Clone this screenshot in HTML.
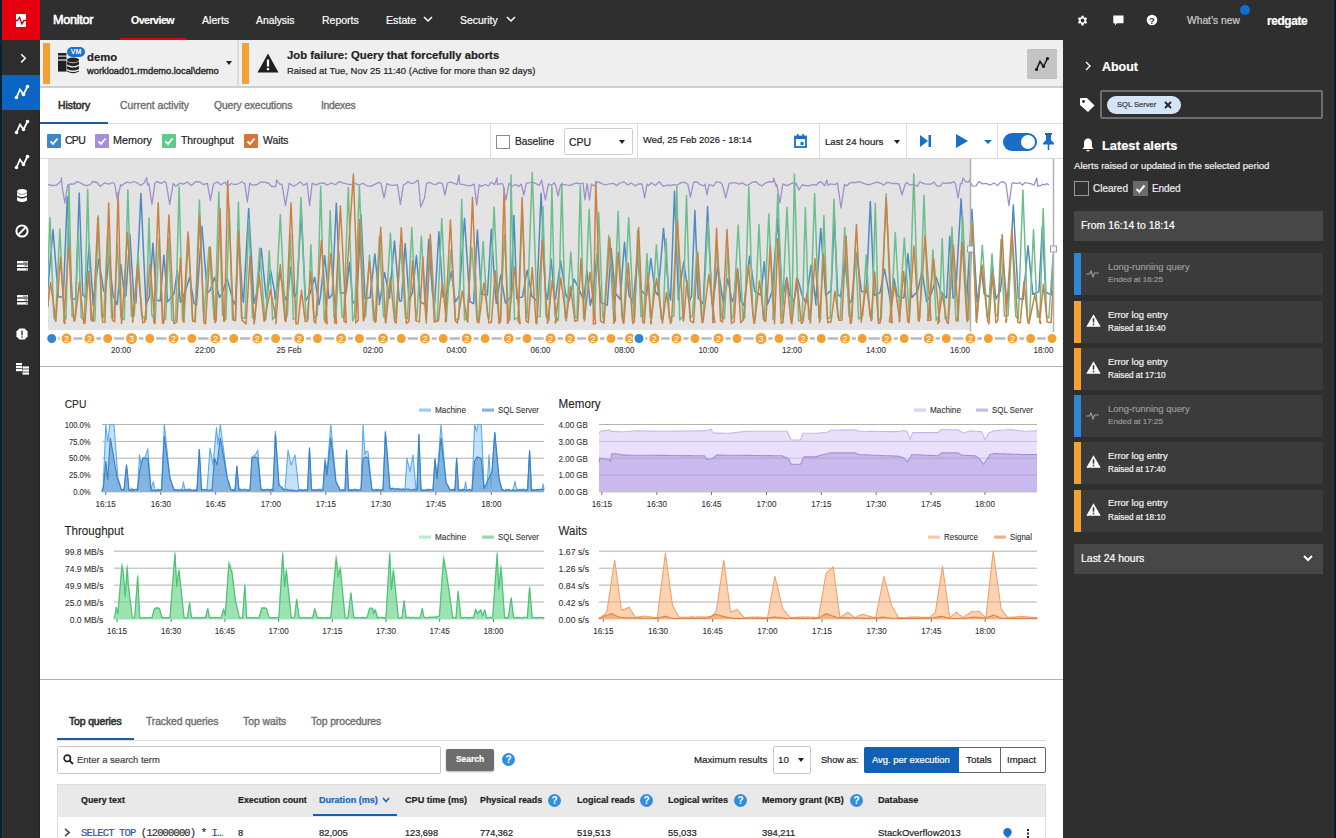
<!DOCTYPE html>
<html><head><meta charset="utf-8">
<style>
*{margin:0;padding:0;box-sizing:border-box}
html,body{width:1336px;height:838px;overflow:hidden;background:#fff;font-family:"Liberation Sans",sans-serif;color:#222}
.a{position:absolute}
.t{position:absolute;white-space:nowrap;line-height:1;-webkit-text-stroke:0.2px currentColor}
#hdr{left:0;top:0;width:1336px;height:40px;background:#2f2f2f}
#side{left:0;top:0;width:40px;height:838px;background:#2d2d2d}
#navy{left:0;top:0;width:2px;height:838px;background:#03242f;border-right:0}
#navy2{left:2px;top:0;width:1px;height:838px;background:#2e3440}
#sline{left:39px;top:40px;width:1px;height:798px;background:#232323}
#rnavy{left:1334px;top:0;width:2px;height:838px;background:#0c1d2e}
#rnavy2{left:1332px;top:0;width:2px;height:838px;background:#2e323c}
#rp{left:1063px;top:40px;width:269px;height:798px;background:#2f2f2f}
.nav{color:#fff;font-size:12px;font-weight:bold}
.sideico{left:2px;width:38px;height:34px}
.card{left:1074px;width:249px;height:42px;background:#3b3b3b}
.bar{left:1074px;width:7px;height:42px}
.ti{font-size:11px}
.su{font-size:9.5px}
.dim{color:#9a9a9a}
.wht{color:#f2f2f2}
.th{font-size:10px;font-weight:bold;color:#222}
.td{font-size:10px;color:#222}
.qh{width:13px;height:13px;border-radius:50%;background:#2f8ee0;color:#fff;font-size:10px;font-weight:bold;text-align:center;line-height:13px}
</style></head>
<body>
<div class="a" id="hdr"></div>
<div class="a" id="side"></div>
<div class="a" id="navy"></div><div class="a" id="navy2"></div><div class="a" id="sline"></div>
<div class="a" id="rp"></div>
<div class="a" id="rnavy2"></div><div class="a" id="rnavy"></div>

<!-- logo -->
<div class="a" style="left:2px;top:0;width:38px;height:40px;background:#e4000f"></div>
<svg class="a" style="left:16px;top:14px" width="10" height="13" viewBox="0 0 10 13"><rect x="0" y="0" width="10" height="13" rx="0.8" fill="#fff"/><path d="M0 6.5 H1.5 L3.5 3.5 L6 10 L8 6.5 H10" fill="none" stroke="#b3001b" stroke-width="1.3"/></svg>
<div class="t" style="left:53px;font-size:13px;font-weight:normal;-webkit-text-stroke:0.6px #fff;color:#fff;letter-spacing:-0.3px;top:14px;font-size:12.70px">Monitor</div>
<div class="t nav fitls" style="left:131px;top:15px;font-size:10.6px;letter-spacing:-0.516px">Overview</div>
<div class="a" style="left:120px;top:37.5px;width:67px;height:2.5px;background:#e4000f"></div>
<div class="t nav" style="left:202px;font-weight:normal;top:15px;font-size:10.64px">Alerts</div>
<div class="t nav" style="left:256px;font-weight:normal;top:16px;font-size:10.34px">Analysis</div>
<div class="t nav" style="left:322px;font-weight:normal;top:15px;font-size:10.51px">Reports</div>
<div class="t nav" style="left:386px;font-weight:normal;top:15px;font-size:10.68px">Estate</div>
<svg class="a" style="left:423px;top:16px" width="10" height="7"><path d="M1 1 L5 5 L9 1" fill="none" stroke="#fff" stroke-width="1.5"/></svg>
<div class="t nav" style="left:460px;font-weight:normal;top:16px;font-size:10.41px">Security</div>
<svg class="a" style="left:506px;top:16px" width="10" height="7"><path d="M1 1 L5 5 L9 1" fill="none" stroke="#fff" stroke-width="1.5"/></svg>

<!-- header right icons -->
<svg class="a" style="left:1076px;top:14px" width="13" height="13" viewBox="0 0 24 24"><path fill="#fff" d="M19.4 13a7.5 7.5 0 0 0 0-2l2.1-1.6-2-3.5-2.5 1a7 7 0 0 0-1.7-1L15 3h-4l-.4 2.8a7 7 0 0 0-1.7 1l-2.5-1-2 3.5L6.6 11a7.5 7.5 0 0 0 0 2l-2.1 1.6 2 3.5 2.5-1a7 7 0 0 0 1.7 1L11 21h4l.4-2.8a7 7 0 0 0 1.7-1l2.5 1 2-3.5zM13 15.5a3.5 3.5 0 1 1 0-7 3.5 3.5 0 0 1 0 7z" transform="translate(-1 0)"/></svg>
<svg class="a" style="left:1113px;top:15px" width="11" height="11" viewBox="0 0 11 11"><path d="M0.3 0.5 H10.5 V8.3 H3.8 L2 10.5 V8.3 H0.3 Z" fill="#fff"/></svg>
<svg class="a" style="left:1146px;top:14px" width="12" height="12" viewBox="0 0 12 12"><circle cx="6" cy="6" r="5.3" fill="#fff"/><text x="6" y="9.6" font-size="9.5" font-weight="bold" text-anchor="middle" fill="#2f2f2f" font-family="Liberation Sans">?</text></svg>
<div class="t" style="left:1187px;font-size:11px;color:#d0d0d0;top:16px;font-size:10.25px">What’s new</div>
<div class="a" style="left:1240px;top:5px;width:10px;height:10px;border-radius:50%;background:#0f6fd0"></div>
<div class="t" style="left:1267px;font-size:12.5px;font-weight:bold;color:#fff;letter-spacing:-0.4px;top:16px;font-size:11.92px">redgate</div>

<!-- sidebar icons -->
<div class="a" style="left:2px;top:41px;width:38px;height:34px;background:#2d2d2d"></div>
<svg class="a" style="left:20px;top:53px" width="7" height="11"><path d="M1.2 1.2 L5.3 5.3 L1.2 9.4" fill="none" stroke="#fff" stroke-width="1.5"/></svg>
<div class="a" style="left:2px;top:75px;width:38px;height:35px;background:#0b66c3"></div>
<svg class="a" style="left:14px;top:84px" width="16" height="16" viewBox="0 0 16 16"><path d="M2.5 13.5 L6 5.5 L9.5 10.5 L13.5 2.5" fill="none" stroke="#fff" stroke-width="1.8"/><circle cx="2.5" cy="13.5" r="1.8" fill="#fff"/><circle cx="9.5" cy="10.5" r="1.8" fill="#fff"/><circle cx="13.5" cy="2.5" r="1.8" fill="#fff"/></svg>
<svg class="a" style="left:14px;top:119px" width="16" height="16" viewBox="0 0 16 16"><path d="M2.5 13.5 L6 5.5 L9.5 10.5 L13.5 2.5" fill="none" stroke="#fff" stroke-width="1.8"/><circle cx="2.5" cy="13.5" r="1.8" fill="#fff"/><circle cx="9.5" cy="10.5" r="1.8" fill="#fff"/><circle cx="13.5" cy="2.5" r="1.8" fill="#fff"/></svg>
<svg class="a" style="left:14px;top:154px" width="16" height="16" viewBox="0 0 16 16"><path d="M2.5 13.5 L6 5.5 L9.5 10.5 L13.5 2.5" fill="none" stroke="#fff" stroke-width="1.8"/><circle cx="2.5" cy="13.5" r="1.8" fill="#fff"/><circle cx="9.5" cy="10.5" r="1.8" fill="#fff"/><circle cx="13.5" cy="2.5" r="1.8" fill="#fff"/></svg>
<svg class="a" style="left:17px;top:189px" width="10" height="14" viewBox="0 0 10 14"><ellipse cx="5" cy="2.5" rx="5" ry="2.5" fill="#fff"/><path d="M0 4 Q5 7 10 4 V6.5 Q5 9.5 0 6.5Z M0 8 Q5 11 10 8 V11.5 Q5 14.5 0 11.5Z" fill="#fff"/></svg>
<svg class="a" style="left:15px;top:224px" width="14" height="14" viewBox="0 0 14 14"><circle cx="7" cy="7" r="5.6" fill="none" stroke="#fff" stroke-width="2"/><path d="M3 11 L11 3" stroke="#fff" stroke-width="2"/></svg>
<svg class="a" style="left:17px;top:261px" width="11" height="10" viewBox="0 0 11 10"><rect x="0" y="0" width="11" height="2.4" fill="#fff"/><rect x="0" y="3.6" width="11" height="2.4" fill="#fff"/><rect x="0" y="7.2" width="11" height="2.4" fill="#fff"/><rect x="6" y="0.6" width="4.4" height="1.2" fill="#888"/><rect x="7.5" y="4.2" width="2.9" height="1.2" fill="#888"/><rect x="9" y="7.8" width="1.4" height="1.2" fill="#888"/></svg>
<svg class="a" style="left:17px;top:295px" width="11" height="10" viewBox="0 0 11 10"><rect x="0" y="0" width="11" height="2.4" fill="#fff"/><rect x="0" y="3.6" width="11" height="2.4" fill="#fff"/><rect x="0" y="7.2" width="11" height="2.4" fill="#fff"/><rect x="6" y="0.6" width="4.4" height="1.2" fill="#888"/><rect x="7.5" y="4.2" width="2.9" height="1.2" fill="#888"/><rect x="9" y="7.8" width="1.4" height="1.2" fill="#888"/></svg>
<svg class="a" style="left:16px;top:328px" width="12" height="12" viewBox="0 0 14 14"><path d="M4 0.5 H10 L13.5 4 V10 L10 13.5 H4 L0.5 10 V4 Z" fill="#fff"/><rect x="6.2" y="3" width="1.6" height="5.5" fill="#2d2d2d"/><rect x="6.2" y="9.8" width="1.6" height="1.6" fill="#2d2d2d"/></svg>
<svg class="a" style="left:16px;top:363px" width="13" height="12" viewBox="0 0 13 12"><rect x="0" y="0" width="6" height="2.2" fill="#fff"/><rect x="0" y="3" width="6" height="2.2" fill="#fff"/><rect x="0" y="6" width="6" height="2.2" fill="#fff"/><rect x="6.5" y="3.4" width="6.5" height="2.2" fill="#fff"/><rect x="6.5" y="6.4" width="6.5" height="2.2" fill="#fff"/><rect x="6.5" y="9.4" width="6.5" height="2.2" fill="#fff"/></svg>

<!-- banner -->
<div class="a" style="left:40px;top:40px;width:1023px;height:46px;background:#efefef"></div>
<div class="a" style="left:40px;top:86px;width:1023px;height:2px;background:#cfcfcf"></div>
<div class="a" style="left:43px;top:43px;width:7px;height:41px;background:#f5a030"></div>
<div class="a" style="left:237px;top:40px;width:2px;height:46px;background:#dcdcdc"></div>
<div class="a" style="left:242px;top:43px;width:7px;height:41px;background:#f5a030"></div>
<!-- db icon -->
<svg class="a" style="left:57px;top:52px" width="24" height="23" viewBox="0 0 24 23">
<rect x="1" y="1" width="8.5" height="2.6" fill="#222"/><rect x="1" y="4.6" width="8.5" height="2.8" fill="#222"/><rect x="1" y="8.6" width="8.5" height="11" fill="#222"/>
<ellipse cx="16" cy="8" rx="6" ry="2.4" fill="#222"/>
<path d="M10 9.6 Q16 12.8 22 9.6 V12.6 Q16 15.8 10 12.6Z M10 14 Q16 17.2 22 14 V17 Q16 20.2 10 17Z M10 18.4 Q16 21.6 22 18.4 V19.6 Q16 23 10 19.6Z" fill="#222"/>
</svg>
<div class="a" style="left:67px;top:47px;width:18px;height:10px;border-radius:5px;background:#1a73d0;color:#fff;font-size:7px;font-weight:bold;text-align:center;line-height:10px">VM</div>
<div class="t" style="left:87px;font-size:13px;font-weight:bold;color:#222;top:52px;font-size:11.32px">demo</div>
<div class="t" style="left:87px;font-size:10px;color:#222;-webkit-text-stroke:0.35px #222;top:67px;font-size:9.31px">workload01.rmdemo.local\demo</div>
<svg class="a" style="left:226px;top:61px" width="6" height="4"><path d="M0 0 H6 L3 4Z" fill="#222"/></svg>
<svg class="a" style="left:257px;top:53px" width="22" height="20" viewBox="0 0 22 20"><path d="M11 0.5 L21.5 19.5 H0.5 Z" fill="#1f1f1f"/><rect x="9.9" y="6.5" width="2.2" height="7" fill="#fff"/><rect x="9.9" y="15" width="2.2" height="2.2" fill="#fff"/></svg>
<div class="t" style="left:287px;font-size:12.5px;font-weight:bold;color:#222;top:50px;font-size:11.30px">Job failure: Query that forcefully aborts</div>
<div class="t" style="left:287px;font-size:10px;color:#222;top:66px;font-size:9.46px">Raised at Tue, Nov 25 11:40 (Active for more than 92 days)</div>
<div class="a" style="left:1027px;top:49px;width:30px;height:30px;background:#c4c4c4"></div>
<svg class="a" style="left:1034px;top:56px" width="16" height="16" viewBox="0 0 16 16"><path d="M2.5 13.5 L6 5.5 L9.5 10.5 L13.5 2.5" fill="none" stroke="#1a1a1a" stroke-width="1.6"/><circle cx="2.5" cy="13.5" r="1.6" fill="#1a1a1a"/><circle cx="9.5" cy="10.5" r="1.6" fill="#1a1a1a"/><circle cx="13.5" cy="2.5" r="1.6" fill="#1a1a1a"/></svg>

<!-- tabs -->
<div class="t fitls" style="left:58px;font-size:10.4px;color:#333;letter-spacing:0px;-webkit-text-stroke:0.6px #333;top:101px;letter-spacing:-0.021px">History</div>
<div class="t fitls" style="left:120px;font-size:10.4px;color:#6e6e6e;letter-spacing:0px;-webkit-text-stroke:0.35px #6e6e6e;top:101px;letter-spacing:-0.019px">Current activity</div>
<div class="t fitls" style="left:214px;font-size:10.4px;color:#6e6e6e;letter-spacing:0px;-webkit-text-stroke:0.35px #6e6e6e;top:101px;letter-spacing:-0.166px">Query executions</div>
<div class="t fitls" style="left:321px;font-size:10.4px;color:#6e6e6e;letter-spacing:0px;-webkit-text-stroke:0.35px #6e6e6e;top:101px;letter-spacing:-0.301px">Indexes</div>
<div class="a" style="left:40px;top:123px;width:1023px;height:1px;background:#dedede"></div>
<div class="a" style="left:40px;top:122px;width:68px;height:2px;background:#1f5c98"></div>

<!-- checkbox row -->
<div class="a" style="left:40px;top:158px;width:1023px;height:1px;background:#d6d6d6"></div>
<div class="a" style="left:47px;top:134px;width:14px;height:14px;background:#3f86c8;border-radius:1px"></div>
<div class="a" style="left:95px;top:134px;width:14px;height:14px;background:#a48fd8;border-radius:1px"></div>
<div class="a" style="left:162px;top:134px;width:14px;height:14px;background:#63c98c;border-radius:1px"></div>
<div class="a" style="left:244px;top:134px;width:14px;height:14px;background:#d5753a;border-radius:1px"></div>
<svg class="a" style="left:47px;top:134px" width="211" height="14"><g fill="none" stroke="#fff" stroke-width="1.8"><path d="M3.5 7.5 L6 10 L10.5 4.5"/><path d="M51.5 7.5 L54 10 L58.5 4.5"/><path d="M118.5 7.5 L121 10 L125.5 4.5"/><path d="M200.5 7.5 L203 10 L207.5 4.5"/></g></svg>
<div class="t fitls" style="left:65px;font-size:10.5px;color:#222;top:135px;letter-spacing:-0.724px">CPU</div>
<div class="t" style="left:113px;font-size:11px;color:#222;top:135px;font-size:10.80px">Memory</div>
<div class="t" style="left:181px;font-size:11px;color:#222;top:136px;font-size:10.34px">Throughput</div>
<div class="t" style="left:263px;font-size:11px;color:#222;top:136px;font-size:10.39px">Waits</div>
<div class="a" style="left:490px;top:124px;width:1px;height:34px;background:#dcdcdc"></div>
<div class="a" style="left:496px;top:135px;width:14px;height:14px;border:1px solid #8a8a8a;background:#fff"></div>
<div class="t" style="left:515px;font-size:11px;color:#222;top:137px;font-size:10.22px">Baseline</div>
<div class="a" style="left:564px;top:128px;width:69px;height:27px;border:1px solid #cfcfcf;border-radius:2px"></div>
<div class="t fitls" style="left:569px;font-size:10.5px;color:#222;top:137px">CPU</div>
<svg class="a" style="left:619px;top:140px" width="6" height="4"><path d="M0 0 H6 L3 4Z" fill="#222"/></svg>
<div class="a" style="left:637px;top:124px;width:1px;height:34px;background:#dcdcdc"></div>
<div class="t" style="left:643px;font-size:10px;color:#222;top:135px;font-size:9.40px">Wed, 25 Feb 2026 - 18:14</div>
<svg class="a" style="left:794px;top:134px" width="13" height="14" viewBox="0 0 13 14"><rect x="1" y="2.5" width="11" height="10.5" fill="none" stroke="#1a6ec8" stroke-width="1.8"/><rect x="1" y="2" width="11" height="3" fill="#1a6ec8"/><rect x="3" y="0" width="1.6" height="3" fill="#1a6ec8"/><rect x="8.4" y="0" width="1.6" height="3" fill="#1a6ec8"/><rect x="6.5" y="8" width="3" height="3" fill="#1a6ec8"/></svg>
<div class="a" style="left:819px;top:124px;width:1px;height:34px;background:#dcdcdc"></div>
<div class="t" style="left:825px;font-size:10.5px;color:#222;top:137px;font-size:9.64px">Last 24 hours</div>
<svg class="a" style="left:894px;top:140px" width="6" height="4"><path d="M0 0 H6 L3 4Z" fill="#222"/></svg>
<div class="a" style="left:906px;top:124px;width:1px;height:34px;background:#dcdcdc"></div>
<svg class="a" style="left:920px;top:135px" width="11" height="12" viewBox="0 0 11 12"><path d="M0 0 L8 6 L0 12Z" fill="#1a6ec8"/><rect x="8.5" y="0" width="2.5" height="12" fill="#1a6ec8"/></svg>
<svg class="a" style="left:956px;top:134px" width="12" height="14" viewBox="0 0 12 14"><path d="M0 0 L12 7 L0 14Z" fill="#1a6ec8"/></svg>
<svg class="a" style="left:984px;top:140px" width="8" height="4"><path d="M0 0 H8 L4 4Z" fill="#1a6ec8"/></svg>
<div class="a" style="left:997px;top:124px;width:1px;height:34px;background:#dcdcdc"></div>
<div class="a" style="left:1003px;top:133px;width:34px;height:18px;border-radius:9px;background:#1a6ec8"></div>
<div class="a" style="left:1021px;top:135px;width:14px;height:14px;border-radius:50%;background:#fff"></div>
<svg class="a" style="left:1042px;top:133px" width="13" height="17" viewBox="0 0 13 17"><path d="M3 0 H10 V2 H9 V7 L12 10 V11.5 H7.3 V17 H5.7 V11.5 H1 V10 L4 7 V2 H3Z" fill="#1a6ec8"/></svg>

<svg width="1336" height="838" style="position:absolute;left:0;top:0">
<rect x="48" y="159" width="922" height="171" fill="#e3e3e3"/>
<g fill="none" stroke-width="1.5" stroke-linejoin="round" clip-path="url(#mc)">
<clipPath id="mc"><rect x="48" y="159" width="1005" height="172"/></clipPath>
<path d="M48 306 L47.7 290.8 L53 229.6 L58.3 296.5 L63.3 297.5 L67.3 196.7 L71.3 298.9 L75.7 298.7 L79.2 193 L82.7 294.6 L85.2 297.8 L89.2 244.7 L93.2 305.1 L93.7 296.6 L98.7 259.2 L103.6 290.5 L105.2 293.8 L109.1 256.5 L113 295.4 L117.1 304.6 L120.9 264.5 L124.6 296.6 L125.9 295.7 L129.9 234.8 L134 300.8 L135.9 302.9 L140.9 193.5 L145.9 305.4 L149.3 296.8 L152.9 243.2 L156.5 300.1 L160.2 301.1 L163.9 255.2 L167.6 301.9 L174.1 293.5 L177.3 270.6 L180.5 302.2 L185.4 291.3 L189.7 277 L194 303.3 L196.5 305.1 L201.9 226.3 L207.3 293 L210.1 290.4 L214.7 277.2 L219.4 297.4 L221.8 294 L227.2 278.6 L232.7 300 L235.3 304.8 L238.7 235.8 L242.1 291.1 L243.4 302.5 L248.7 208.5 L254 303.3 L256.9 293 L261.2 248.2 L265.5 291.6 L266.5 300.5 L270.5 269.8 L274.6 291.7 L275.1 299.4 L279.7 270.6 L284.4 295.8 L287.2 301.3 L290.8 267.4 L294.3 297.1 L296.8 292.8 L301.2 212.1 L305.5 300.7 L310.4 292.6 L314.7 277.3 L319 304.7 L320.3 297.3 L324.7 255.8 L329 298.5 L332.2 294.5 L336.3 203.2 L340.4 293.4 L346.2 292.1 L349.5 262.5 L352.8 303.2 L356.9 299.2 L361 214.5 L365 298.3 L370.1 297.4 L374.8 253.9 L379.5 301.2 L379.3 304.6 L384.5 272.5 L389.7 298 L389.6 295.2 L394.5 241 L399.4 300.9 L401.4 301.2 L405.2 243.8 L409 299.8 L412.4 292.9 L416.4 255.5 L420.4 301.9 L425.1 304.6 L428.7 239.5 L432.4 292.4 L434.7 304.2 L438.9 231.7 L443.1 296.9 L447.2 292.3 L451.3 271.8 L455.3 302 L459.1 295.9 L464.5 218.3 L469.9 301.6 L473.6 303.7 L477.4 230 L481.3 294.2 L487.4 295.1 L491.3 229.3 L495.2 291.4 L496.2 303.3 L500.8 275.1 L505.4 303.1 L510.9 296.2 L513.9 215.6 L516.8 298.5 L522.5 296.9 L527.2 270.2 L531.9 296.4 L536.7 300.8 L541.1 193.2 L545.6 292.3 L547.6 299.2 L551.1 259.1 L554.5 297.5 L555.5 299 L560.6 260.8 L565.7 294.1 L568.9 301 L574.1 279 L579.4 290.3 L583.7 299.9 L587 270.7 L590.3 305.4 L593.1 294.4 L597 254.4 L600.9 302.6 L607.3 305.1 L611.2 248.5 L615.2 292.8 L620.1 299.4 L624.5 242.3 L629 295.3 L633.2 303.2 L637.2 256.7 L641.3 290.5 L646.5 296 L650.8 258.5 L655.1 291.3 L658 295.4 L663.5 228.4 L668.9 292.6 L670.6 299.9 L674.5 191.2 L678.4 299.8 L678.4 294.2 L683.8 261.8 L689.2 301.6 L691.5 296.4 L694.9 210.6 L698.2 297.8 L703.3 304.1 L707.6 206.6 L711.9 303.7 L713.2 301 L717.7 266.3 L722.3 296.3 L723.5 302.8 L727.8 278.8 L732.1 301.7 L733.8 298.1 L737.5 268.5 L741.1 301.3 L744.1 305.6 L749.5 256.3 L754.8 291.6 L760.9 295 L764.3 261.7 L767.6 304.2 L772.4 290.5 L777.6 219 L782.9 304.7 L783.6 293.3 L786.7 277.6 L789.9 295.9 L793.8 301.6 L798 279.6 L802.2 295.7 L805.9 302.8 L811.1 265.2 L816.2 304.9 L815.7 303.2 L820.7 228.4 L825.7 295.4 L831.1 290.4 L834.4 218.3 L837.7 293.9 L840.5 296.8 L844.8 260 L849.2 303.8 L851.6 300.3 L856.5 253.2 L861.5 291.5 L866.3 292.3 L870.3 201.4 L874.2 295.3 L880 292.7 L884.5 269.2 L889 293.3 L890.7 303.8 L894 278.7 L897.3 296.2 L903.9 297.9 L907.9 253.7 L911.9 297.4 L917.7 291.1 L922.1 271.2 L926.6 301.7 L931.7 292.8 L936.2 277.3 L940.6 291.4 L946.6 297.9 L949.8 236.3 L953.1 298 L955.6 293.7 L961.1 198.7 L966.5 300.1 L966.8 298.6 L971.9 209.3 L977.1 302 L978.2 296.5 L981.2 267.7 L984.2 294.2 L989.3 297 L992.6 266.8 L995.9 298.9 L1000.3 291.2 L1003.4 265.6 L1006.5 298.6 L1008.4 300.6 L1013.3 205 L1018.3 298.3 L1023.1 299.5 L1028 245.7 L1032.9 294.3 L1038.9 291.9 L1042.3 226.3 L1045.7 292.3 L1051.3 294.9 L1056.2 215.7 L1061.1 293.7" stroke="#5289c4"/>
<path d="M48 321 L46.1 317.6 L50 217.6 L53.9 318 L55.6 319.9 L59.8 229.1 L64 316.2 L66 319.2 L69 186.6 L72.1 316.8 L75.4 315.1 L78.3 230.8 L81.2 317.3 L84.5 320.9 L87.7 189.2 L90.9 319.9 L94.9 320.8 L98.3 215.8 L101.7 315.9 L103.7 317.2 L107.7 231.4 L111.7 318.3 L114 315 L117.4 243.8 L120.9 316.8 L124.3 319.6 L127.9 189.9 L131.4 316.4 L134.2 315.9 L138 252.1 L141.7 315.9 L146.2 319.7 L149 217.9 L151.8 315.1 L155.2 320.6 L159 239.5 L162.7 319.4 L165.8 319 L168.8 238.1 L171.8 320.3 L175.7 320.4 L179.1 186.3 L182.5 319.9 L184.2 318.3 L188.4 236.2 L192.5 320.2 L195 320.3 L199.4 199.9 L203.7 319.4 L203.9 316.2 L209 246.9 L214.2 319.7 L215 315.9 L218.8 192 L222.5 315.1 L225.9 319.5 L229.2 208 L232.5 319.2 L235.4 320.5 L238.4 202 L241.4 317.4 L245.1 318.3 L248.8 218.9 L252.5 317.6 L254.7 319.9 L259.6 248.6 L264.5 316.1 L265.8 319.9 L269.2 250.8 L272.6 319.8 L275.2 315.7 L280.3 214.5 L285.4 320.4 L287.5 315.2 L290.4 234.3 L293.3 319.5 L296.2 317.4 L301 197.3 L305.8 316.7 L308 319.6 L310.9 244.7 L313.9 317.3 L317.2 315.5 L320.7 186.2 L324.2 319.4 L326.3 320.6 L330.2 210.8 L334 317.6 L335.9 318.8 L339 253.6 L342.1 317.1 L343.8 317.5 L348.3 187.5 L352.7 320.9 L354.5 316.8 L359.4 186.5 L364.4 317.2 L365.6 316.6 L369.5 255 L373.5 320.5 L375.3 316.6 L379.4 236.6 L383.5 316.8 L385.7 315.5 L390.4 233 L395.1 315.6 L395.8 318.5 L400.6 245.4 L405.5 317.6 L407.5 318.7 L411.8 227.6 L416.1 320.5 L417.1 315 L421.4 236 L425.8 318.7 L426.2 317.5 L430.8 243.7 L435.3 320.5 L437.2 320.8 L441.8 218.7 L446.4 319.6 L446.5 318 L451 249.4 L455.4 319.5 L458.8 319.2 L461.7 199.2 L464.5 320 L466.9 317 L471.9 247.4 L476.9 319 L478.7 319.8 L483.1 241.4 L487.4 315.5 L489.2 318.7 L494.1 207.2 L499 320.2 L500.5 316 L504.5 234.8 L508.5 315.3 L509.9 320 L511 175 L514.5 319.7 L518.5 317.2 L522.2 207.1 L526 316 L527 318.3 L532.2 172.6 L537.3 315.8 L540.1 316.7 L543 206.6 L545.9 316.3 L549.1 320.2 L551.9 186.7 L554.8 316 L558.4 320.2 L561.8 183.3 L565.1 318.3 L566.5 317.1 L570.8 252.1 L575.1 316.9 L577 318.1 L580.3 185.8 L583.6 318.2 L584.6 319.9 L589.1 209.2 L593.6 316.8 L594.7 317.3 L598.7 212.5 L602.8 316.2 L603.8 320.5 L608.8 235.6 L613.8 320.2 L614.2 317.2 L618.1 211.4 L621.9 317.6 L623.8 316.2 L628.7 217.5 L633.7 317.1 L634.4 316.7 L637.7 229.9 L641 316.7 L643.7 315.6 L647 253.4 L650.3 317.8 L651.7 319.1 L656.4 244.9 L661.1 318.9 L663.2 318.4 L666.2 238.8 L669.2 318.1 L673.9 316.1 L676.8 186.4 L679.7 320 L682.9 316.3 L686.5 195.4 L690.1 317.9 L692.4 316 L696.9 251.2 L701.5 318 L702.9 320.5 L707.9 221.9 L713 319.3 L712.5 317.2 L717.1 244.1 L721.6 317.6 L724.4 318.7 L727.9 248 L731.5 319.8 L733.3 315.2 L738.2 225.1 L743 319.8 L744.7 318 L748.8 186.9 L752.8 315.2 L755 318.6 L759 224.4 L763.1 318.1 L764.3 320.6 L768.8 214 L773.3 315.3 L772.8 319.4 L777.8 193.9 L782.8 318.4 L782.2 315.6 L787 207.2 L791.7 319.9 L791.9 315.4 L794.4 174 L798.7 320.9 L802.2 319.6 L805.4 207.5 L808.7 318.9 L810.3 320.4 L814.6 193.6 L818.9 317.9 L820.5 319.8 L823.9 215.6 L827.3 318.7 L830.2 317.8 L834 199.3 L837.8 317.2 L840.3 317.8 L844.7 227.8 L849 315.9 L852 316.6 L855.4 248.2 L858.7 319.1 L862.7 315.5 L866.2 254.9 L869.8 315.7 L872.2 319.6 L875.3 203.2 L878.4 320.4 L881.3 318.5 L886.1 193.8 L890.9 318.6 L890.9 320.9 L895.3 232.8 L899.8 315.5 L899.2 320.3 L904.3 238.1 L909.4 318 L909.3 319.9 L913.8 173.9 L918.2 320.8 L919.9 317.9 L924 195.3 L928.1 319.9 L929.6 316 L932.9 249.9 L936.2 320.4 L939.3 315.3 L942.2 238.5 L945.2 319 L948.1 317.9 L952 227.1 L955.9 320.9 L958.3 315.9 L962.7 216.8 L967.2 316.6 L968.7 319.8 L972.5 220.9 L976.3 320.9 L977.4 316.2 L982.3 245.3 L987.2 317.2 L988.2 317.4 L992 253.8 L995.8 316.2 L997.6 315.5 L1001 239.5 L1004.4 316.1 L1008.1 315.6 L1011.9 233.6 L1015.7 316.4 L1018.3 318.6 L1022.9 189.9 L1027.6 318.9 L1029.5 320.9 L1033.5 229.7 L1037.4 317.3 L1039.9 315.3 L1043.2 208.6 L1046.6 317 L1048.9 317.8 L1053.1 255 L1057.3 317.1" stroke="#6cbf8c"/>
<path d="M48 324 L45.5 323.6 L50.6 282.4 L55.7 320.7 L55.8 321.5 L60.4 257.2 L65 323.6 L63.7 321.6 L68.8 245.3 L73.9 321.1 L75 320.2 L79.5 282.1 L83.9 323.6 L85 322.8 L88.5 271.4 L91.9 320.7 L93.1 321.4 L97.8 217.7 L102.6 321.9 L104.9 322.3 L108.7 203 L112.5 320.4 L114.7 321.7 L118.1 192.3 L121.5 323.4 L121.9 321.1 L127.5 232.4 L133.1 321.1 L132.5 322 L137.7 265 L142.8 322.9 L144.7 322.1 L149.9 264.4 L155.1 323.8 L153.7 321.8 L158.2 202.7 L162.6 323.6 L163.9 322.6 L168.9 215 L173.9 323.7 L176.8 322 L180.5 257.4 L184.1 322.1 L183.2 321.8 L188 231.9 L192.8 321.2 L195.2 321.9 L199.6 215.7 L204 322.9 L205.5 323.8 L210.3 247.1 L215.1 322.7 L216.2 320.1 L220 208.8 L223.7 321.2 L224.5 321.2 L227.7 180.8 L233.4 320.3 L235.4 320.6 L238.7 230.7 L242 320.1 L246 324 L250.1 256.2 L254.1 323.9 L254.4 322.2 L259.3 275.5 L264.1 321.5 L264.5 320.5 L270.4 289.6 L276.3 320.6 L275.8 323.7 L280.3 264.6 L284.9 320.1 L286 321.7 L291 202.8 L296 323.9 L297.9 323.8 L301.5 290.3 L305.2 321.6 L307.2 321 L310.7 271.8 L314.1 321.3 L315.6 323.3 L321.4 240.5 L327.2 323.7 L324.8 321.5 L330.7 253.2 L336.5 323.6 L334.6 322.6 L340.4 205.9 L346.3 322.7 L343.9 320.9 L353.4 174 L358.4 320.2 L355.7 323 L359.5 219.6 L363.4 320.7 L364 320.2 L369.5 261.4 L374.9 322.2 L376 321.5 L380.7 227.2 L385.4 322 L385.8 323 L390.3 277.7 L394.7 321.7 L396.2 323 L401.3 227.7 L406.4 323.4 L408.9 321.4 L412.5 260.7 L416.1 320.9 L419.4 321.9 L422.9 257 L426.3 323 L426.3 320.3 L430.3 234.5 L434.2 322 L438.4 320.8 L442.4 282.4 L446.4 321.6 L445.4 321.6 L450.4 220 L455.4 320.8 L457.3 323.1 L462.3 291.1 L467.2 321.4 L467.8 321.9 L472.5 197.4 L477.3 322.3 L478.9 322.6 L483.9 282.9 L488.9 323 L491.4 322.3 L495.3 271 L499.1 323.4 L500.6 322 L504.1 188 L507.6 323.5 L508.9 320.5 L514.5 267.3 L520.1 323.8 L518.1 320.7 L522.1 197.4 L526.1 320.8 L528.3 322.6 L532.2 267.4 L536.1 323.4 L536.8 323.7 L542.2 240.2 L547.6 323.2 L547.8 322.6 L552.3 280.3 L556.8 320.9 L555.2 323 L560.8 278.1 L566.4 320.7 L566.2 320.4 L570.5 286.2 L574.9 321.3 L577.6 320.3 L581 258.6 L584.4 320.2 L584.3 320.8 L590 272.4 L595.7 323.5 L593.3 324 L595.8 181.5 L600.6 321.2 L604 323.2 L609.7 237.9 L615.5 320.1 L613.6 323.3 L618.2 252.3 L622.8 321.9 L623.8 323.4 L628.3 263.1 L632.7 323.5 L634.3 321.7 L638.6 227.5 L642.8 322.5 L644.3 323 L647.8 273.5 L651.4 323.7 L650.6 322.7 L656.6 278.2 L662.5 323.1 L662.5 322.7 L666.5 292.7 L670.5 323.4 L671.5 321.7 L677.4 220.8 L683.3 321.1 L683.6 320.6 L687 280.4 L690.5 321 L693.6 322.8 L697.8 252.2 L702.1 322.4 L702.9 322.6 L708.9 274.5 L714.8 322.2 L712.6 322.3 L716.6 228.3 L720.5 320.7 L722.5 322.2 L727 229.6 L731.5 323.5 L734.2 321.6 L737.4 268.8 L740.7 322.7 L743.2 320.3 L748.5 264.6 L753.9 323.3 L754.6 322.9 L759.5 280.9 L764.3 320.5 L765.8 321.3 L770.2 245.8 L774.6 323.7 L774.5 323.4 L777.9 238.4 L781.2 323.2 L782.9 322.6 L786.9 279.4 L790.9 320.8 L791.8 323.8 L796.6 277.9 L801.4 323.5 L802.9 322.2 L806.8 294.5 L810.7 321.5 L810.2 323 L815 258.8 L819.8 320.9 L819.4 322.3 L823.6 254 L827.8 322.7 L831 321.8 L834.9 291.2 L838.8 320.2 L841.9 320.2 L846.1 236 L850.3 323.2 L851.4 323 L856.4 224.6 L861.3 321.2 L861.2 322.2 L866.2 284.7 L871.2 320.2 L870.9 320.6 L874.7 272.1 L878.5 323.4 L880.3 322.5 L886.2 198.1 L892.1 322.7 L889.4 321.5 L894.6 284.7 L899.9 320.9 L899.4 322 L903.6 271.4 L907.8 321.6 L909 322.7 L913.9 245.9 L918.7 320.8 L919.2 321.3 L925.1 236 L931 320.1 L927.8 320.6 L933.6 258.8 L939.5 321 L937.7 323.8 L942.3 293.7 L946.9 322.5 L948.3 323.5 L953.4 245.1 L958.4 320.1 L957.5 321.2 L962.2 242.1 L966.9 320.8 L967.5 321.5 L972.1 223.6 L976.7 322.6 L976.3 321.4 L982 265.1 L987.7 321.1 L989 323.6 L992.4 273.4 L995.9 322.8 L997.8 320.5 L1002.2 234.6 L1006.7 320.1 L1005.9 322.6 L1011.9 228.5 L1017.8 322.3 L1020.2 322.9 L1024 281.4 L1027.8 322.3 L1028.9 323.6 L1034.8 294.8 L1040.7 323.5 L1039.6 322.2 L1043.4 284.2 L1047.2 321.9 L1051.1 322.7 L1054.3 265.1 L1057.6 323.2" stroke="#cc8043"/>
<path d="M48 184.6 L52 185.5 L56.4 185.2 L60.7 181.6 L61.5 178 L61.8 184.5 L64.8 203 L67.8 184.4 L67.9 186 L70.7 183.8 L73.7 184.2 L77.3 181.6 L80.2 182.9 L84.6 185.3 L87.4 185.5 L90.2 184.6 L92.9 181.5 L97.2 182.5 L100.1 186.4 L104.3 182.9 L108.8 184.2 L112.6 182.5 L114.5 183.5 L117.5 200.6 L120.5 184.6 L121.4 186 L124.5 183.3 L127.4 182.2 L130 183 L133.7 181.5 L137.6 183.2 L140.7 185.6 L144.1 183.1 L146.8 177.7 L147.6 185 L148.9 183.8 L151.9 204.4 L154.9 183.3 L157 181.6 L161 183.3 L164.7 181.5 L166.2 183.1 L169.7 204.4 L173.2 183.3 L175.7 186.1 L180.1 183.2 L183.3 184.1 L187.3 182 L191.3 185.5 L195.6 181.7 L200 182 L203.1 184.6 L207.4 183.5 L210.4 200.6 L213.4 184.4 L214.9 183.1 L217.8 181.9 L220.6 184.9 L225.1 182.3 L227.7 186.4 L231.3 183.5 L234.2 184.5 L238.4 183.8 L241.7 181.8 L244.8 183.6 L247.3 202 L249.8 183.1 L252.3 185.2 L256.7 184.7 L260.8 182 L264.2 182.2 L268.3 183 L271.7 186.5 L276 186.4 L276.5 180 L279.4 183.9 L282 184.5 L285.5 205.7 L289 184.1 L289.2 183.4 L293.7 186.3 L297.4 184 L300.6 181.9 L303.6 185.4 L307.1 183.1 L309.6 205.7 L312.1 183.1 L315.8 184.8 L319.9 183.3 L323.8 182.9 L327.2 185.3 L331.1 183 L335.5 184.7 L339.2 181.6 L342.8 182.8 L346.6 183.8 L350.7 184.7 L354.8 183.2 L358.6 185.2 L362.8 183.3 L367 185.8 L370.8 186.4 L375.3 184.1 L378.8 182.3 L381 183.3 L384 198 L387 183.7 L390.4 185.2 L393.2 185.4 L396.9 184.8 L397.4 184.7 L400.4 204.4 L403.4 184.9 L404.3 184.7 L408.2 181.6 L411 183.7 L414.8 182.6 L418 180 L418.7 184.2 L420.7 207 L424.5 198 L426.5 183.7 L427 183.1 L429.9 182.5 L432.5 183.8 L435.7 184.6 L439.4 182.7 L442.4 183.7 L444.9 195 L447.4 183 L450.3 182.1 L454.5 183.4 L457.1 184.6 L458.9 175 L459.8 184.2 L462.9 184.4 L467.4 185.6 L470.7 185.6 L474.2 184.2 L476.7 205 L479.2 184.7 L480.9 186.3 L485.3 184.5 L488.5 186 L491 182 L494.7 184.6 L497 178 L497.4 184.6 L501.7 183.4 L503 184.5 L506 200 L509 183.2 L511.4 186.3 L515.8 184.5 L518.8 186.4 L521.3 184.1 L523.8 195 L526.3 183.3 L528.9 182.9 L532.3 182.1 L536.1 183.7 L539.2 185.4 L541.6 180 L542.4 184.4 L545.4 200 L548.4 183.9 L551.3 185.4 L554.3 182.8 L555.6 184.9 L558.1 196 L560.6 184.6 L563.6 184.7 L567.3 185.2 L570 185.3 L573.1 184.2 L576.3 183 L579.9 183.8 L583 183.2 L585 200 L587 183.6 L587.5 184.8 L589.5 200 L591.5 183.9 L594.1 185.9 L597.7 181.6 L601.8 183.6 L605.4 185 L609.2 183.9 L613.5 183.4 L616.8 185.8 L619.7 183 L623.8 181.8 L628 185 L631.4 182.9 L635.4 186.1 L638.2 183.9 L641.8 184 L642.1 183.9 L644.6 198 L647.1 183.9 L648.7 185.6 L651.3 182.7 L655.4 185.5 L659.3 181.6 L663.2 186.4 L667.7 185 L670.3 185.7 L673.2 184.7 L677.6 185.1 L680.4 183 L684.7 182.2 L687.9 184.5 L690.4 197 L692.9 184.9 L693.9 182 L697.1 181.9 L699.8 184.4 L703.7 185.9 L705 184.1 L707 195 L709 184.9 L709.6 184.5 L713.1 186.2 L716.4 181.8 L720.3 182.3 L722.2 184.2 L725.7 198 L729.2 183.2 L732.1 182.8 L735.7 182.8 L739.7 184.1 L742.5 182.7 L745.7 185.2 L748.6 185.1 L752.4 181.9 L756.2 182 L759 184.5 L761.9 185.9 L765.4 183.1 L769.5 181.6 L773.4 181.8 L773.5 178 L776.2 186.3 L776.9 184.6 L779.9 203 L782.9 183.8 L786.7 185.6 L789.4 184.6 L792.6 182.7 L795.8 184.6 L796 183.1 L799 190 L802 185 L805.6 185.5 L808.9 185.8 L812.5 184.5 L816.1 185.2 L819.4 182 L822 182.5 L824.6 185.9 L827 180 L828 185.3 L830.5 183.9 L834.8 184.6 L837.5 183.1 L841 208 L844.5 184.2 L847 185.9 L849.8 182.8 L852.8 182.3 L855.9 182.7 L859.3 181.7 L863.7 183.3 L868.1 184.9 L871.9 183.9 L876.3 182.1 L880.2 183 L884 185.1 L886.8 182.5 L889.4 182.7 L892 183.5 L896.5 183.3 L899 184 L902 195 L905 184.8 L906.6 182.3 L909.6 184.9 L914 184.7 L917.3 186.4 L919.8 181.8 L923.9 183.6 L926.5 184.2 L931 184.1 L934.2 182 L936.8 186 L940.3 186.2 L942.9 182.7 L945.5 183.5 L948.1 182.8 L951.4 183 L954 181.7 L955.5 183.8 L958 198 L960.5 183.4 L962 183.5 L963 178 L965.6 181.9 L968.7 182 L969.5 180 L972.3 186.1 L976 185.8 L978.9 181.6 L982.5 183.9 L986.1 183.4 L989.9 185.1 L994.2 183 L997.6 185.6 L1000.5 182.1 L1003.7 181.9 L1005.9 183.6 L1008.9 205.7 L1011.9 183.4 L1013.5 182.7 L1016.2 183.6 L1019.8 182.7 L1022.4 185 L1025 182.5 L1028.1 183.4 L1030.8 183.6 L1033.9 185.3 L1036.9 178 L1037.6 186 L1041.4 185.3 L1042.5 184.1 L1044.5 185 L1046.5 183.7 L1049.1 184.8" stroke="#9e90cc" stroke-width="1.3"/>
</g>
<line x1="970.5" y1="159" x2="970.5" y2="332" stroke="#b0b0b0" stroke-width="1.5"/>
<line x1="1053.5" y1="159" x2="1053.5" y2="332" stroke="#b0b0b0" stroke-width="1.5"/>
<rect x="967.5" y="246" width="6" height="6" fill="#f2f2f2" stroke="#a0a0a0"/>
<rect x="1050.5" y="246" width="6" height="6" fill="#f2f2f2" stroke="#a0a0a0"/>
<line x1="52" y1="338.5" x2="1053" y2="338.5" stroke="#b4b9c2" stroke-width="2.5"/><circle cx="51.7" cy="338.5" r="5.5" fill="#2f86d6" stroke="#fff" stroke-width="2"/><circle cx="66.5" cy="338.5" r="6" fill="#f5a033" stroke="#fff" stroke-width="2"/><text x="66.5" y="341.8" font-size="9" fill="#fff" text-anchor="middle" font-family="Liberation Sans">2</text><circle cx="89.4" cy="338.5" r="6" fill="#f5a033" stroke="#fff" stroke-width="2"/><text x="89.4" y="341.8" font-size="9" fill="#fff" text-anchor="middle" font-family="Liberation Sans">2</text><circle cx="107.7" cy="338.5" r="5.5" fill="#f5a033" stroke="#fff" stroke-width="2"/><circle cx="131.5" cy="338.5" r="6.5" fill="#f5a033" stroke="#fff" stroke-width="2"/><text x="131.5" y="341.8" font-size="9" fill="#fff" text-anchor="middle" font-family="Liberation Sans">3</text><circle cx="149.8" cy="338.5" r="5.5" fill="#f5a033" stroke="#fff" stroke-width="2"/><circle cx="173.5" cy="338.5" r="6" fill="#f5a033" stroke="#fff" stroke-width="2"/><text x="173.5" y="341.8" font-size="9" fill="#fff" text-anchor="middle" font-family="Liberation Sans">2</text><circle cx="191.8" cy="338.5" r="5.5" fill="#f5a033" stroke="#fff" stroke-width="2"/><circle cx="215.4" cy="338.5" r="6" fill="#f5a033" stroke="#fff" stroke-width="2"/><text x="215.4" y="341.8" font-size="9" fill="#fff" text-anchor="middle" font-family="Liberation Sans">2</text><circle cx="233.70000000000002" cy="338.5" r="5.5" fill="#f5a033" stroke="#fff" stroke-width="2"/><circle cx="257.3" cy="338.5" r="6" fill="#f5a033" stroke="#fff" stroke-width="2"/><text x="257.3" y="341.8" font-size="9" fill="#fff" text-anchor="middle" font-family="Liberation Sans">2</text><circle cx="275.6" cy="338.5" r="5.5" fill="#f5a033" stroke="#fff" stroke-width="2"/><circle cx="299.2" cy="338.5" r="6" fill="#f5a033" stroke="#fff" stroke-width="2"/><text x="299.2" y="341.8" font-size="9" fill="#fff" text-anchor="middle" font-family="Liberation Sans">2</text><circle cx="317.5" cy="338.5" r="5.5" fill="#f5a033" stroke="#fff" stroke-width="2"/><circle cx="341.09999999999997" cy="338.5" r="6" fill="#f5a033" stroke="#fff" stroke-width="2"/><text x="341.09999999999997" y="341.8" font-size="9" fill="#fff" text-anchor="middle" font-family="Liberation Sans">2</text><circle cx="359.4" cy="338.5" r="5.5" fill="#f5a033" stroke="#fff" stroke-width="2"/><circle cx="382.99999999999994" cy="338.5" r="6" fill="#f5a033" stroke="#fff" stroke-width="2"/><text x="382.99999999999994" y="341.8" font-size="9" fill="#fff" text-anchor="middle" font-family="Liberation Sans">2</text><circle cx="401.29999999999995" cy="338.5" r="5.5" fill="#f5a033" stroke="#fff" stroke-width="2"/><circle cx="424.8999999999999" cy="338.5" r="6" fill="#f5a033" stroke="#fff" stroke-width="2"/><text x="424.8999999999999" y="341.8" font-size="9" fill="#fff" text-anchor="middle" font-family="Liberation Sans">2</text><circle cx="443.19999999999993" cy="338.5" r="5.5" fill="#f5a033" stroke="#fff" stroke-width="2"/><circle cx="466.7999999999999" cy="338.5" r="6" fill="#f5a033" stroke="#fff" stroke-width="2"/><text x="466.7999999999999" y="341.8" font-size="9" fill="#fff" text-anchor="middle" font-family="Liberation Sans">2</text><circle cx="485.0999999999999" cy="338.5" r="5.5" fill="#f5a033" stroke="#fff" stroke-width="2"/><circle cx="508.6999999999999" cy="338.5" r="6" fill="#f5a033" stroke="#fff" stroke-width="2"/><text x="508.6999999999999" y="341.8" font-size="9" fill="#fff" text-anchor="middle" font-family="Liberation Sans">2</text><circle cx="526.9999999999999" cy="338.5" r="5.5" fill="#f5a033" stroke="#fff" stroke-width="2"/><circle cx="550.5999999999999" cy="338.5" r="6" fill="#f5a033" stroke="#fff" stroke-width="2"/><text x="550.5999999999999" y="341.8" font-size="9" fill="#fff" text-anchor="middle" font-family="Liberation Sans">2</text><circle cx="570" cy="338.5" r="6" fill="#f5a033" stroke="#fff" stroke-width="2"/><text x="570" y="341.8" font-size="9" fill="#fff" text-anchor="middle" font-family="Liberation Sans">2</text><circle cx="593" cy="338.5" r="6" fill="#f5a033" stroke="#fff" stroke-width="2"/><text x="593" y="341.8" font-size="9" fill="#fff" text-anchor="middle" font-family="Liberation Sans">2</text><circle cx="611" cy="338.5" r="5.5" fill="#f5a033" stroke="#fff" stroke-width="2"/><circle cx="630" cy="338.5" r="6" fill="#f5a033" stroke="#fff" stroke-width="2"/><text x="630" y="341.8" font-size="9" fill="#fff" text-anchor="middle" font-family="Liberation Sans">2</text><circle cx="639" cy="338.5" r="5.5" fill="#2f86d6" stroke="#fff" stroke-width="2"/><circle cx="654.3" cy="338.5" r="6" fill="#f5a033" stroke="#fff" stroke-width="2"/><text x="654.3" y="341.8" font-size="9" fill="#fff" text-anchor="middle" font-family="Liberation Sans">2</text><circle cx="676.5" cy="338.5" r="6" fill="#f5a033" stroke="#fff" stroke-width="2"/><text x="676.5" y="341.8" font-size="9" fill="#fff" text-anchor="middle" font-family="Liberation Sans">2</text><circle cx="695" cy="338.5" r="5.5" fill="#f5a033" stroke="#fff" stroke-width="2"/><circle cx="718.5" cy="338.5" r="6" fill="#f5a033" stroke="#fff" stroke-width="2"/><text x="718.5" y="341.8" font-size="9" fill="#fff" text-anchor="middle" font-family="Liberation Sans">2</text><circle cx="737" cy="338.5" r="5.5" fill="#f5a033" stroke="#fff" stroke-width="2"/><circle cx="761" cy="338.5" r="6.5" fill="#f5a033" stroke="#fff" stroke-width="2"/><text x="761" y="341.8" font-size="9" fill="#fff" text-anchor="middle" font-family="Liberation Sans">3</text><circle cx="779" cy="338.5" r="5.5" fill="#f5a033" stroke="#fff" stroke-width="2"/><circle cx="803" cy="338.5" r="6" fill="#f5a033" stroke="#fff" stroke-width="2"/><text x="803" y="341.8" font-size="9" fill="#fff" text-anchor="middle" font-family="Liberation Sans">2</text><circle cx="821.3" cy="338.5" r="5.5" fill="#f5a033" stroke="#fff" stroke-width="2"/><circle cx="845" cy="338.5" r="6" fill="#f5a033" stroke="#fff" stroke-width="2"/><text x="845" y="341.8" font-size="9" fill="#fff" text-anchor="middle" font-family="Liberation Sans">2</text><circle cx="862.2" cy="338.5" r="5.5" fill="#f5a033" stroke="#fff" stroke-width="2"/><circle cx="886.7" cy="338.5" r="6" fill="#f5a033" stroke="#fff" stroke-width="2"/><text x="886.7" y="341.8" font-size="9" fill="#fff" text-anchor="middle" font-family="Liberation Sans">2</text><circle cx="904.2" cy="338.5" r="5.5" fill="#f5a033" stroke="#fff" stroke-width="2"/><circle cx="928.7" cy="338.5" r="6" fill="#f5a033" stroke="#fff" stroke-width="2"/><text x="928.7" y="341.8" font-size="9" fill="#fff" text-anchor="middle" font-family="Liberation Sans">2</text><circle cx="946.3" cy="338.5" r="5.5" fill="#f5a033" stroke="#fff" stroke-width="2"/><circle cx="970.4" cy="338.5" r="6" fill="#f5a033" stroke="#fff" stroke-width="2"/><text x="970.4" y="341.8" font-size="9" fill="#fff" text-anchor="middle" font-family="Liberation Sans">2</text><circle cx="988.3" cy="338.5" r="5.5" fill="#f5a033" stroke="#fff" stroke-width="2"/><circle cx="1012.4" cy="338.5" r="6" fill="#f5a033" stroke="#fff" stroke-width="2"/><text x="1012.4" y="341.8" font-size="9" fill="#fff" text-anchor="middle" font-family="Liberation Sans">2</text><circle cx="1030.7" cy="338.5" r="5.5" fill="#f5a033" stroke="#fff" stroke-width="2"/><circle cx="1052" cy="338.5" r="5.5" fill="#f5a033" stroke="#fff" stroke-width="2"/><text x="121" y="353.29" font-size="9.19" textLength="20.00" lengthAdjust="spacingAndGlyphs" fill="#333" stroke="#333" stroke-width="0.1" text-anchor="middle" font-family="Liberation Sans">20:00</text><text x="205" y="353.29" font-size="9.19" textLength="20.00" lengthAdjust="spacingAndGlyphs" fill="#333" stroke="#333" stroke-width="0.1" text-anchor="middle" font-family="Liberation Sans">22:00</text><text x="289" y="353.29" font-size="9.19" textLength="24.88" lengthAdjust="spacingAndGlyphs" fill="#333" stroke="#333" stroke-width="0.1" text-anchor="middle" font-family="Liberation Sans">25 Feb</text><text x="373" y="353.29" font-size="9.19" textLength="20.00" lengthAdjust="spacingAndGlyphs" fill="#333" stroke="#333" stroke-width="0.1" text-anchor="middle" font-family="Liberation Sans">02:00</text><text x="456.5" y="353.29" font-size="9.19" textLength="20.00" lengthAdjust="spacingAndGlyphs" fill="#333" stroke="#333" stroke-width="0.1" text-anchor="middle" font-family="Liberation Sans">04:00</text><text x="540.5" y="353.29" font-size="9.19" textLength="20.00" lengthAdjust="spacingAndGlyphs" fill="#333" stroke="#333" stroke-width="0.1" text-anchor="middle" font-family="Liberation Sans">06:00</text><text x="624.5" y="353.29" font-size="9.19" textLength="20.00" lengthAdjust="spacingAndGlyphs" fill="#333" stroke="#333" stroke-width="0.1" text-anchor="middle" font-family="Liberation Sans">08:00</text><text x="708.4" y="353.29" font-size="9.19" textLength="20.00" lengthAdjust="spacingAndGlyphs" fill="#333" stroke="#333" stroke-width="0.1" text-anchor="middle" font-family="Liberation Sans">10:00</text><text x="792" y="353.29" font-size="9.19" textLength="20.00" lengthAdjust="spacingAndGlyphs" fill="#333" stroke="#333" stroke-width="0.1" text-anchor="middle" font-family="Liberation Sans">12:00</text><text x="876" y="353.29" font-size="9.19" textLength="20.00" lengthAdjust="spacingAndGlyphs" fill="#333" stroke="#333" stroke-width="0.1" text-anchor="middle" font-family="Liberation Sans">14:00</text><text x="960" y="353.29" font-size="9.19" textLength="20.00" lengthAdjust="spacingAndGlyphs" fill="#333" stroke="#333" stroke-width="0.1" text-anchor="middle" font-family="Liberation Sans">16:00</text><text x="1043.5" y="353.29" font-size="9.19" textLength="20.00" lengthAdjust="spacingAndGlyphs" fill="#333" stroke="#333" stroke-width="0.1" text-anchor="middle" font-family="Liberation Sans">18:00</text><line x1="40" y1="366.5" x2="1063" y2="366.5" stroke="#b2b2b2"/><line x1="40" y1="679.5" x2="1063" y2="679.5" stroke="#b2b2b2"/><text x="64.7" y="407.53" font-size="11.82" textLength="21.70" lengthAdjust="spacingAndGlyphs" fill="#222" stroke="#222" stroke-width="0.1" text-anchor="start" font-family="Liberation Sans">CPU</text><line x1="102" y1="424.5" x2="544" y2="424.5" stroke="#c9c9c9" stroke-width="1"/><text x="90.7" y="427.66" font-size="8.82" textLength="26.00" lengthAdjust="spacingAndGlyphs" fill="#333" stroke="#333" stroke-width="0.1" text-anchor="end" font-family="Liberation Sans">100.0%</text><line x1="102" y1="441.4" x2="544" y2="441.4" stroke="#c9c9c9" stroke-width="1"/><text x="90.7" y="444.53" font-size="8.82" textLength="21.74" lengthAdjust="spacingAndGlyphs" fill="#333" stroke="#333" stroke-width="0.1" text-anchor="end" font-family="Liberation Sans">75.0%</text><line x1="102" y1="458.2" x2="544" y2="458.2" stroke="#c9c9c9" stroke-width="1"/><text x="90.7" y="461.41" font-size="8.82" textLength="21.74" lengthAdjust="spacingAndGlyphs" fill="#333" stroke="#333" stroke-width="0.1" text-anchor="end" font-family="Liberation Sans">50.0%</text><line x1="102" y1="475.1" x2="544" y2="475.1" stroke="#c9c9c9" stroke-width="1"/><text x="90.7" y="478.28" font-size="8.82" textLength="21.74" lengthAdjust="spacingAndGlyphs" fill="#333" stroke="#333" stroke-width="0.1" text-anchor="end" font-family="Liberation Sans">25.0%</text><line x1="102" y1="492.0" x2="544" y2="492.0" stroke="#c9c9c9" stroke-width="1"/><text x="90.7" y="495.16" font-size="8.82" textLength="17.47" lengthAdjust="spacingAndGlyphs" fill="#333" stroke="#333" stroke-width="0.1" text-anchor="end" font-family="Liberation Sans">0.0%</text><path d="M102 491.6 L102 490.6 L103 487.3 L103.3 485.2 L104 468.2 L105 443.9 L105.8 424.5 L106 426.3 L107 435.2 L107.7 441.4 L108 439.2 L109 431.8 L110 424.5 L110 424.5 L111 424.5 L112 424.5 L113 424.5 L114 424.5 L114 424.5 L115 438 L116 451.5 L117 465 L118 478.7 L118 478.5 L119 481.2 L120 485.4 L121 488.6 L121.7 490 L122 490.5 L123 489.5 L124 490.7 L124 490 L125 479.5 L126 470 L126.5 465 L127 470 L128 479.7 L129 490.7 L129 490 L130 489.9 L131 490.1 L131 490 L132 488.1 L132 487.9 L133 490 L133 489 L134 490.8 L135 490.9 L136 489.1 L137 490.2 L137.5 490 L138 481.8 L139 463.6 L139.5 454.9 L140 458.2 L141 465 L141 465 L142 461 L142.7 458.2 L143 458.1 L144 457.6 L145 457.1 L145.3 456.9 L146 454.6 L147 451.4 L147.8 448.8 L148 451.3 L149 463.7 L150 476.2 L151 489 L151 488.6 L152 486.2 L153 482.3 L153.5 481.9 L154 485.2 L155 490.5 L155 490 L156 489.8 L157 489.9 L158 489.1 L159 489.3 L160 490.3 L161 490.6 L161.5 490 L162 478.3 L163 454.9 L164 431.5 L164.3 424.5 L165 431.1 L166 440.6 L167 450.1 L168 459.6 L169 469 L170 478.5 L170 477.8 L171 480.4 L172 485.2 L173 486.6 L174 490 L174 489.2 L175 489.7 L176 490.5 L177 489.4 L178 489.5 L179 490.6 L180 489.7 L181 490.5 L182 490.9 L182 490 L183 484.5 L183.4 481.9 L184 485.2 L185 490.2 L185 490 L186 489.7 L187 489.3 L188 489 L189 489 L190 489 L191 489.4 L192 490.4 L193 490.6 L194 489.7 L195 489.9 L196 489.6 L197 490.8 L197 490 L198 472.4 L199 454.8 L199.3 449.5 L200 462.4 L201 481.4 L201.5 490 L202 489.1 L203 489.8 L204 489.6 L205 490.8 L206 490.2 L207 490 L207 489.1 L208 476 L209 462.1 L210 448.1 L210 448.1 L211 453.8 L212 459.4 L213 465 L213 465 L214 454.4 L215 443.8 L216 433.2 L216.5 427.9 L217 433.5 L218 444.8 L218 444.8 L219 435.9 L220 427.1 L220.3 424.5 L221 429.9 L222 437.6 L223 445.3 L224 453 L225 460.8 L226 468.5 L227 476.2 L227.3 478.5 L228 480.4 L229 482.8 L230 487.5 L231 490.1 L231 490 L232 489.4 L233 490.1 L234 489.4 L235 490 L235 489.9 L236 477.5 L236.9 466.4 L237 467.5 L238 479.5 L239 490.8 L239 490 L240 489 L241 490.7 L242 490.6 L243 490.3 L244 489.5 L245 489.3 L246 490 L247 490 L248 489.4 L249 490.4 L250 490.2 L250 490 L251 473.4 L252 456.9 L252 456.9 L253 456.3 L254 455.7 L255 455.1 L255.3 454.9 L256 453.6 L257 451.7 L257.8 450.1 L258 452.6 L259 465.1 L260 477.5 L261 490 L261 489.7 L262 489.7 L263 490.9 L264 490.8 L265 490.7 L266 489.5 L267 489.6 L268 489 L269 489.4 L270 490.5 L271 489.4 L272 489 L273 490.3 L273 490 L274 465.5 L275 441 L275.4 431.2 L276 440.3 L277 455.3 L278 470.3 L279 486.2 L279 485.2 L280 486.3 L281 487.3 L282 488.3 L283 489.3 L284 489.9 L285 490 L285 489.2 L286 476.7 L287 463.4 L288 450.1 L288 450.1 L289 455.1 L290 460.1 L291 465 L291 465 L292 462.5 L293 459.9 L294 457.4 L295 454.9 L295 454.9 L296 463.6 L297 472.4 L298 482.1 L299 490 L299 489.7 L300 490.6 L301 490.6 L302 489.3 L303 490.4 L304 490.6 L305 490.1 L306 489.6 L307 489.9 L307.5 490 L308 478.8 L309 458.6 L309.5 448.1 L310 458.6 L311 479.7 L311.5 490 L312 489.9 L313 489.5 L314 490.1 L315 489.5 L316 490 L317 490.7 L318 490.7 L319 489.4 L320 489.5 L321 489.1 L322 489.6 L323 490 L323 489.8 L324 474.1 L325 458.2 L325 458.2 L326 465 L327 471.8 L327 471.8 L328 459.3 L329 446.9 L330 434.4 L330.8 424.5 L331 426.7 L332 437.7 L333 448.8 L334 459.8 L335 470.8 L336 482.6 L336 481.9 L337 483.2 L338 486.7 L339 488.1 L340 490.7 L340 490 L341 490.2 L342 490.4 L343 490.1 L344 489.5 L345 490 L345 489.9 L346 465.1 L346.6 450.1 L347 458.5 L348 480 L348.5 490 L349 489.4 L350 489.5 L351 489.3 L352 490.9 L353 489.7 L354 489.2 L355 490.5 L356 490.6 L357 489.3 L358 490.3 L359 490.2 L360 489.3 L361 490.2 L361 490 L362 457.2 L363 424.5 L363 424.5 L364 439.7 L365 454.9 L365 454.9 L366 451.5 L366 451.5 L367 451.5 L368 451.5 L368 451.5 L369 461.1 L370 470.7 L371 481 L372 490.6 L372 490 L373 490.3 L374 489.6 L375 490.2 L376 489.4 L377 490.9 L378 490.5 L379 489.7 L380 490 L381 490 L382 489.1 L383 490.4 L383 490 L384 465.5 L385 441 L385.4 431.2 L386 438.7 L387 451.2 L388 463.7 L389 476.2 L390 489.3 L390 488.6 L391 489.7 L392 488.8 L393 489.3 L394 489 L395 490.1 L396 490.2 L397 489.5 L398 488.8 L399 489.8 L400 488.7 L401 489.5 L402 489.9 L403 489.2 L404 490.4 L405 490 L405 489.8 L406 474.1 L407 458.2 L407 458.2 L408 462.8 L409 467.2 L410 471.8 L410 471.8 L411 466.1 L412 460.5 L413 454.9 L413 454.9 L414 466.6 L415 478.3 L416 490 L416 489.3 L417 490 L417 489.9 L418 460.8 L418.9 434.6 L419 437.3 L420 463.6 L421 490.3 L421 490 L422 490.8 L423 489.8 L424 490.6 L425 490.2 L426 489.9 L427 489.1 L428 489.6 L429 489.9 L430 489.2 L431 490.4 L432 490.2 L433 490 L433 489.6 L434 474.1 L435 458.2 L435 458.2 L436 468.4 L437 478.5 L437 478.5 L438 465 L439 451.5 L440 438 L441 424.5 L441 424.5 L442 436 L443 447.4 L444 458.9 L445 470.4 L446 481.9 L446 481.8 L447 484.5 L448 486.1 L449 487.3 L450 490.5 L450 490 L451 489.6 L452 490.9 L453 489.1 L454 489.6 L455 490.3 L455 490 L456 470.1 L456.6 458.2 L457 464.9 L458 480.6 L458.5 490 L459 489.4 L460 490.9 L461 490.5 L462 490 L463 489 L464 490.7 L464 490 L465 485.8 L465.6 481.9 L466 484.6 L467 490.9 L467 490 L468 490.2 L469 489.9 L470 490.1 L471 490.7 L472 490.9 L472 490 L473 464.8 L474 439.6 L474.6 424.5 L475 425.9 L476 429.5 L476.5 431.2 L477 429 L478 424.5 L478 424.5 L479 424.5 L480 424.5 L481 424.5 L481.3 424.5 L482 440.2 L483 462.7 L484 485.2 L484 484.6 L485 486.5 L486 487.5 L487 488.7 L487 488.6 L488 471.8 L489 454.9 L489 454.9 L490 471.8 L491 488.6 L491 488.2 L492 471.8 L492 471.8 L493 457.8 L494 443.8 L494.8 432.6 L495 434.8 L496 445.7 L497 456.6 L498 467.6 L499 478.5 L499 478.5 L500 481.5 L501 485.5 L502 490 L502 489.5 L503 490.3 L504 490.6 L505 490.8 L506 489.2 L507 490.9 L508 489.8 L509 489.1 L510 490.3 L511 490.2 L512 490.1 L513 490 L513 489.1 L514 485.6 L515 481.9 L515 481.2 L516 486.9 L517 490 L517 489.5 L518 490.1 L519 490.2 L520 489.3 L521 489.5 L522 489.1 L523 489.5 L524 489.1 L525 490.1 L526 489.9 L527 489.4 L527.5 490 L528 480.6 L529 461.5 L529.6 450.1 L530 458.5 L531 480.2 L531.5 490 L532 489.8 L533 489.2 L534 489.2 L535 490.7 L536 490.2 L537 490.5 L538 490.3 L539 489 L540 490.1 L541 490.4 L542 490.4 L542 490 L543 484 L543 483.9 L544 488.6 L544 488.3 L544.0 492 L102 492 Z" fill="#afd7f4" fill-opacity="0.75" stroke="none"/><path d="M102 491.2 L102 490.6 L103 489.5 L103.3 488.6 L104 481.3 L105 470.3 L105.8 461.6 L106 463.5 L107 473.1 L107.7 479.9 L108 475 L109 458.9 L110 442.8 L110.3 438 L111 442.1 L112 447.8 L113 453.6 L114 459.4 L115 465.2 L116 471 L117 476.8 L117.3 478.5 L118 479.8 L119 482.9 L120 485.2 L121 488.7 L121.7 490 L122 490 L123 489.5 L124 490 L124 489.9 L125 479.4 L126 470 L126.5 465 L127 470 L128 479.5 L129 490.1 L129 490 L130 490.6 L131 489.6 L132 490.5 L133 490.6 L134 489.7 L135 489.5 L136 489.5 L137 489.4 L137.5 490 L138 485.8 L139 476.3 L139.5 471.8 L140 469.6 L141 465.4 L142 461.2 L142.7 458.2 L143 458.2 L144 458.2 L145 458.2 L145.3 458.2 L146 458.2 L147 458.2 L147.8 458.2 L148 460.2 L149 470.1 L150 480.6 L151 490.5 L151 490 L152 489.3 L153 490.5 L154 490.4 L155 490.6 L156 490.6 L157 490.6 L158 490.2 L159 490.4 L160 490.2 L161 489.4 L161.5 490 L162 480.9 L163 461.4 L164 442.4 L164.3 436.6 L165 441.8 L166 449.1 L167 456.5 L168 463.8 L169 471.2 L170 478.5 L170 478.5 L171 480.9 L172 483.9 L173 487 L174 490 L174 489.9 L175 489.6 L176 489.9 L177 490.3 L178 490.2 L179 490.3 L180 490.1 L181 489.3 L182 490.1 L183 490.6 L184 490 L185 489.6 L186 490 L187 489.7 L188 490.5 L189 490.6 L190 489.8 L191 490.6 L192 490.2 L193 490.1 L194 490.4 L195 490.6 L196 490.6 L197 490 L197 489.4 L198 472.4 L199 454.8 L199.3 449.5 L200 462.4 L201 480.5 L201.5 490 L202 489.4 L203 490 L204 489.4 L205 489.5 L206 489.8 L207 489.9 L208 490 L209 490.3 L210 490.1 L211 489.7 L212 490.4 L212 490 L213 477.8 L214 465.6 L214.6 458.2 L215 459.4 L216 462.2 L217 465 L217 465 L218 456.8 L219 448.6 L220 440.5 L220.3 438 L221 442 L222 447.8 L223 453.6 L224 459.4 L225 465.2 L226 471 L227 476.8 L227.3 478.5 L228 480.2 L229 483.8 L230 486.7 L231 490 L231 489.5 L232 489.8 L233 490.5 L234 490.3 L235 490.6 L235 490 L236 477.5 L236.9 466.4 L237 467.5 L238 479.4 L239 490 L239 489.4 L240 489.8 L241 489.3 L242 489.6 L243 490.2 L244 489.3 L245 489.4 L246 490 L247 490.5 L248 490.2 L249 490.4 L250 490.2 L250 490 L251 474.1 L252 458.2 L252 458.2 L253 457.8 L254 457.4 L255 457 L255.3 456.9 L256 457.3 L257 457.8 L257.8 458.2 L258 460.2 L259 470.1 L260 480.6 L261 490 L261 489.7 L262 489.3 L263 490.4 L264 489.6 L265 489.9 L266 490 L267 489.4 L268 490.1 L269 489.5 L270 490.6 L271 489.3 L272 490.4 L273 490.6 L273 490 L274 466.9 L275 443.8 L275.4 434.6 L276 443.1 L277 457.1 L278 471.2 L279 485.2 L279 484.7 L280 485.7 L281 486.6 L282 487.3 L283 488.6 L284 489.7 L285 490.2 L285 490 L286 489.4 L287 489.3 L288 490.3 L288 490 L289 490.1 L290 490.2 L291 489.7 L292 491 L293 490 L294 490.9 L295 490.6 L295 490.6 L296 491.1 L297 491.1 L298 490 L299 490.4 L300 489.7 L301 489.8 L302 489.9 L303 490.8 L304 490 L305 489.4 L306 490.1 L307 490.6 L307.5 490 L308 479.9 L309 458.6 L309.5 448.1 L310 458.6 L311 478.9 L311.5 490 L312 489.3 L313 490.3 L314 490.2 L315 489.7 L316 490 L317 490.4 L318 489.3 L319 489.8 L320 490.2 L321 490.6 L322 490 L323 490 L323 489.6 L324 475.8 L325 461.6 L325 461.6 L326 468.4 L327 475.1 L327 475.1 L328 465.4 L329 455.6 L330 445.8 L330.8 438 L331 439.7 L332 448.1 L333 456.6 L334 465 L335 473.4 L336 482.3 L336 481.9 L337 484.5 L338 485.6 L339 487.4 L340 490.1 L340 490 L341 490 L342 489.8 L343 489.9 L344 490.5 L345 490.3 L345 490 L346 465.1 L346.6 450.1 L347 458.5 L348 479.9 L348.5 490 L349 490.4 L350 490.5 L351 490.1 L352 490.4 L353 489.5 L354 490.2 L355 489.3 L356 489.6 L357 490.3 L358 490.4 L359 489.9 L360 490 L361 490 L361 489.9 L362 474.1 L363 458.2 L363 458.2 L364 457.8 L365 457.4 L366 456.9 L366 456.9 L367 457.6 L368 458.2 L368 458.2 L369 466.2 L370 474.1 L371 482.6 L372 490 L372 489.9 L373 489.6 L374 490 L375 490.3 L376 489.4 L377 490.3 L378 489.3 L379 489.7 L380 490.6 L381 490 L382 490.4 L383 490 L383 489.6 L384 466.1 L385 442.2 L385.4 432.6 L386 439.9 L387 452.1 L388 464.3 L389 476.4 L390 488.7 L390 488.6 L391 489.2 L392 488.1 L393 488.4 L394 488.7 L395 488.8 L396 489.5 L397 488.3 L398 489.3 L399 489 L400 489.1 L401 489.2 L402 489.9 L403 488.7 L404 489.3 L405 489.5 L406 488.9 L407 489 L408 489.2 L409 489 L410 489.8 L411 490.2 L412 489.9 L413 489.6 L414 489.4 L415 489.6 L416 489.7 L417 490 L417 489.8 L418 460.8 L418.9 434.6 L419 437.3 L420 463.6 L421 490 L421 489.8 L422 489.9 L423 490.6 L424 489.9 L425 490.3 L426 490.6 L427 489.8 L428 489.5 L429 490.3 L430 489.7 L431 489.8 L432 489.7 L433 490 L433 489.5 L434 474.8 L435 459.6 L435 459.6 L436 469.1 L437 478.5 L437 478.5 L438 468.4 L439 458.2 L440 448.1 L441 438 L441 438 L442 446.8 L443 455.6 L444 464.3 L445 473.1 L446 481.9 L446 481.6 L447 484.5 L448 485.8 L449 488.2 L450 490.1 L450 490 L451 489.7 L452 490.4 L453 489.8 L454 489.4 L455 490.5 L455 490 L456 470.1 L456.6 458.2 L457 464.9 L458 481.2 L458.5 490 L459 489.7 L460 490.1 L461 489.6 L462 490.5 L463 490.4 L464 489.3 L465 489.8 L466 490.4 L467 490.5 L468 490 L469 489.9 L470 489.3 L471 490.4 L472 490 L472 489.8 L473 479.2 L474 468.2 L474.6 461.6 L475 460.8 L476 458.9 L477 456.9 L477 456.9 L478 457.2 L479 457.5 L480 457.8 L481 458.2 L481.3 458.2 L482 466.1 L483 477.4 L484 488.6 L484 488.5 L485 485.9 L486 484.9 L487 481.8 L488 479.9 L489 478.1 L490 476 L491 473.9 L492 471.8 L492 471.8 L493 457.8 L494 443.8 L494.8 432.6 L495 434.8 L496 445.7 L497 456.6 L498 467.6 L499 478.5 L499 478.5 L500 482.6 L501 486.7 L502 490 L502 489.6 L503 489.5 L504 490.2 L505 490.5 L506 489.9 L507 489.7 L508 490.2 L509 490.1 L510 490.5 L511 490.5 L512 490.3 L513 489.6 L514 490.5 L515 490.4 L516 490 L517 490.4 L518 490.3 L519 489.7 L520 490.3 L521 489.9 L522 490.5 L523 490 L524 489.7 L525 490 L526 490.4 L527 490.6 L527.5 490 L528 481.1 L529 462.5 L529.6 451.5 L530 459.6 L531 480 L531.5 490 L532 490.5 L533 490.1 L534 490 L535 490.6 L536 489.8 L537 489.4 L538 489.7 L539 490 L540 489.5 L541 489.4 L542 489.4 L543 489.4 L544 490 L544 489.6 L544.0 492 L102 492 Z" fill="#73aadc" fill-opacity="0.8" stroke="none"/><line x1="102" y1="424.5" x2="544" y2="424.5" stroke="#000" stroke-opacity="0.10" stroke-width="1"/><line x1="102" y1="441.4" x2="544" y2="441.4" stroke="#000" stroke-opacity="0.10" stroke-width="1"/><line x1="102" y1="458.2" x2="544" y2="458.2" stroke="#000" stroke-opacity="0.10" stroke-width="1"/><line x1="102" y1="475.1" x2="544" y2="475.1" stroke="#000" stroke-opacity="0.10" stroke-width="1"/><path d="M102 491.6 L102 490.6 L103 487.3 L103.3 485.2 L104 468.2 L105 443.9 L105.8 424.5 L106 426.3 L107 435.2 L107.7 441.4 L108 439.2 L109 431.8 L110 424.5 L110 424.5 L111 424.5 L112 424.5 L113 424.5 L114 424.5 L114 424.5 L115 438 L116 451.5 L117 465 L118 478.7 L118 478.5 L119 481.2 L120 485.4 L121 488.6 L121.7 490 L122 490.5 L123 489.5 L124 490.7 L124 490 L125 479.5 L126 470 L126.5 465 L127 470 L128 479.7 L129 490.7 L129 490 L130 489.9 L131 490.1 L131 490 L132 488.1 L132 487.9 L133 490 L133 489 L134 490.8 L135 490.9 L136 489.1 L137 490.2 L137.5 490 L138 481.8 L139 463.6 L139.5 454.9 L140 458.2 L141 465 L141 465 L142 461 L142.7 458.2 L143 458.1 L144 457.6 L145 457.1 L145.3 456.9 L146 454.6 L147 451.4 L147.8 448.8 L148 451.3 L149 463.7 L150 476.2 L151 489 L151 488.6 L152 486.2 L153 482.3 L153.5 481.9 L154 485.2 L155 490.5 L155 490 L156 489.8 L157 489.9 L158 489.1 L159 489.3 L160 490.3 L161 490.6 L161.5 490 L162 478.3 L163 454.9 L164 431.5 L164.3 424.5 L165 431.1 L166 440.6 L167 450.1 L168 459.6 L169 469 L170 478.5 L170 477.8 L171 480.4 L172 485.2 L173 486.6 L174 490 L174 489.2 L175 489.7 L176 490.5 L177 489.4 L178 489.5 L179 490.6 L180 489.7 L181 490.5 L182 490.9 L182 490 L183 484.5 L183.4 481.9 L184 485.2 L185 490.2 L185 490 L186 489.7 L187 489.3 L188 489 L189 489 L190 489 L191 489.4 L192 490.4 L193 490.6 L194 489.7 L195 489.9 L196 489.6 L197 490.8 L197 490 L198 472.4 L199 454.8 L199.3 449.5 L200 462.4 L201 481.4 L201.5 490 L202 489.1 L203 489.8 L204 489.6 L205 490.8 L206 490.2 L207 490 L207 489.1 L208 476 L209 462.1 L210 448.1 L210 448.1 L211 453.8 L212 459.4 L213 465 L213 465 L214 454.4 L215 443.8 L216 433.2 L216.5 427.9 L217 433.5 L218 444.8 L218 444.8 L219 435.9 L220 427.1 L220.3 424.5 L221 429.9 L222 437.6 L223 445.3 L224 453 L225 460.8 L226 468.5 L227 476.2 L227.3 478.5 L228 480.4 L229 482.8 L230 487.5 L231 490.1 L231 490 L232 489.4 L233 490.1 L234 489.4 L235 490 L235 489.9 L236 477.5 L236.9 466.4 L237 467.5 L238 479.5 L239 490.8 L239 490 L240 489 L241 490.7 L242 490.6 L243 490.3 L244 489.5 L245 489.3 L246 490 L247 490 L248 489.4 L249 490.4 L250 490.2 L250 490 L251 473.4 L252 456.9 L252 456.9 L253 456.3 L254 455.7 L255 455.1 L255.3 454.9 L256 453.6 L257 451.7 L257.8 450.1 L258 452.6 L259 465.1 L260 477.5 L261 490 L261 489.7 L262 489.7 L263 490.9 L264 490.8 L265 490.7 L266 489.5 L267 489.6 L268 489 L269 489.4 L270 490.5 L271 489.4 L272 489 L273 490.3 L273 490 L274 465.5 L275 441 L275.4 431.2 L276 440.3 L277 455.3 L278 470.3 L279 486.2 L279 485.2 L280 486.3 L281 487.3 L282 488.3 L283 489.3 L284 489.9 L285 490 L285 489.2 L286 476.7 L287 463.4 L288 450.1 L288 450.1 L289 455.1 L290 460.1 L291 465 L291 465 L292 462.5 L293 459.9 L294 457.4 L295 454.9 L295 454.9 L296 463.6 L297 472.4 L298 482.1 L299 490 L299 489.7 L300 490.6 L301 490.6 L302 489.3 L303 490.4 L304 490.6 L305 490.1 L306 489.6 L307 489.9 L307.5 490 L308 478.8 L309 458.6 L309.5 448.1 L310 458.6 L311 479.7 L311.5 490 L312 489.9 L313 489.5 L314 490.1 L315 489.5 L316 490 L317 490.7 L318 490.7 L319 489.4 L320 489.5 L321 489.1 L322 489.6 L323 490 L323 489.8 L324 474.1 L325 458.2 L325 458.2 L326 465 L327 471.8 L327 471.8 L328 459.3 L329 446.9 L330 434.4 L330.8 424.5 L331 426.7 L332 437.7 L333 448.8 L334 459.8 L335 470.8 L336 482.6 L336 481.9 L337 483.2 L338 486.7 L339 488.1 L340 490.7 L340 490 L341 490.2 L342 490.4 L343 490.1 L344 489.5 L345 490 L345 489.9 L346 465.1 L346.6 450.1 L347 458.5 L348 480 L348.5 490 L349 489.4 L350 489.5 L351 489.3 L352 490.9 L353 489.7 L354 489.2 L355 490.5 L356 490.6 L357 489.3 L358 490.3 L359 490.2 L360 489.3 L361 490.2 L361 490 L362 457.2 L363 424.5 L363 424.5 L364 439.7 L365 454.9 L365 454.9 L366 451.5 L366 451.5 L367 451.5 L368 451.5 L368 451.5 L369 461.1 L370 470.7 L371 481 L372 490.6 L372 490 L373 490.3 L374 489.6 L375 490.2 L376 489.4 L377 490.9 L378 490.5 L379 489.7 L380 490 L381 490 L382 489.1 L383 490.4 L383 490 L384 465.5 L385 441 L385.4 431.2 L386 438.7 L387 451.2 L388 463.7 L389 476.2 L390 489.3 L390 488.6 L391 489.7 L392 488.8 L393 489.3 L394 489 L395 490.1 L396 490.2 L397 489.5 L398 488.8 L399 489.8 L400 488.7 L401 489.5 L402 489.9 L403 489.2 L404 490.4 L405 490 L405 489.8 L406 474.1 L407 458.2 L407 458.2 L408 462.8 L409 467.2 L410 471.8 L410 471.8 L411 466.1 L412 460.5 L413 454.9 L413 454.9 L414 466.6 L415 478.3 L416 490 L416 489.3 L417 490 L417 489.9 L418 460.8 L418.9 434.6 L419 437.3 L420 463.6 L421 490.3 L421 490 L422 490.8 L423 489.8 L424 490.6 L425 490.2 L426 489.9 L427 489.1 L428 489.6 L429 489.9 L430 489.2 L431 490.4 L432 490.2 L433 490 L433 489.6 L434 474.1 L435 458.2 L435 458.2 L436 468.4 L437 478.5 L437 478.5 L438 465 L439 451.5 L440 438 L441 424.5 L441 424.5 L442 436 L443 447.4 L444 458.9 L445 470.4 L446 481.9 L446 481.8 L447 484.5 L448 486.1 L449 487.3 L450 490.5 L450 490 L451 489.6 L452 490.9 L453 489.1 L454 489.6 L455 490.3 L455 490 L456 470.1 L456.6 458.2 L457 464.9 L458 480.6 L458.5 490 L459 489.4 L460 490.9 L461 490.5 L462 490 L463 489 L464 490.7 L464 490 L465 485.8 L465.6 481.9 L466 484.6 L467 490.9 L467 490 L468 490.2 L469 489.9 L470 490.1 L471 490.7 L472 490.9 L472 490 L473 464.8 L474 439.6 L474.6 424.5 L475 425.9 L476 429.5 L476.5 431.2 L477 429 L478 424.5 L478 424.5 L479 424.5 L480 424.5 L481 424.5 L481.3 424.5 L482 440.2 L483 462.7 L484 485.2 L484 484.6 L485 486.5 L486 487.5 L487 488.7 L487 488.6 L488 471.8 L489 454.9 L489 454.9 L490 471.8 L491 488.6 L491 488.2 L492 471.8 L492 471.8 L493 457.8 L494 443.8 L494.8 432.6 L495 434.8 L496 445.7 L497 456.6 L498 467.6 L499 478.5 L499 478.5 L500 481.5 L501 485.5 L502 490 L502 489.5 L503 490.3 L504 490.6 L505 490.8 L506 489.2 L507 490.9 L508 489.8 L509 489.1 L510 490.3 L511 490.2 L512 490.1 L513 490 L513 489.1 L514 485.6 L515 481.9 L515 481.2 L516 486.9 L517 490 L517 489.5 L518 490.1 L519 490.2 L520 489.3 L521 489.5 L522 489.1 L523 489.5 L524 489.1 L525 490.1 L526 489.9 L527 489.4 L527.5 490 L528 480.6 L529 461.5 L529.6 450.1 L530 458.5 L531 480.2 L531.5 490 L532 489.8 L533 489.2 L534 489.2 L535 490.7 L536 490.2 L537 490.5 L538 490.3 L539 489 L540 490.1 L541 490.4 L542 490.4 L542 490 L543 484 L543 483.9 L544 488.6 L544 488.3" fill="none" stroke="#5aaaf0" stroke-width="1.1" stroke-linejoin="round"/><path d="M102 491.2 L102 490.6 L103 489.5 L103.3 488.6 L104 481.3 L105 470.3 L105.8 461.6 L106 463.5 L107 473.1 L107.7 479.9 L108 475 L109 458.9 L110 442.8 L110.3 438 L111 442.1 L112 447.8 L113 453.6 L114 459.4 L115 465.2 L116 471 L117 476.8 L117.3 478.5 L118 479.8 L119 482.9 L120 485.2 L121 488.7 L121.7 490 L122 490 L123 489.5 L124 490 L124 489.9 L125 479.4 L126 470 L126.5 465 L127 470 L128 479.5 L129 490.1 L129 490 L130 490.6 L131 489.6 L132 490.5 L133 490.6 L134 489.7 L135 489.5 L136 489.5 L137 489.4 L137.5 490 L138 485.8 L139 476.3 L139.5 471.8 L140 469.6 L141 465.4 L142 461.2 L142.7 458.2 L143 458.2 L144 458.2 L145 458.2 L145.3 458.2 L146 458.2 L147 458.2 L147.8 458.2 L148 460.2 L149 470.1 L150 480.6 L151 490.5 L151 490 L152 489.3 L153 490.5 L154 490.4 L155 490.6 L156 490.6 L157 490.6 L158 490.2 L159 490.4 L160 490.2 L161 489.4 L161.5 490 L162 480.9 L163 461.4 L164 442.4 L164.3 436.6 L165 441.8 L166 449.1 L167 456.5 L168 463.8 L169 471.2 L170 478.5 L170 478.5 L171 480.9 L172 483.9 L173 487 L174 490 L174 489.9 L175 489.6 L176 489.9 L177 490.3 L178 490.2 L179 490.3 L180 490.1 L181 489.3 L182 490.1 L183 490.6 L184 490 L185 489.6 L186 490 L187 489.7 L188 490.5 L189 490.6 L190 489.8 L191 490.6 L192 490.2 L193 490.1 L194 490.4 L195 490.6 L196 490.6 L197 490 L197 489.4 L198 472.4 L199 454.8 L199.3 449.5 L200 462.4 L201 480.5 L201.5 490 L202 489.4 L203 490 L204 489.4 L205 489.5 L206 489.8 L207 489.9 L208 490 L209 490.3 L210 490.1 L211 489.7 L212 490.4 L212 490 L213 477.8 L214 465.6 L214.6 458.2 L215 459.4 L216 462.2 L217 465 L217 465 L218 456.8 L219 448.6 L220 440.5 L220.3 438 L221 442 L222 447.8 L223 453.6 L224 459.4 L225 465.2 L226 471 L227 476.8 L227.3 478.5 L228 480.2 L229 483.8 L230 486.7 L231 490 L231 489.5 L232 489.8 L233 490.5 L234 490.3 L235 490.6 L235 490 L236 477.5 L236.9 466.4 L237 467.5 L238 479.4 L239 490 L239 489.4 L240 489.8 L241 489.3 L242 489.6 L243 490.2 L244 489.3 L245 489.4 L246 490 L247 490.5 L248 490.2 L249 490.4 L250 490.2 L250 490 L251 474.1 L252 458.2 L252 458.2 L253 457.8 L254 457.4 L255 457 L255.3 456.9 L256 457.3 L257 457.8 L257.8 458.2 L258 460.2 L259 470.1 L260 480.6 L261 490 L261 489.7 L262 489.3 L263 490.4 L264 489.6 L265 489.9 L266 490 L267 489.4 L268 490.1 L269 489.5 L270 490.6 L271 489.3 L272 490.4 L273 490.6 L273 490 L274 466.9 L275 443.8 L275.4 434.6 L276 443.1 L277 457.1 L278 471.2 L279 485.2 L279 484.7 L280 485.7 L281 486.6 L282 487.3 L283 488.6 L284 489.7 L285 490.2 L285 490 L286 489.4 L287 489.3 L288 490.3 L288 490 L289 490.1 L290 490.2 L291 489.7 L292 491 L293 490 L294 490.9 L295 490.6 L295 490.6 L296 491.1 L297 491.1 L298 490 L299 490.4 L300 489.7 L301 489.8 L302 489.9 L303 490.8 L304 490 L305 489.4 L306 490.1 L307 490.6 L307.5 490 L308 479.9 L309 458.6 L309.5 448.1 L310 458.6 L311 478.9 L311.5 490 L312 489.3 L313 490.3 L314 490.2 L315 489.7 L316 490 L317 490.4 L318 489.3 L319 489.8 L320 490.2 L321 490.6 L322 490 L323 490 L323 489.6 L324 475.8 L325 461.6 L325 461.6 L326 468.4 L327 475.1 L327 475.1 L328 465.4 L329 455.6 L330 445.8 L330.8 438 L331 439.7 L332 448.1 L333 456.6 L334 465 L335 473.4 L336 482.3 L336 481.9 L337 484.5 L338 485.6 L339 487.4 L340 490.1 L340 490 L341 490 L342 489.8 L343 489.9 L344 490.5 L345 490.3 L345 490 L346 465.1 L346.6 450.1 L347 458.5 L348 479.9 L348.5 490 L349 490.4 L350 490.5 L351 490.1 L352 490.4 L353 489.5 L354 490.2 L355 489.3 L356 489.6 L357 490.3 L358 490.4 L359 489.9 L360 490 L361 490 L361 489.9 L362 474.1 L363 458.2 L363 458.2 L364 457.8 L365 457.4 L366 456.9 L366 456.9 L367 457.6 L368 458.2 L368 458.2 L369 466.2 L370 474.1 L371 482.6 L372 490 L372 489.9 L373 489.6 L374 490 L375 490.3 L376 489.4 L377 490.3 L378 489.3 L379 489.7 L380 490.6 L381 490 L382 490.4 L383 490 L383 489.6 L384 466.1 L385 442.2 L385.4 432.6 L386 439.9 L387 452.1 L388 464.3 L389 476.4 L390 488.7 L390 488.6 L391 489.2 L392 488.1 L393 488.4 L394 488.7 L395 488.8 L396 489.5 L397 488.3 L398 489.3 L399 489 L400 489.1 L401 489.2 L402 489.9 L403 488.7 L404 489.3 L405 489.5 L406 488.9 L407 489 L408 489.2 L409 489 L410 489.8 L411 490.2 L412 489.9 L413 489.6 L414 489.4 L415 489.6 L416 489.7 L417 490 L417 489.8 L418 460.8 L418.9 434.6 L419 437.3 L420 463.6 L421 490 L421 489.8 L422 489.9 L423 490.6 L424 489.9 L425 490.3 L426 490.6 L427 489.8 L428 489.5 L429 490.3 L430 489.7 L431 489.8 L432 489.7 L433 490 L433 489.5 L434 474.8 L435 459.6 L435 459.6 L436 469.1 L437 478.5 L437 478.5 L438 468.4 L439 458.2 L440 448.1 L441 438 L441 438 L442 446.8 L443 455.6 L444 464.3 L445 473.1 L446 481.9 L446 481.6 L447 484.5 L448 485.8 L449 488.2 L450 490.1 L450 490 L451 489.7 L452 490.4 L453 489.8 L454 489.4 L455 490.5 L455 490 L456 470.1 L456.6 458.2 L457 464.9 L458 481.2 L458.5 490 L459 489.7 L460 490.1 L461 489.6 L462 490.5 L463 490.4 L464 489.3 L465 489.8 L466 490.4 L467 490.5 L468 490 L469 489.9 L470 489.3 L471 490.4 L472 490 L472 489.8 L473 479.2 L474 468.2 L474.6 461.6 L475 460.8 L476 458.9 L477 456.9 L477 456.9 L478 457.2 L479 457.5 L480 457.8 L481 458.2 L481.3 458.2 L482 466.1 L483 477.4 L484 488.6 L484 488.5 L485 485.9 L486 484.9 L487 481.8 L488 479.9 L489 478.1 L490 476 L491 473.9 L492 471.8 L492 471.8 L493 457.8 L494 443.8 L494.8 432.6 L495 434.8 L496 445.7 L497 456.6 L498 467.6 L499 478.5 L499 478.5 L500 482.6 L501 486.7 L502 490 L502 489.6 L503 489.5 L504 490.2 L505 490.5 L506 489.9 L507 489.7 L508 490.2 L509 490.1 L510 490.5 L511 490.5 L512 490.3 L513 489.6 L514 490.5 L515 490.4 L516 490 L517 490.4 L518 490.3 L519 489.7 L520 490.3 L521 489.9 L522 490.5 L523 490 L524 489.7 L525 490 L526 490.4 L527 490.6 L527.5 490 L528 481.1 L529 462.5 L529.6 451.5 L530 459.6 L531 480 L531.5 490 L532 490.5 L533 490.1 L534 490 L535 490.6 L536 489.8 L537 489.4 L538 489.7 L539 490 L540 489.5 L541 489.4 L542 489.4 L543 489.4 L544 490 L544 489.6" fill="none" stroke="#3b7fc4" stroke-width="1.1" stroke-linejoin="round"/><line x1="105.7" y1="492" x2="105.7" y2="495" stroke="#777" stroke-width="1"/><text x="105.7" y="506.62" font-size="9.28" textLength="20.20" lengthAdjust="spacingAndGlyphs" fill="#333" stroke="#333" stroke-width="0.1" text-anchor="middle" font-family="Liberation Sans">16:15</text><line x1="160.8" y1="492" x2="160.8" y2="495" stroke="#777" stroke-width="1"/><text x="160.8" y="506.62" font-size="9.28" textLength="20.20" lengthAdjust="spacingAndGlyphs" fill="#333" stroke="#333" stroke-width="0.1" text-anchor="middle" font-family="Liberation Sans">16:30</text><line x1="215.7" y1="492" x2="215.7" y2="495" stroke="#777" stroke-width="1"/><text x="215.7" y="506.62" font-size="9.28" textLength="20.20" lengthAdjust="spacingAndGlyphs" fill="#333" stroke="#333" stroke-width="0.1" text-anchor="middle" font-family="Liberation Sans">16:45</text><line x1="270.8" y1="492" x2="270.8" y2="495" stroke="#777" stroke-width="1"/><text x="270.8" y="506.62" font-size="9.28" textLength="20.20" lengthAdjust="spacingAndGlyphs" fill="#333" stroke="#333" stroke-width="0.1" text-anchor="middle" font-family="Liberation Sans">17:00</text><line x1="325.8" y1="492" x2="325.8" y2="495" stroke="#777" stroke-width="1"/><text x="325.8" y="506.62" font-size="9.28" textLength="20.20" lengthAdjust="spacingAndGlyphs" fill="#333" stroke="#333" stroke-width="0.1" text-anchor="middle" font-family="Liberation Sans">17:15</text><line x1="380.8" y1="492" x2="380.8" y2="495" stroke="#777" stroke-width="1"/><text x="380.8" y="506.62" font-size="9.28" textLength="20.20" lengthAdjust="spacingAndGlyphs" fill="#333" stroke="#333" stroke-width="0.1" text-anchor="middle" font-family="Liberation Sans">17:30</text><line x1="435.8" y1="492" x2="435.8" y2="495" stroke="#777" stroke-width="1"/><text x="435.8" y="506.62" font-size="9.28" textLength="20.20" lengthAdjust="spacingAndGlyphs" fill="#333" stroke="#333" stroke-width="0.1" text-anchor="middle" font-family="Liberation Sans">17:45</text><line x1="491.3" y1="492" x2="491.3" y2="495" stroke="#777" stroke-width="1"/><text x="491.3" y="506.62" font-size="9.28" textLength="20.20" lengthAdjust="spacingAndGlyphs" fill="#333" stroke="#333" stroke-width="0.1" text-anchor="middle" font-family="Liberation Sans">18:00</text><rect x="419" y="408.5" width="12" height="3.2" fill="#5aaaf0" fill-opacity="0.6"/><text x="435" y="413.38" font-size="9.43" textLength="31.00" lengthAdjust="spacingAndGlyphs" fill="#333" stroke="#333" stroke-width="0.1" text-anchor="start" font-family="Liberation Sans">Machine</text><rect x="482" y="408.5" width="12" height="3.2" fill="#3b7fc4" fill-opacity="0.6"/><text x="498" y="413.25" font-size="9.09" textLength="41.00" lengthAdjust="spacingAndGlyphs" fill="#333" stroke="#333" stroke-width="0.1" text-anchor="start" font-family="Liberation Sans">SQL Server</text><text x="558.6" y="408.09" font-size="13.38" textLength="42.00" lengthAdjust="spacingAndGlyphs" fill="#222" stroke="#222" stroke-width="0.1" text-anchor="start" font-family="Liberation Sans">Memory</text><line x1="599" y1="424.5" x2="1037" y2="424.5" stroke="#c9c9c9" stroke-width="1"/><text x="587.8" y="427.78" font-size="9.15" textLength="29.20" lengthAdjust="spacingAndGlyphs" fill="#333" stroke="#333" stroke-width="0.1" text-anchor="end" font-family="Liberation Sans">4.00 GB</text><line x1="599" y1="441.4" x2="1037" y2="441.4" stroke="#c9c9c9" stroke-width="1"/><text x="587.8" y="444.65" font-size="9.15" textLength="29.20" lengthAdjust="spacingAndGlyphs" fill="#333" stroke="#333" stroke-width="0.1" text-anchor="end" font-family="Liberation Sans">3.00 GB</text><line x1="599" y1="458.2" x2="1037" y2="458.2" stroke="#c9c9c9" stroke-width="1"/><text x="587.8" y="461.53" font-size="9.15" textLength="29.20" lengthAdjust="spacingAndGlyphs" fill="#333" stroke="#333" stroke-width="0.1" text-anchor="end" font-family="Liberation Sans">2.00 GB</text><line x1="599" y1="475.1" x2="1037" y2="475.1" stroke="#c9c9c9" stroke-width="1"/><text x="587.8" y="478.40" font-size="9.15" textLength="29.20" lengthAdjust="spacingAndGlyphs" fill="#333" stroke="#333" stroke-width="0.1" text-anchor="end" font-family="Liberation Sans">1.00 GB</text><line x1="599" y1="492.0" x2="1037" y2="492.0" stroke="#c9c9c9" stroke-width="1"/><text x="587.8" y="495.28" font-size="9.15" textLength="29.20" lengthAdjust="spacingAndGlyphs" fill="#333" stroke="#333" stroke-width="0.1" text-anchor="end" font-family="Liberation Sans">0.00 GB</text><path d="M599 433.3 L599 433.3 L600.9 431.2 L601 431.2 L603 430.9 L605 430.6 L607 430.3 L609 429.9 L609.3 429.9 L611 431.2 L611 431.2 L613 431.4 L615 431.5 L617 431.6 L619 431.7 L621 431.9 L622 431.9 L623 431.8 L625 431.7 L627 431.5 L629 431.4 L631 431.2 L633 431 L635 430.9 L635.4 430.8 L637 430.9 L639 430.9 L641 430.9 L643 431 L645 431 L647 431 L649 431 L651 431.1 L653 431.1 L655 431.1 L657 431.2 L659 431.2 L661 431.2 L662.4 431.2 L663 431.2 L665 431.2 L667 431.2 L669 431.2 L671 431.2 L673 431.1 L675 431.1 L677 431.1 L679 431.1 L681 431.1 L683 431.1 L685 431 L687 431 L689 431 L691 431 L693 431 L695 430.9 L697 430.9 L699 430.9 L701 430.9 L703 430.9 L704.5 430.8 L705 430.7 L707 430.2 L709 429.8 L711 429.3 L711.2 429.2 L712.9 433 L713 433 L715 433 L717 433.1 L719 433.1 L721 433.1 L723 433.2 L725 433.2 L727 433.2 L729 433.3 L729.7 433.3 L731 433.1 L733 432.9 L735 432.6 L737 432.4 L739 432.2 L741 431.9 L743 431.7 L745 431.4 L746.6 431.2 L747 431.2 L749 431.2 L751 431.2 L753 431.2 L755 431.2 L757 431.2 L759 431.2 L761 431.2 L763 431.2 L765 431.2 L767 431.2 L769 431.2 L771 431.2 L773 431.2 L775 431.2 L777 431.2 L779 431.2 L781 431.2 L783 431.2 L785 431.2 L787 431.2 L787 431.2 L789 435.4 L791 439.6 L791.2 440 L793 440 L795 440 L797 440 L799 440 L800.5 440 L801 438.7 L803 433.3 L803 433.3 L805 433.3 L807 433.3 L809 433.3 L811 433.3 L813 433.3 L815 433.3 L815 433.3 L817 433.2 L819 433 L821 432.9 L823 432.8 L825 432.7 L826.8 432.6 L827 432.5 L829 431.4 L831 430.2 L831 430.2 L833 430.2 L835 430.2 L837 430.2 L839 430.1 L841 430.1 L843 430.1 L845 430 L847 430 L849 430 L851 430 L853 429.9 L855 429.9 L855.4 429.9 L857 430.5 L858.8 431.2 L859 431.3 L861 431.3 L863 431.3 L865 431.3 L867 431.3 L869 431.4 L871 431.4 L873 431.4 L875 431.4 L877 431.4 L879 431.5 L881 431.5 L883 431.5 L885 431.5 L887 431.5 L889 431.6 L891 431.6 L893 431.6 L895 431.6 L897 431.6 L899 431.7 L899.2 431.7 L901 430.9 L902.6 430.2 L903 430.3 L905 430.8 L906.8 431.2 L907 431.7 L909 436.6 L910.1 439.4 L911 437 L912.7 432.6 L913 432.6 L915 432.6 L917 432.6 L919 432.6 L921 432.6 L923 432.6 L925 432.6 L927 432.6 L929 432.6 L931 432.6 L933 432.6 L935 432.6 L937 432.6 L938 432.6 L939 431.7 L941 429.9 L941.3 429.6 L943 429.7 L945 429.7 L947 429.7 L949 429.8 L951 429.8 L953 429.8 L955 429.9 L957 429.9 L958.1 429.9 L959 430.5 L961 431.8 L963 433.1 L963.2 433.3 L965 432.6 L967 431.9 L969 431.2 L970 430.8 L971 430.9 L973 431.1 L975 431.2 L977 431.3 L979 431.5 L981 431.6 L981.7 431.7 L983 434.9 L985 439.8 L985.1 440 L987 436.3 L988.5 433.3 L989 433 L991 432.1 L993 431.1 L993.5 430.8 L995 430.7 L997 430.6 L999 430.4 L1001 430.3 L1003 430.2 L1005 430 L1007 429.9 L1009 429.7 L1010.4 429.6 L1011 429.7 L1013 429.9 L1015 430.2 L1017 430.4 L1019 430.7 L1021 430.9 L1023 431.2 L1023.8 431.2 L1025 431.2 L1027 431.2 L1029 431.1 L1031 431 L1033 431 L1035 430.9 L1037 430.8 L1037 430.8 L1037.0 492 L599 492 Z" fill="#e2d7fa" fill-opacity="0.75" stroke="none"/><path d="M599 462.3 L599 462.3 L599.8 458.2 L601 458.4 L603 458.7 L605 459 L607 459.3 L609 459.6 L609.3 459.6 L610.5 461.6 L611 458.6 L611.8 453.7 L613 453.8 L615 453.9 L617 454 L619 454.1 L620.3 454.2 L621 454.6 L622 455.1 L623 455.1 L625 455.1 L627 455.1 L629 455.1 L631 455.2 L633 455.2 L635 455.2 L637 455.2 L639 455.2 L641 455.2 L643 455.2 L645 455.3 L647 455.3 L649 455.3 L651 455.3 L653 455.3 L655 455.3 L657 455.4 L659 455.4 L661 455.4 L663 455.4 L665 455.4 L667 455.4 L669 455.5 L671 455.5 L673 455.5 L675 455.5 L677 455.5 L679 455.5 L681 455.6 L683 455.6 L685 455.6 L687 455.6 L689 455.6 L691 455.6 L693 455.7 L695 455.7 L697 455.7 L699 455.7 L701 455.7 L703 455.7 L704.5 455.8 L705 456.5 L707 459.6 L707 459.6 L709 459.1 L711 458.7 L712.9 458.2 L713 458.2 L715 456.3 L716.3 455.1 L717 455.1 L719 455.1 L721 455.1 L723 455.1 L725 455.2 L727 455.2 L729 455.2 L731 455.2 L733 455.2 L735 455.3 L737 455.3 L739 455.3 L741 455.3 L743 455.4 L745 455.4 L747 455.4 L749 455.4 L751 455.4 L753 455.5 L755 455.5 L757 455.5 L759 455.5 L761 455.5 L763 455.6 L765 455.6 L767 455.6 L769 455.6 L771 455.6 L773 455.7 L775 455.7 L777 455.7 L779 455.7 L781 455.7 L782 455.8 L783 456.2 L785 457.2 L787 458.1 L788.7 458.9 L789 459.6 L791 463.9 L791.2 464.3 L793 464.3 L795 464.3 L797 464.3 L799 464.3 L800.5 464.3 L801 463.2 L803 458.7 L803.8 456.9 L805 456.9 L807 456.9 L809 456.9 L811 456.9 L813 456.9 L815 456.9 L815 456.9 L817 456.4 L819 455.8 L821 455.3 L823 454.8 L825 454.2 L827 453.7 L829 453.2 L830.2 452.9 L831 452.9 L833 452.9 L835 452.9 L837 452.9 L839 452.9 L841 452.9 L843 452.9 L845 452.9 L847 452.9 L849 452.9 L851 452.9 L853 452.9 L855 452.9 L855.4 452.9 L857 453.7 L858.8 454.6 L859 454.6 L861 454.7 L863 454.8 L865 454.9 L867 454.9 L869 455 L871 455.1 L873 455.2 L875 455.3 L877 455.3 L879 455.4 L881 455.5 L883 455.6 L885 455.7 L887 455.7 L889 455.8 L891 455.9 L893 456 L895 456.1 L897 456.1 L899 456.2 L899.2 456.2 L901 456.9 L903 457.7 L904.3 458.2 L905 459 L907 461.2 L907.6 461.9 L909 459.5 L911 456 L911.8 454.6 L913 454.7 L915 454.7 L917 454.8 L919 454.9 L921 455 L923 455.1 L925 455.2 L927 455.3 L929 455.4 L931 455.4 L933 455.5 L935 455.6 L937 455.7 L938 455.8 L939 454.9 L941 453.1 L941.3 452.9 L943 452.9 L945 452.9 L947 452.9 L949 452.9 L951 452.9 L953 452.9 L955 452.9 L957 452.9 L958.1 452.9 L959 453.4 L961 454.7 L961.5 455.1 L963 455.2 L965 455.3 L967 455.4 L969 455.5 L971 455.6 L973 455.7 L975 455.8 L975 455.8 L977 456.9 L979 458.1 L979.2 458.2 L981 460.9 L983 463.7 L983.4 464.3 L985 462 L987 459.1 L989 456.2 L990.1 454.6 L991 454.3 L993 453.7 L993.5 453.5 L995 453.6 L997 453.6 L999 453.7 L1001 453.8 L1003 453.9 L1005 453.9 L1007 454 L1009 454.1 L1011 454.1 L1013 454.2 L1015 454.3 L1017 454.4 L1019 454.4 L1021 454.5 L1023 454.6 L1023.8 454.6 L1025 454.6 L1027 454.6 L1029 454.6 L1031 454.6 L1033 454.6 L1035 454.6 L1037 454.6 L1037 454.6 L1037.0 492 L599 492 Z" fill="#c0afea" fill-opacity="0.8" stroke="none"/><line x1="599" y1="424.5" x2="1037" y2="424.5" stroke="#000" stroke-opacity="0.10" stroke-width="1"/><line x1="599" y1="441.4" x2="1037" y2="441.4" stroke="#000" stroke-opacity="0.10" stroke-width="1"/><line x1="599" y1="458.2" x2="1037" y2="458.2" stroke="#000" stroke-opacity="0.10" stroke-width="1"/><line x1="599" y1="475.1" x2="1037" y2="475.1" stroke="#000" stroke-opacity="0.10" stroke-width="1"/><path d="M599 433.3 L599 433.3 L600.9 431.2 L601 431.2 L603 430.9 L605 430.6 L607 430.3 L609 429.9 L609.3 429.9 L611 431.2 L611 431.2 L613 431.4 L615 431.5 L617 431.6 L619 431.7 L621 431.9 L622 431.9 L623 431.8 L625 431.7 L627 431.5 L629 431.4 L631 431.2 L633 431 L635 430.9 L635.4 430.8 L637 430.9 L639 430.9 L641 430.9 L643 431 L645 431 L647 431 L649 431 L651 431.1 L653 431.1 L655 431.1 L657 431.2 L659 431.2 L661 431.2 L662.4 431.2 L663 431.2 L665 431.2 L667 431.2 L669 431.2 L671 431.2 L673 431.1 L675 431.1 L677 431.1 L679 431.1 L681 431.1 L683 431.1 L685 431 L687 431 L689 431 L691 431 L693 431 L695 430.9 L697 430.9 L699 430.9 L701 430.9 L703 430.9 L704.5 430.8 L705 430.7 L707 430.2 L709 429.8 L711 429.3 L711.2 429.2 L712.9 433 L713 433 L715 433 L717 433.1 L719 433.1 L721 433.1 L723 433.2 L725 433.2 L727 433.2 L729 433.3 L729.7 433.3 L731 433.1 L733 432.9 L735 432.6 L737 432.4 L739 432.2 L741 431.9 L743 431.7 L745 431.4 L746.6 431.2 L747 431.2 L749 431.2 L751 431.2 L753 431.2 L755 431.2 L757 431.2 L759 431.2 L761 431.2 L763 431.2 L765 431.2 L767 431.2 L769 431.2 L771 431.2 L773 431.2 L775 431.2 L777 431.2 L779 431.2 L781 431.2 L783 431.2 L785 431.2 L787 431.2 L787 431.2 L789 435.4 L791 439.6 L791.2 440 L793 440 L795 440 L797 440 L799 440 L800.5 440 L801 438.7 L803 433.3 L803 433.3 L805 433.3 L807 433.3 L809 433.3 L811 433.3 L813 433.3 L815 433.3 L815 433.3 L817 433.2 L819 433 L821 432.9 L823 432.8 L825 432.7 L826.8 432.6 L827 432.5 L829 431.4 L831 430.2 L831 430.2 L833 430.2 L835 430.2 L837 430.2 L839 430.1 L841 430.1 L843 430.1 L845 430 L847 430 L849 430 L851 430 L853 429.9 L855 429.9 L855.4 429.9 L857 430.5 L858.8 431.2 L859 431.3 L861 431.3 L863 431.3 L865 431.3 L867 431.3 L869 431.4 L871 431.4 L873 431.4 L875 431.4 L877 431.4 L879 431.5 L881 431.5 L883 431.5 L885 431.5 L887 431.5 L889 431.6 L891 431.6 L893 431.6 L895 431.6 L897 431.6 L899 431.7 L899.2 431.7 L901 430.9 L902.6 430.2 L903 430.3 L905 430.8 L906.8 431.2 L907 431.7 L909 436.6 L910.1 439.4 L911 437 L912.7 432.6 L913 432.6 L915 432.6 L917 432.6 L919 432.6 L921 432.6 L923 432.6 L925 432.6 L927 432.6 L929 432.6 L931 432.6 L933 432.6 L935 432.6 L937 432.6 L938 432.6 L939 431.7 L941 429.9 L941.3 429.6 L943 429.7 L945 429.7 L947 429.7 L949 429.8 L951 429.8 L953 429.8 L955 429.9 L957 429.9 L958.1 429.9 L959 430.5 L961 431.8 L963 433.1 L963.2 433.3 L965 432.6 L967 431.9 L969 431.2 L970 430.8 L971 430.9 L973 431.1 L975 431.2 L977 431.3 L979 431.5 L981 431.6 L981.7 431.7 L983 434.9 L985 439.8 L985.1 440 L987 436.3 L988.5 433.3 L989 433 L991 432.1 L993 431.1 L993.5 430.8 L995 430.7 L997 430.6 L999 430.4 L1001 430.3 L1003 430.2 L1005 430 L1007 429.9 L1009 429.7 L1010.4 429.6 L1011 429.7 L1013 429.9 L1015 430.2 L1017 430.4 L1019 430.7 L1021 430.9 L1023 431.2 L1023.8 431.2 L1025 431.2 L1027 431.2 L1029 431.1 L1031 431 L1033 431 L1035 430.9 L1037 430.8 L1037 430.8" fill="none" stroke="#c6b6ee" stroke-width="1.1" stroke-linejoin="round"/><path d="M599 462.3 L599 462.3 L599.8 458.2 L601 458.4 L603 458.7 L605 459 L607 459.3 L609 459.6 L609.3 459.6 L610.5 461.6 L611 458.6 L611.8 453.7 L613 453.8 L615 453.9 L617 454 L619 454.1 L620.3 454.2 L621 454.6 L622 455.1 L623 455.1 L625 455.1 L627 455.1 L629 455.1 L631 455.2 L633 455.2 L635 455.2 L637 455.2 L639 455.2 L641 455.2 L643 455.2 L645 455.3 L647 455.3 L649 455.3 L651 455.3 L653 455.3 L655 455.3 L657 455.4 L659 455.4 L661 455.4 L663 455.4 L665 455.4 L667 455.4 L669 455.5 L671 455.5 L673 455.5 L675 455.5 L677 455.5 L679 455.5 L681 455.6 L683 455.6 L685 455.6 L687 455.6 L689 455.6 L691 455.6 L693 455.7 L695 455.7 L697 455.7 L699 455.7 L701 455.7 L703 455.7 L704.5 455.8 L705 456.5 L707 459.6 L707 459.6 L709 459.1 L711 458.7 L712.9 458.2 L713 458.2 L715 456.3 L716.3 455.1 L717 455.1 L719 455.1 L721 455.1 L723 455.1 L725 455.2 L727 455.2 L729 455.2 L731 455.2 L733 455.2 L735 455.3 L737 455.3 L739 455.3 L741 455.3 L743 455.4 L745 455.4 L747 455.4 L749 455.4 L751 455.4 L753 455.5 L755 455.5 L757 455.5 L759 455.5 L761 455.5 L763 455.6 L765 455.6 L767 455.6 L769 455.6 L771 455.6 L773 455.7 L775 455.7 L777 455.7 L779 455.7 L781 455.7 L782 455.8 L783 456.2 L785 457.2 L787 458.1 L788.7 458.9 L789 459.6 L791 463.9 L791.2 464.3 L793 464.3 L795 464.3 L797 464.3 L799 464.3 L800.5 464.3 L801 463.2 L803 458.7 L803.8 456.9 L805 456.9 L807 456.9 L809 456.9 L811 456.9 L813 456.9 L815 456.9 L815 456.9 L817 456.4 L819 455.8 L821 455.3 L823 454.8 L825 454.2 L827 453.7 L829 453.2 L830.2 452.9 L831 452.9 L833 452.9 L835 452.9 L837 452.9 L839 452.9 L841 452.9 L843 452.9 L845 452.9 L847 452.9 L849 452.9 L851 452.9 L853 452.9 L855 452.9 L855.4 452.9 L857 453.7 L858.8 454.6 L859 454.6 L861 454.7 L863 454.8 L865 454.9 L867 454.9 L869 455 L871 455.1 L873 455.2 L875 455.3 L877 455.3 L879 455.4 L881 455.5 L883 455.6 L885 455.7 L887 455.7 L889 455.8 L891 455.9 L893 456 L895 456.1 L897 456.1 L899 456.2 L899.2 456.2 L901 456.9 L903 457.7 L904.3 458.2 L905 459 L907 461.2 L907.6 461.9 L909 459.5 L911 456 L911.8 454.6 L913 454.7 L915 454.7 L917 454.8 L919 454.9 L921 455 L923 455.1 L925 455.2 L927 455.3 L929 455.4 L931 455.4 L933 455.5 L935 455.6 L937 455.7 L938 455.8 L939 454.9 L941 453.1 L941.3 452.9 L943 452.9 L945 452.9 L947 452.9 L949 452.9 L951 452.9 L953 452.9 L955 452.9 L957 452.9 L958.1 452.9 L959 453.4 L961 454.7 L961.5 455.1 L963 455.2 L965 455.3 L967 455.4 L969 455.5 L971 455.6 L973 455.7 L975 455.8 L975 455.8 L977 456.9 L979 458.1 L979.2 458.2 L981 460.9 L983 463.7 L983.4 464.3 L985 462 L987 459.1 L989 456.2 L990.1 454.6 L991 454.3 L993 453.7 L993.5 453.5 L995 453.6 L997 453.6 L999 453.7 L1001 453.8 L1003 453.9 L1005 453.9 L1007 454 L1009 454.1 L1011 454.1 L1013 454.2 L1015 454.3 L1017 454.4 L1019 454.4 L1021 454.5 L1023 454.6 L1023.8 454.6 L1025 454.6 L1027 454.6 L1029 454.6 L1031 454.6 L1033 454.6 L1035 454.6 L1037 454.6 L1037 454.6" fill="none" stroke="#a48fd6" stroke-width="1.1" stroke-linejoin="round"/><line x1="601.8" y1="492" x2="601.8" y2="495" stroke="#777" stroke-width="1"/><text x="601.8" y="506.62" font-size="9.28" textLength="20.20" lengthAdjust="spacingAndGlyphs" fill="#333" stroke="#333" stroke-width="0.1" text-anchor="middle" font-family="Liberation Sans">16:15</text><line x1="656.8" y1="492" x2="656.8" y2="495" stroke="#777" stroke-width="1"/><text x="656.8" y="506.62" font-size="9.28" textLength="20.20" lengthAdjust="spacingAndGlyphs" fill="#333" stroke="#333" stroke-width="0.1" text-anchor="middle" font-family="Liberation Sans">16:30</text><line x1="711.5" y1="492" x2="711.5" y2="495" stroke="#777" stroke-width="1"/><text x="711.5" y="506.62" font-size="9.28" textLength="20.20" lengthAdjust="spacingAndGlyphs" fill="#333" stroke="#333" stroke-width="0.1" text-anchor="middle" font-family="Liberation Sans">16:45</text><line x1="766.5" y1="492" x2="766.5" y2="495" stroke="#777" stroke-width="1"/><text x="766.5" y="506.62" font-size="9.28" textLength="20.20" lengthAdjust="spacingAndGlyphs" fill="#333" stroke="#333" stroke-width="0.1" text-anchor="middle" font-family="Liberation Sans">17:00</text><line x1="821.3" y1="492" x2="821.3" y2="495" stroke="#777" stroke-width="1"/><text x="821.3" y="506.62" font-size="9.28" textLength="20.20" lengthAdjust="spacingAndGlyphs" fill="#333" stroke="#333" stroke-width="0.1" text-anchor="middle" font-family="Liberation Sans">17:15</text><line x1="876.2" y1="492" x2="876.2" y2="495" stroke="#777" stroke-width="1"/><text x="876.2" y="506.62" font-size="9.28" textLength="20.20" lengthAdjust="spacingAndGlyphs" fill="#333" stroke="#333" stroke-width="0.1" text-anchor="middle" font-family="Liberation Sans">17:30</text><line x1="931" y1="492" x2="931" y2="495" stroke="#777" stroke-width="1"/><text x="931" y="506.62" font-size="9.28" textLength="20.20" lengthAdjust="spacingAndGlyphs" fill="#333" stroke="#333" stroke-width="0.1" text-anchor="middle" font-family="Liberation Sans">17:45</text><line x1="985" y1="492" x2="985" y2="495" stroke="#777" stroke-width="1"/><text x="985" y="506.62" font-size="9.28" textLength="20.20" lengthAdjust="spacingAndGlyphs" fill="#333" stroke="#333" stroke-width="0.1" text-anchor="middle" font-family="Liberation Sans">18:00</text><rect x="914" y="408.5" width="12" height="3.2" fill="#c6b6ee" fill-opacity="0.6"/><text x="930" y="413.38" font-size="9.43" textLength="31.00" lengthAdjust="spacingAndGlyphs" fill="#333" stroke="#333" stroke-width="0.1" text-anchor="start" font-family="Liberation Sans">Machine</text><rect x="976" y="408.5" width="12" height="3.2" fill="#a48fd6" fill-opacity="0.6"/><text x="992" y="413.25" font-size="9.09" textLength="41.00" lengthAdjust="spacingAndGlyphs" fill="#333" stroke="#333" stroke-width="0.1" text-anchor="start" font-family="Liberation Sans">SQL Server</text><text x="64.5" y="535.37" font-size="13.31" textLength="59.20" lengthAdjust="spacingAndGlyphs" fill="#222" stroke="#222" stroke-width="0.1" text-anchor="start" font-family="Liberation Sans">Throughput</text><line x1="114" y1="551.2" x2="544" y2="551.2" stroke="#c9c9c9" stroke-width="1"/><text x="103.4" y="554.71" font-size="9.81" textLength="38.40" lengthAdjust="spacingAndGlyphs" fill="#333" stroke="#333" stroke-width="0.1" text-anchor="end" font-family="Liberation Sans">99.8 MB/s</text><line x1="114" y1="568.2" x2="544" y2="568.2" stroke="#c9c9c9" stroke-width="1"/><text x="103.4" y="571.66" font-size="9.81" textLength="38.40" lengthAdjust="spacingAndGlyphs" fill="#333" stroke="#333" stroke-width="0.1" text-anchor="end" font-family="Liberation Sans">74.9 MB/s</text><line x1="114" y1="585.1" x2="544" y2="585.1" stroke="#c9c9c9" stroke-width="1"/><text x="103.4" y="588.61" font-size="9.81" textLength="38.40" lengthAdjust="spacingAndGlyphs" fill="#333" stroke="#333" stroke-width="0.1" text-anchor="end" font-family="Liberation Sans">49.9 MB/s</text><line x1="114" y1="602.0" x2="544" y2="602.0" stroke="#c9c9c9" stroke-width="1"/><text x="103.4" y="605.56" font-size="9.81" textLength="38.40" lengthAdjust="spacingAndGlyphs" fill="#333" stroke="#333" stroke-width="0.1" text-anchor="end" font-family="Liberation Sans">25.0 MB/s</text><line x1="114" y1="619.0" x2="544" y2="619.0" stroke="#c9c9c9" stroke-width="1"/><text x="103.4" y="622.51" font-size="9.81" textLength="33.66" lengthAdjust="spacingAndGlyphs" fill="#333" stroke="#333" stroke-width="0.1" text-anchor="end" font-family="Liberation Sans">0.0 MB/s</text><path d="M114 617.8 L114 617.6 L114.6 617.6 L115 615.4 L116 609.1 L116.3 606.8 L117 609.3 L117.9 613.6 L118 612.2 L119 599.8 L120 587.2 L121 574.7 L121.9 563.4 L122 563.9 L123 569.1 L123.2 570.2 L124 580.2 L125 592.8 L125.2 595.3 L126 583.6 L127 569.1 L127.3 564.8 L128 579.6 L128.1 581.7 L129 589.6 L130 598.4 L131 606.9 L132 615.8 L132.2 617.6 L133 617.8 L134 617.4 L134.7 617.6 L135 613.3 L136 599.1 L137 584.9 L137.7 574.9 L138 581.3 L139 602.7 L139.7 617.6 L140 617.3 L141 617.5 L142 617.3 L143 617.7 L144 618 L145 618 L146 617.4 L147 618 L148 617.5 L149 617.5 L150 618.1 L151 617.3 L152 618.2 L152 617.6 L153 613.4 L154 609.7 L154.5 608.2 L155 608.3 L156 607.5 L157 607.5 L157 607.2 L158 608.2 L159 607.9 L159.4 608.2 L160 610.8 L161 613.8 L161.9 617.6 L162 617.4 L163 617.1 L164 618.1 L165 617.8 L166 617.5 L167 617.5 L168 618 L169 617.2 L170 617.6 L170 617.3 L171 604.4 L172 591.1 L173 577.8 L174 564.5 L175 551.2 L175 551.2 L176 571.1 L176.7 585.1 L177 582.8 L178 575.1 L178.9 568.2 L179 569.1 L180 578.6 L181 588.1 L182 597.7 L183 607.4 L184 617.1 L184.1 617.6 L185 617.5 L186 617.7 L187 617.5 L187.4 617.6 L188 613.4 L189 606.4 L189.6 602 L190 605.3 L191 614.1 L191.5 617.6 L192 618 L193 617.7 L194 617.4 L195 617.7 L196 617.4 L197 617.6 L198 617.2 L199 617.5 L200 617.8 L201 618 L202 618.1 L203 618.1 L204 617.3 L205 617.2 L205.6 617.6 L206 615.6 L207 611.7 L207.7 608.2 L208 609.4 L209 614.7 L209.7 617.6 L210 617.2 L211 617.5 L212 617.4 L213 617.5 L214 617.7 L215 617.3 L216 617.1 L217 617.9 L218 617.7 L219 617.4 L220 617.4 L221 617.7 L221.2 617.6 L222 614.9 L223 610.8 L223.7 608.8 L224 610.3 L225 614.7 L225.3 615.6 L226 605.1 L227 590 L228 574.9 L228.9 561.4 L229 561.7 L230 564.6 L231 567.5 L231.9 570.2 L232 571 L233 579.7 L234 588.3 L235 596.9 L235.2 598.7 L236 602.4 L237 606.8 L238 611.9 L239 615.8 L239.3 617.6 L240 617.8 L241 617.2 L242 617.8 L242.6 617.6 L243 611.1 L244 596.1 L244.8 583.7 L245 587.3 L246 605.2 L246.7 617.6 L247 617.4 L248 617.4 L249 618 L250 618 L251 618.2 L252 618 L253 617.5 L254 618.1 L255 617.9 L256 617.6 L257 618 L258 617.8 L259 617.9 L259.1 617.6 L260 614 L261 610.8 L261.6 608.2 L262 607.5 L263 607.6 L264 607.5 L264 607.2 L265 607.7 L266 608 L266.5 608.2 L267 609.5 L268 613.4 L269 617.6 L269 617.3 L270 618.2 L271 617.5 L272 617.2 L273 617.5 L274 617.6 L275 617.5 L276 618 L277 617.4 L278 617.3 L278.9 617.6 L279 616.4 L280 598.4 L281 580.9 L282 563.4 L282.7 551.2 L283 556.6 L284 574.4 L284.6 585.1 L285 581.1 L286 571.1 L286.3 568.2 L287 575.2 L288 585.3 L289 595.4 L290 605.5 L291 615.5 L291.2 617.6 L292 617.8 L293 617.4 L294 617.2 L294.5 617.6 L295 612.9 L296 604.7 L296.7 598.7 L297 601 L298 609.2 L299 617.2 L299.1 617.6 L300 617.3 L301 617.5 L302 617.3 L303 617.2 L304 617.9 L305 617.5 L306 617.9 L307 617.3 L308 617.4 L309 617.9 L310 617.6 L311 617.5 L312 617.9 L312.6 617.6 L313 616.3 L314 611.6 L314.8 608.2 L315 609.4 L316 612.9 L317 616.4 L317.2 617.6 L318 617.3 L319 618.1 L320 617.3 L321 617.4 L322 617.4 L323 618.2 L324 617.4 L325 618 L326 617.3 L327 617.8 L328 617.8 L329 618 L330 617.2 L330.8 617.6 L331 615.6 L332 603.8 L333 592.2 L334 580.7 L335 569.1 L336 557.6 L336.2 555.3 L337 563.1 L338 573 L338.2 574.9 L339 571.4 L340 567 L340.2 566.1 L341 574.5 L342 585 L343 595.6 L344 605.7 L345 616.6 L345.1 617.6 L346 618 L347 617.5 L348 617.6 L348 617.6 L349 609.3 L350 599.9 L350.9 591.9 L351 592.8 L352 601.7 L353 610.2 L353.8 617.6 L354 617.9 L355 618.2 L356 617.4 L357 617.4 L358 617.8 L359 618 L360 617.6 L361 617.6 L362 617.4 L363 617.7 L364 617.6 L365 617.4 L366 618 L367 618 L367 617.6 L368 613.9 L369 609.8 L369.5 608.2 L370 607.8 L371 607.8 L372 608.2 L372.8 608.2 L373 609.3 L373.6 613.6 L374 613 L375 610.1 L375.2 609.5 L376 612.9 L377 615.8 L377.4 617.6 L378 617.1 L379 617.5 L380 617.4 L381 617.8 L382 617.3 L383 618.1 L384 617.8 L385 617.8 L386 617.6 L386 617.2 L387 599.7 L388 581.7 L389 563.8 L389.7 551.2 L390 557.8 L391 579.7 L391.4 588.5 L392 582.4 L393 572.2 L393.4 568.2 L394 574.2 L395 584.3 L396 594.4 L397 604.5 L398 615 L398.3 617.6 L399 618 L400 618.1 L401 617.3 L402 617.8 L402.1 617.6 L403 609.3 L404 600.9 L404.1 600 L405 608.2 L406 616.4 L406.1 617.6 L407 618 L408 617.2 L409 617.1 L410 617.2 L411 617.4 L412 617.2 L413 617.2 L414 617.1 L415 617.9 L416 617.3 L417 617.3 L418 617.8 L419 618 L420 617.2 L420.2 617.6 L421 613.9 L422 609.1 L422.2 608.2 L423 611.5 L424 616.7 L424.2 617.6 L425 617.9 L426 617.3 L427 617.5 L428 617.7 L429 617.2 L430 616.9 L431 617.6 L432 616.9 L433 616.9 L434 617.1 L435 617.4 L436 616.8 L437 617.2 L437 617 L438 616.7 L439 615.5 L439.5 615.6 L440 608.6 L441 593.8 L442 579.2 L443 564.7 L443.6 555.9 L444 558.2 L445 564 L446 569.8 L446.9 574.9 L447 575.7 L448 583 L449 590.4 L450 597.8 L451 605.1 L452 612.9 L452.7 617.6 L453 617.3 L454 617.1 L455 617.9 L456 617.7 L456 617.6 L457 604.7 L458 591.8 L458.1 590.5 L459 599.2 L460 608.9 L460.9 617.6 L461 617.4 L462 618.2 L463 617.5 L464 617.9 L465 617.2 L466 617.7 L467 617.2 L468 617.7 L469 617.5 L470 618.1 L471 618 L472 617.9 L473 617.8 L473.3 617.6 L474 615.4 L475 611.5 L475.7 608.8 L476 610.1 L477 612.4 L477.4 613.6 L478 612.3 L479 611.2 L480 610.2 L480.7 609.5 L481 609.9 L482 613 L482.8 615.6 L483 614.9 L484 612 L484.8 609.5 L485 610.9 L486 614.8 L486.5 617.6 L487 617.2 L488 617.3 L489 617.4 L490 617.3 L491 617.1 L492 617.1 L492.7 617.6 L493 612.9 L494 598.4 L495 583.7 L496 568.9 L497 554.2 L497.2 551.2 L498 569.8 L498.8 588.5 L499 586.3 L500 575.5 L501 564.8 L501 564.8 L502 579.4 L503 594.1 L504 609.4 L504.6 617.6 L505 617.2 L506 617.6 L507 617.7 L508 617.7 L508.2 617.6 L509 612.5 L510 605.4 L511 598.7 L511.2 597.3 L512 604.1 L513 613.1 L513.6 617.6 L514 617.5 L515 617.5 L516 618.1 L517 617.2 L518 617.2 L519 617.2 L520 617.6 L521 617.8 L522 617.7 L523 617.8 L524 617.1 L525 617.2 L526 617.2 L527 617.6 L527.3 617.6 L528 608.1 L529 594.6 L529.6 586.5 L530 591.3 L531 603.2 L532 615 L532.2 617.6 L533 617.9 L534 618 L535 617.1 L536 617.9 L537 617.9 L538 617.7 L539 618.1 L540 617.6 L541 618 L542 617.3 L543 618.1 L544 617.6 L544 617.3 L544.0 619 L114 619 Z" fill="#b6eec7" fill-opacity="0.75" stroke="none"/><path d="M114 617.7 L114 617.6 L114.6 617.7 L115 615.6 L116 609.4 L116.3 607.4 L117 610.4 L117.9 613.8 L118 612.5 L119 600.7 L120 588.8 L121 576.9 L121.9 566.2 L122 566.7 L123 571.6 L123.2 572.6 L124 582.2 L125 594.1 L125.2 596.5 L126 585.4 L127 571.6 L127.3 567.5 L128 581.6 L128.1 583.6 L129 591.1 L130 599.4 L131 607.6 L132 615.8 L132.2 617.7 L133 618 L134 617.8 L134.7 617.7 L135 614 L136 600.1 L137 586.6 L137.7 577.1 L138 583.2 L139 603.5 L139.7 617.7 L140 617.9 L141 617.7 L142 618 L143 617.9 L144 617.6 L145 617.7 L146 617.9 L147 617.7 L148 617.5 L149 618 L150 617.5 L151 617.6 L152 617.8 L152 617.7 L153 614.3 L154 610.2 L154.5 608.7 L155 608.7 L156 608.6 L157 608.3 L157 608.1 L158 608.1 L159 608.5 L159.4 608.7 L160 610.7 L161 614.3 L161.9 617.7 L162 617.7 L163 617.4 L164 617.8 L165 617.7 L166 617.5 L167 617.6 L168 617.5 L169 617.7 L170 617.7 L170 617.6 L171 605.1 L172 592.5 L173 579.8 L174 567.2 L175 554.6 L175 554.6 L176 573.5 L176.7 586.8 L177 584.6 L178 577.3 L178.9 570.7 L179 571.6 L180 580.6 L181 589.7 L182 598.7 L183 608.1 L184 617 L184.1 617.7 L185 617.9 L186 618 L187 617.9 L187.4 617.7 L188 613.9 L189 607.1 L189.6 602.9 L190 605.9 L191 613.9 L191.5 617.7 L192 617.8 L193 617.9 L194 617.9 L195 617.4 L196 617.6 L197 617.6 L198 617.9 L199 617.6 L200 617.9 L201 617.8 L202 617.4 L203 617.6 L204 617.7 L205 617.6 L205.6 617.7 L206 615.8 L207 611.5 L207.7 608.7 L208 610.2 L209 614.9 L209.7 617.7 L210 617.8 L211 617.9 L212 617.9 L213 617.4 L214 617.5 L215 617.8 L216 617.6 L217 617.8 L218 617.4 L219 617.7 L220 617.9 L221 617.9 L221.2 617.7 L222 615 L223 611.8 L223.7 609.3 L224 610.5 L225 614.3 L225.3 615.8 L226 605.8 L227 591.4 L228 577.1 L228.9 564.3 L229 564.5 L230 567.3 L231 570.1 L231.9 572.6 L232 573.4 L233 581.6 L234 589.8 L235 598 L235.2 599.7 L236 603.2 L237 607.8 L238 611.7 L239 616.4 L239.3 617.7 L240 618 L241 618 L242 618 L242.6 617.7 L243 611.8 L244 597.2 L244.8 585.5 L245 588.9 L246 605.6 L246.7 617.7 L247 617.8 L248 618 L249 617.8 L250 617.4 L251 617.7 L252 617.4 L253 617.5 L254 618 L255 617.6 L256 617.6 L257 617.7 L258 617.9 L259 617.6 L259.1 617.7 L260 614.7 L261 610.9 L261.6 608.7 L262 608.6 L263 608 L264 608.1 L264 607.8 L265 608.5 L266 608.6 L266.5 608.7 L267 610.7 L268 613.8 L269 617.7 L269 617.5 L270 617.8 L271 617.6 L272 617.6 L273 617.9 L274 617.5 L275 617.7 L276 617.5 L277 617.7 L278 618.1 L278.9 617.7 L279 616.2 L280 599.4 L281 582.8 L282 566.2 L282.7 554.6 L283 559.7 L284 576.6 L284.6 586.8 L285 583 L286 573.5 L286.3 570.7 L287 577.4 L288 587 L289 596.6 L290 606.5 L291 615.5 L291.2 617.7 L292 617.5 L293 617.5 L294 617.8 L294.5 617.7 L295 613.9 L296 605.4 L296.7 599.7 L297 601.9 L298 609.2 L299 616.7 L299.1 617.7 L300 618 L301 617.7 L302 618 L303 617.5 L304 617.5 L305 618 L306 617.7 L307 617.7 L308 617.9 L309 617.5 L310 617.8 L311 617.9 L312 617.7 L312.6 617.7 L313 615.9 L314 612.2 L314.8 608.7 L315 609.6 L316 612.9 L317 616.9 L317.2 617.7 L318 617.8 L319 617.7 L320 618 L321 617.9 L322 617.8 L323 617.7 L324 617.9 L325 617.9 L326 618 L327 617.6 L328 617.9 L329 617.4 L330 617.5 L330.8 617.7 L331 615.8 L332 604.5 L333 593.6 L334 582.6 L335 571.6 L336 560.6 L336.2 558.5 L337 565.9 L338 575.3 L338.2 577.1 L339 573.8 L340 569.6 L340.2 568.8 L341 576.8 L342 586.7 L343 596.7 L344 606.9 L345 616.6 L345.1 617.7 L346 617.9 L347 618 L348 617.7 L348 617.4 L349 609.2 L350 600.8 L350.9 593.2 L351 594.1 L352 602.5 L353 611 L353.8 617.7 L354 617.5 L355 617.5 L356 617.9 L357 618 L358 617.8 L359 617.8 L360 617.7 L361 617.6 L362 617.6 L363 617.4 L364 618 L365 617.8 L366 617.8 L367 617.7 L367 617.5 L368 614.3 L369 610.7 L369.5 608.7 L370 608.7 L371 608.7 L372 608.8 L372.8 608.7 L373 610.2 L373.6 613.8 L374 612.6 L375 610.5 L375.2 610 L376 612.5 L377 616.3 L377.4 617.7 L378 618 L379 617.4 L380 617.5 L381 617.4 L382 617.4 L383 617.5 L384 617.9 L385 617.7 L386 617.9 L386 617.7 L387 600.7 L388 583.6 L389 566.5 L389.7 554.6 L390 560.8 L391 581.7 L391.4 590 L392 584.2 L393 574.6 L393.4 570.7 L394 576.4 L395 586 L396 595.6 L397 605.2 L398 614.9 L398.3 617.7 L399 618 L400 617.8 L401 617.4 L402 617.9 L402.1 617.7 L403 610 L404 601.8 L404.1 601 L405 608.5 L406 616.9 L406.1 617.7 L407 617.4 L408 617.4 L409 617.7 L410 617.6 L411 617.9 L412 617.8 L413 617.4 L414 617.7 L415 617.7 L416 617.5 L417 618 L418 617.7 L419 617.7 L420 617.5 L420.2 617.7 L421 614.3 L422 609.3 L422.2 608.7 L423 612.6 L424 617 L424.2 617.7 L425 617.6 L426 617.5 L427 617.8 L428 617.8 L429 617.2 L430 617.6 L431 617.3 L432 617.2 L433 617.3 L434 617.2 L435 617.2 L436 616.8 L437 617.3 L437 617.1 L438 616.4 L439 616.2 L439.5 615.8 L440 608.9 L441 595 L442 581.2 L443 567.4 L443.6 559.1 L444 561.3 L445 566.7 L446 572.2 L446.9 577.1 L447 577.8 L448 584.8 L449 591.8 L450 598.8 L451 605.7 L452 613 L452.7 617.7 L453 617.8 L454 617.5 L455 618 L456 617.7 L456 617.7 L457 605.1 L458 593.2 L458.1 591.9 L459 600.2 L460 609.1 L460.9 617.7 L461 618 L462 617.9 L463 617.9 L464 617.4 L465 617.5 L466 617.5 L467 617.8 L468 617.9 L469 617.5 L470 617.6 L471 617.6 L472 617.4 L473 617.6 L473.3 617.7 L474 615.6 L475 611.6 L475.7 609.3 L476 610.3 L477 612.7 L477.4 613.8 L478 612.8 L479 612.2 L480 611.1 L480.7 610 L481 611.1 L482 613.5 L482.8 615.8 L483 615.4 L484 612.2 L484.8 610 L485 610.7 L486 615.6 L486.5 617.7 L487 617.6 L488 617.9 L489 617.7 L490 617.4 L491 617.5 L492 618 L492.7 617.7 L493 613.6 L494 599.5 L495 585.4 L496 571.4 L497 557.4 L497.2 554.6 L498 572.3 L498.8 590 L499 588 L500 577.7 L501 567.5 L501 567.5 L502 581.4 L503 595.4 L504 609.5 L504.6 617.7 L505 618 L506 617.5 L507 617.6 L508 617.9 L508.2 617.7 L509 612.4 L510 606.1 L511 599.7 L511.2 598.4 L512 604.8 L513 612.9 L513.6 617.7 L514 618 L515 618 L516 617.5 L517 617.4 L518 617.7 L519 617.5 L520 617.7 L521 618 L522 618 L523 617.8 L524 617.4 L525 617.5 L526 617.5 L527 617.4 L527.3 617.7 L528 608.9 L529 595.8 L529.6 588.1 L530 592.6 L531 604 L532 615.6 L532.2 617.7 L533 618 L534 617.5 L535 617.5 L536 617.8 L537 617.6 L538 617.9 L539 617.4 L540 617.5 L541 617.4 L542 617.5 L543 617.5 L544 618 L544 617.7 L544.0 619 L114 619 Z" fill="#90e0a9" fill-opacity="0.8" stroke="none"/><line x1="114" y1="551.2" x2="544" y2="551.2" stroke="#000" stroke-opacity="0.10" stroke-width="1"/><line x1="114" y1="568.2" x2="544" y2="568.2" stroke="#000" stroke-opacity="0.10" stroke-width="1"/><line x1="114" y1="585.1" x2="544" y2="585.1" stroke="#000" stroke-opacity="0.10" stroke-width="1"/><line x1="114" y1="602.0" x2="544" y2="602.0" stroke="#000" stroke-opacity="0.10" stroke-width="1"/><path d="M114 617.8 L114 617.6 L114.6 617.6 L115 615.4 L116 609.1 L116.3 606.8 L117 609.3 L117.9 613.6 L118 612.2 L119 599.8 L120 587.2 L121 574.7 L121.9 563.4 L122 563.9 L123 569.1 L123.2 570.2 L124 580.2 L125 592.8 L125.2 595.3 L126 583.6 L127 569.1 L127.3 564.8 L128 579.6 L128.1 581.7 L129 589.6 L130 598.4 L131 606.9 L132 615.8 L132.2 617.6 L133 617.8 L134 617.4 L134.7 617.6 L135 613.3 L136 599.1 L137 584.9 L137.7 574.9 L138 581.3 L139 602.7 L139.7 617.6 L140 617.3 L141 617.5 L142 617.3 L143 617.7 L144 618 L145 618 L146 617.4 L147 618 L148 617.5 L149 617.5 L150 618.1 L151 617.3 L152 618.2 L152 617.6 L153 613.4 L154 609.7 L154.5 608.2 L155 608.3 L156 607.5 L157 607.5 L157 607.2 L158 608.2 L159 607.9 L159.4 608.2 L160 610.8 L161 613.8 L161.9 617.6 L162 617.4 L163 617.1 L164 618.1 L165 617.8 L166 617.5 L167 617.5 L168 618 L169 617.2 L170 617.6 L170 617.3 L171 604.4 L172 591.1 L173 577.8 L174 564.5 L175 551.2 L175 551.2 L176 571.1 L176.7 585.1 L177 582.8 L178 575.1 L178.9 568.2 L179 569.1 L180 578.6 L181 588.1 L182 597.7 L183 607.4 L184 617.1 L184.1 617.6 L185 617.5 L186 617.7 L187 617.5 L187.4 617.6 L188 613.4 L189 606.4 L189.6 602 L190 605.3 L191 614.1 L191.5 617.6 L192 618 L193 617.7 L194 617.4 L195 617.7 L196 617.4 L197 617.6 L198 617.2 L199 617.5 L200 617.8 L201 618 L202 618.1 L203 618.1 L204 617.3 L205 617.2 L205.6 617.6 L206 615.6 L207 611.7 L207.7 608.2 L208 609.4 L209 614.7 L209.7 617.6 L210 617.2 L211 617.5 L212 617.4 L213 617.5 L214 617.7 L215 617.3 L216 617.1 L217 617.9 L218 617.7 L219 617.4 L220 617.4 L221 617.7 L221.2 617.6 L222 614.9 L223 610.8 L223.7 608.8 L224 610.3 L225 614.7 L225.3 615.6 L226 605.1 L227 590 L228 574.9 L228.9 561.4 L229 561.7 L230 564.6 L231 567.5 L231.9 570.2 L232 571 L233 579.7 L234 588.3 L235 596.9 L235.2 598.7 L236 602.4 L237 606.8 L238 611.9 L239 615.8 L239.3 617.6 L240 617.8 L241 617.2 L242 617.8 L242.6 617.6 L243 611.1 L244 596.1 L244.8 583.7 L245 587.3 L246 605.2 L246.7 617.6 L247 617.4 L248 617.4 L249 618 L250 618 L251 618.2 L252 618 L253 617.5 L254 618.1 L255 617.9 L256 617.6 L257 618 L258 617.8 L259 617.9 L259.1 617.6 L260 614 L261 610.8 L261.6 608.2 L262 607.5 L263 607.6 L264 607.5 L264 607.2 L265 607.7 L266 608 L266.5 608.2 L267 609.5 L268 613.4 L269 617.6 L269 617.3 L270 618.2 L271 617.5 L272 617.2 L273 617.5 L274 617.6 L275 617.5 L276 618 L277 617.4 L278 617.3 L278.9 617.6 L279 616.4 L280 598.4 L281 580.9 L282 563.4 L282.7 551.2 L283 556.6 L284 574.4 L284.6 585.1 L285 581.1 L286 571.1 L286.3 568.2 L287 575.2 L288 585.3 L289 595.4 L290 605.5 L291 615.5 L291.2 617.6 L292 617.8 L293 617.4 L294 617.2 L294.5 617.6 L295 612.9 L296 604.7 L296.7 598.7 L297 601 L298 609.2 L299 617.2 L299.1 617.6 L300 617.3 L301 617.5 L302 617.3 L303 617.2 L304 617.9 L305 617.5 L306 617.9 L307 617.3 L308 617.4 L309 617.9 L310 617.6 L311 617.5 L312 617.9 L312.6 617.6 L313 616.3 L314 611.6 L314.8 608.2 L315 609.4 L316 612.9 L317 616.4 L317.2 617.6 L318 617.3 L319 618.1 L320 617.3 L321 617.4 L322 617.4 L323 618.2 L324 617.4 L325 618 L326 617.3 L327 617.8 L328 617.8 L329 618 L330 617.2 L330.8 617.6 L331 615.6 L332 603.8 L333 592.2 L334 580.7 L335 569.1 L336 557.6 L336.2 555.3 L337 563.1 L338 573 L338.2 574.9 L339 571.4 L340 567 L340.2 566.1 L341 574.5 L342 585 L343 595.6 L344 605.7 L345 616.6 L345.1 617.6 L346 618 L347 617.5 L348 617.6 L348 617.6 L349 609.3 L350 599.9 L350.9 591.9 L351 592.8 L352 601.7 L353 610.2 L353.8 617.6 L354 617.9 L355 618.2 L356 617.4 L357 617.4 L358 617.8 L359 618 L360 617.6 L361 617.6 L362 617.4 L363 617.7 L364 617.6 L365 617.4 L366 618 L367 618 L367 617.6 L368 613.9 L369 609.8 L369.5 608.2 L370 607.8 L371 607.8 L372 608.2 L372.8 608.2 L373 609.3 L373.6 613.6 L374 613 L375 610.1 L375.2 609.5 L376 612.9 L377 615.8 L377.4 617.6 L378 617.1 L379 617.5 L380 617.4 L381 617.8 L382 617.3 L383 618.1 L384 617.8 L385 617.8 L386 617.6 L386 617.2 L387 599.7 L388 581.7 L389 563.8 L389.7 551.2 L390 557.8 L391 579.7 L391.4 588.5 L392 582.4 L393 572.2 L393.4 568.2 L394 574.2 L395 584.3 L396 594.4 L397 604.5 L398 615 L398.3 617.6 L399 618 L400 618.1 L401 617.3 L402 617.8 L402.1 617.6 L403 609.3 L404 600.9 L404.1 600 L405 608.2 L406 616.4 L406.1 617.6 L407 618 L408 617.2 L409 617.1 L410 617.2 L411 617.4 L412 617.2 L413 617.2 L414 617.1 L415 617.9 L416 617.3 L417 617.3 L418 617.8 L419 618 L420 617.2 L420.2 617.6 L421 613.9 L422 609.1 L422.2 608.2 L423 611.5 L424 616.7 L424.2 617.6 L425 617.9 L426 617.3 L427 617.5 L428 617.7 L429 617.2 L430 616.9 L431 617.6 L432 616.9 L433 616.9 L434 617.1 L435 617.4 L436 616.8 L437 617.2 L437 617 L438 616.7 L439 615.5 L439.5 615.6 L440 608.6 L441 593.8 L442 579.2 L443 564.7 L443.6 555.9 L444 558.2 L445 564 L446 569.8 L446.9 574.9 L447 575.7 L448 583 L449 590.4 L450 597.8 L451 605.1 L452 612.9 L452.7 617.6 L453 617.3 L454 617.1 L455 617.9 L456 617.7 L456 617.6 L457 604.7 L458 591.8 L458.1 590.5 L459 599.2 L460 608.9 L460.9 617.6 L461 617.4 L462 618.2 L463 617.5 L464 617.9 L465 617.2 L466 617.7 L467 617.2 L468 617.7 L469 617.5 L470 618.1 L471 618 L472 617.9 L473 617.8 L473.3 617.6 L474 615.4 L475 611.5 L475.7 608.8 L476 610.1 L477 612.4 L477.4 613.6 L478 612.3 L479 611.2 L480 610.2 L480.7 609.5 L481 609.9 L482 613 L482.8 615.6 L483 614.9 L484 612 L484.8 609.5 L485 610.9 L486 614.8 L486.5 617.6 L487 617.2 L488 617.3 L489 617.4 L490 617.3 L491 617.1 L492 617.1 L492.7 617.6 L493 612.9 L494 598.4 L495 583.7 L496 568.9 L497 554.2 L497.2 551.2 L498 569.8 L498.8 588.5 L499 586.3 L500 575.5 L501 564.8 L501 564.8 L502 579.4 L503 594.1 L504 609.4 L504.6 617.6 L505 617.2 L506 617.6 L507 617.7 L508 617.7 L508.2 617.6 L509 612.5 L510 605.4 L511 598.7 L511.2 597.3 L512 604.1 L513 613.1 L513.6 617.6 L514 617.5 L515 617.5 L516 618.1 L517 617.2 L518 617.2 L519 617.2 L520 617.6 L521 617.8 L522 617.7 L523 617.8 L524 617.1 L525 617.2 L526 617.2 L527 617.6 L527.3 617.6 L528 608.1 L529 594.6 L529.6 586.5 L530 591.3 L531 603.2 L532 615 L532.2 617.6 L533 617.9 L534 618 L535 617.1 L536 617.9 L537 617.9 L538 617.7 L539 618.1 L540 617.6 L541 618 L542 617.3 L543 618.1 L544 617.6 L544 617.3" fill="none" stroke="#8ee3a9" stroke-width="1.1" stroke-linejoin="round"/><path d="M114 617.7 L114 617.6 L114.6 617.7 L115 615.6 L116 609.4 L116.3 607.4 L117 610.4 L117.9 613.8 L118 612.5 L119 600.7 L120 588.8 L121 576.9 L121.9 566.2 L122 566.7 L123 571.6 L123.2 572.6 L124 582.2 L125 594.1 L125.2 596.5 L126 585.4 L127 571.6 L127.3 567.5 L128 581.6 L128.1 583.6 L129 591.1 L130 599.4 L131 607.6 L132 615.8 L132.2 617.7 L133 618 L134 617.8 L134.7 617.7 L135 614 L136 600.1 L137 586.6 L137.7 577.1 L138 583.2 L139 603.5 L139.7 617.7 L140 617.9 L141 617.7 L142 618 L143 617.9 L144 617.6 L145 617.7 L146 617.9 L147 617.7 L148 617.5 L149 618 L150 617.5 L151 617.6 L152 617.8 L152 617.7 L153 614.3 L154 610.2 L154.5 608.7 L155 608.7 L156 608.6 L157 608.3 L157 608.1 L158 608.1 L159 608.5 L159.4 608.7 L160 610.7 L161 614.3 L161.9 617.7 L162 617.7 L163 617.4 L164 617.8 L165 617.7 L166 617.5 L167 617.6 L168 617.5 L169 617.7 L170 617.7 L170 617.6 L171 605.1 L172 592.5 L173 579.8 L174 567.2 L175 554.6 L175 554.6 L176 573.5 L176.7 586.8 L177 584.6 L178 577.3 L178.9 570.7 L179 571.6 L180 580.6 L181 589.7 L182 598.7 L183 608.1 L184 617 L184.1 617.7 L185 617.9 L186 618 L187 617.9 L187.4 617.7 L188 613.9 L189 607.1 L189.6 602.9 L190 605.9 L191 613.9 L191.5 617.7 L192 617.8 L193 617.9 L194 617.9 L195 617.4 L196 617.6 L197 617.6 L198 617.9 L199 617.6 L200 617.9 L201 617.8 L202 617.4 L203 617.6 L204 617.7 L205 617.6 L205.6 617.7 L206 615.8 L207 611.5 L207.7 608.7 L208 610.2 L209 614.9 L209.7 617.7 L210 617.8 L211 617.9 L212 617.9 L213 617.4 L214 617.5 L215 617.8 L216 617.6 L217 617.8 L218 617.4 L219 617.7 L220 617.9 L221 617.9 L221.2 617.7 L222 615 L223 611.8 L223.7 609.3 L224 610.5 L225 614.3 L225.3 615.8 L226 605.8 L227 591.4 L228 577.1 L228.9 564.3 L229 564.5 L230 567.3 L231 570.1 L231.9 572.6 L232 573.4 L233 581.6 L234 589.8 L235 598 L235.2 599.7 L236 603.2 L237 607.8 L238 611.7 L239 616.4 L239.3 617.7 L240 618 L241 618 L242 618 L242.6 617.7 L243 611.8 L244 597.2 L244.8 585.5 L245 588.9 L246 605.6 L246.7 617.7 L247 617.8 L248 618 L249 617.8 L250 617.4 L251 617.7 L252 617.4 L253 617.5 L254 618 L255 617.6 L256 617.6 L257 617.7 L258 617.9 L259 617.6 L259.1 617.7 L260 614.7 L261 610.9 L261.6 608.7 L262 608.6 L263 608 L264 608.1 L264 607.8 L265 608.5 L266 608.6 L266.5 608.7 L267 610.7 L268 613.8 L269 617.7 L269 617.5 L270 617.8 L271 617.6 L272 617.6 L273 617.9 L274 617.5 L275 617.7 L276 617.5 L277 617.7 L278 618.1 L278.9 617.7 L279 616.2 L280 599.4 L281 582.8 L282 566.2 L282.7 554.6 L283 559.7 L284 576.6 L284.6 586.8 L285 583 L286 573.5 L286.3 570.7 L287 577.4 L288 587 L289 596.6 L290 606.5 L291 615.5 L291.2 617.7 L292 617.5 L293 617.5 L294 617.8 L294.5 617.7 L295 613.9 L296 605.4 L296.7 599.7 L297 601.9 L298 609.2 L299 616.7 L299.1 617.7 L300 618 L301 617.7 L302 618 L303 617.5 L304 617.5 L305 618 L306 617.7 L307 617.7 L308 617.9 L309 617.5 L310 617.8 L311 617.9 L312 617.7 L312.6 617.7 L313 615.9 L314 612.2 L314.8 608.7 L315 609.6 L316 612.9 L317 616.9 L317.2 617.7 L318 617.8 L319 617.7 L320 618 L321 617.9 L322 617.8 L323 617.7 L324 617.9 L325 617.9 L326 618 L327 617.6 L328 617.9 L329 617.4 L330 617.5 L330.8 617.7 L331 615.8 L332 604.5 L333 593.6 L334 582.6 L335 571.6 L336 560.6 L336.2 558.5 L337 565.9 L338 575.3 L338.2 577.1 L339 573.8 L340 569.6 L340.2 568.8 L341 576.8 L342 586.7 L343 596.7 L344 606.9 L345 616.6 L345.1 617.7 L346 617.9 L347 618 L348 617.7 L348 617.4 L349 609.2 L350 600.8 L350.9 593.2 L351 594.1 L352 602.5 L353 611 L353.8 617.7 L354 617.5 L355 617.5 L356 617.9 L357 618 L358 617.8 L359 617.8 L360 617.7 L361 617.6 L362 617.6 L363 617.4 L364 618 L365 617.8 L366 617.8 L367 617.7 L367 617.5 L368 614.3 L369 610.7 L369.5 608.7 L370 608.7 L371 608.7 L372 608.8 L372.8 608.7 L373 610.2 L373.6 613.8 L374 612.6 L375 610.5 L375.2 610 L376 612.5 L377 616.3 L377.4 617.7 L378 618 L379 617.4 L380 617.5 L381 617.4 L382 617.4 L383 617.5 L384 617.9 L385 617.7 L386 617.9 L386 617.7 L387 600.7 L388 583.6 L389 566.5 L389.7 554.6 L390 560.8 L391 581.7 L391.4 590 L392 584.2 L393 574.6 L393.4 570.7 L394 576.4 L395 586 L396 595.6 L397 605.2 L398 614.9 L398.3 617.7 L399 618 L400 617.8 L401 617.4 L402 617.9 L402.1 617.7 L403 610 L404 601.8 L404.1 601 L405 608.5 L406 616.9 L406.1 617.7 L407 617.4 L408 617.4 L409 617.7 L410 617.6 L411 617.9 L412 617.8 L413 617.4 L414 617.7 L415 617.7 L416 617.5 L417 618 L418 617.7 L419 617.7 L420 617.5 L420.2 617.7 L421 614.3 L422 609.3 L422.2 608.7 L423 612.6 L424 617 L424.2 617.7 L425 617.6 L426 617.5 L427 617.8 L428 617.8 L429 617.2 L430 617.6 L431 617.3 L432 617.2 L433 617.3 L434 617.2 L435 617.2 L436 616.8 L437 617.3 L437 617.1 L438 616.4 L439 616.2 L439.5 615.8 L440 608.9 L441 595 L442 581.2 L443 567.4 L443.6 559.1 L444 561.3 L445 566.7 L446 572.2 L446.9 577.1 L447 577.8 L448 584.8 L449 591.8 L450 598.8 L451 605.7 L452 613 L452.7 617.7 L453 617.8 L454 617.5 L455 618 L456 617.7 L456 617.7 L457 605.1 L458 593.2 L458.1 591.9 L459 600.2 L460 609.1 L460.9 617.7 L461 618 L462 617.9 L463 617.9 L464 617.4 L465 617.5 L466 617.5 L467 617.8 L468 617.9 L469 617.5 L470 617.6 L471 617.6 L472 617.4 L473 617.6 L473.3 617.7 L474 615.6 L475 611.6 L475.7 609.3 L476 610.3 L477 612.7 L477.4 613.8 L478 612.8 L479 612.2 L480 611.1 L480.7 610 L481 611.1 L482 613.5 L482.8 615.8 L483 615.4 L484 612.2 L484.8 610 L485 610.7 L486 615.6 L486.5 617.7 L487 617.6 L488 617.9 L489 617.7 L490 617.4 L491 617.5 L492 618 L492.7 617.7 L493 613.6 L494 599.5 L495 585.4 L496 571.4 L497 557.4 L497.2 554.6 L498 572.3 L498.8 590 L499 588 L500 577.7 L501 567.5 L501 567.5 L502 581.4 L503 595.4 L504 609.5 L504.6 617.7 L505 618 L506 617.5 L507 617.6 L508 617.9 L508.2 617.7 L509 612.4 L510 606.1 L511 599.7 L511.2 598.4 L512 604.8 L513 612.9 L513.6 617.7 L514 618 L515 618 L516 617.5 L517 617.4 L518 617.7 L519 617.5 L520 617.7 L521 618 L522 618 L523 617.8 L524 617.4 L525 617.5 L526 617.5 L527 617.4 L527.3 617.7 L528 608.9 L529 595.8 L529.6 588.1 L530 592.6 L531 604 L532 615.6 L532.2 617.7 L533 618 L534 617.5 L535 617.5 L536 617.8 L537 617.6 L538 617.9 L539 617.4 L540 617.5 L541 617.4 L542 617.5 L543 617.5 L544 618 L544 617.7" fill="none" stroke="#4fbf77" stroke-width="1.1" stroke-linejoin="round"/><line x1="117" y1="619" x2="117" y2="622" stroke="#777" stroke-width="1"/><text x="117" y="633.62" font-size="9.28" textLength="20.20" lengthAdjust="spacingAndGlyphs" fill="#333" stroke="#333" stroke-width="0.1" text-anchor="middle" font-family="Liberation Sans">16:15</text><line x1="171.2" y1="619" x2="171.2" y2="622" stroke="#777" stroke-width="1"/><text x="171.2" y="633.62" font-size="9.28" textLength="20.20" lengthAdjust="spacingAndGlyphs" fill="#333" stroke="#333" stroke-width="0.1" text-anchor="middle" font-family="Liberation Sans">16:30</text><line x1="224.9" y1="619" x2="224.9" y2="622" stroke="#777" stroke-width="1"/><text x="224.9" y="633.62" font-size="9.28" textLength="20.20" lengthAdjust="spacingAndGlyphs" fill="#333" stroke="#333" stroke-width="0.1" text-anchor="middle" font-family="Liberation Sans">16:45</text><line x1="278.6" y1="619" x2="278.6" y2="622" stroke="#777" stroke-width="1"/><text x="278.6" y="633.62" font-size="9.28" textLength="20.20" lengthAdjust="spacingAndGlyphs" fill="#333" stroke="#333" stroke-width="0.1" text-anchor="middle" font-family="Liberation Sans">17:00</text><line x1="332.3" y1="619" x2="332.3" y2="622" stroke="#777" stroke-width="1"/><text x="332.3" y="633.62" font-size="9.28" textLength="20.20" lengthAdjust="spacingAndGlyphs" fill="#333" stroke="#333" stroke-width="0.1" text-anchor="middle" font-family="Liberation Sans">17:15</text><line x1="386" y1="619" x2="386" y2="622" stroke="#777" stroke-width="1"/><text x="386" y="633.62" font-size="9.28" textLength="20.20" lengthAdjust="spacingAndGlyphs" fill="#333" stroke="#333" stroke-width="0.1" text-anchor="middle" font-family="Liberation Sans">17:30</text><line x1="439.7" y1="619" x2="439.7" y2="622" stroke="#777" stroke-width="1"/><text x="439.7" y="633.62" font-size="9.28" textLength="20.20" lengthAdjust="spacingAndGlyphs" fill="#333" stroke="#333" stroke-width="0.1" text-anchor="middle" font-family="Liberation Sans">17:45</text><line x1="493.5" y1="619" x2="493.5" y2="622" stroke="#777" stroke-width="1"/><text x="493.5" y="633.62" font-size="9.28" textLength="20.20" lengthAdjust="spacingAndGlyphs" fill="#333" stroke="#333" stroke-width="0.1" text-anchor="middle" font-family="Liberation Sans">18:00</text><rect x="419" y="535.5" width="12" height="3.2" fill="#8ee3a9" fill-opacity="0.6"/><text x="435" y="540.38" font-size="9.43" textLength="31.00" lengthAdjust="spacingAndGlyphs" fill="#333" stroke="#333" stroke-width="0.1" text-anchor="start" font-family="Liberation Sans">Machine</text><rect x="482" y="535.5" width="12" height="3.2" fill="#4fbf77" fill-opacity="0.6"/><text x="498" y="540.25" font-size="9.09" textLength="41.00" lengthAdjust="spacingAndGlyphs" fill="#333" stroke="#333" stroke-width="0.1" text-anchor="start" font-family="Liberation Sans">SQL Server</text><text x="558.6" y="535.35" font-size="13.26" textLength="28.40" lengthAdjust="spacingAndGlyphs" fill="#222" stroke="#222" stroke-width="0.1" text-anchor="start" font-family="Liberation Sans">Waits</text><line x1="599" y1="551.2" x2="1037" y2="551.2" stroke="#c9c9c9" stroke-width="1"/><text x="589" y="554.77" font-size="9.98" textLength="30.40" lengthAdjust="spacingAndGlyphs" fill="#333" stroke="#333" stroke-width="0.1" text-anchor="end" font-family="Liberation Sans">1.67 s/s</text><line x1="599" y1="568.2" x2="1037" y2="568.2" stroke="#c9c9c9" stroke-width="1"/><text x="589" y="571.72" font-size="9.98" textLength="30.40" lengthAdjust="spacingAndGlyphs" fill="#333" stroke="#333" stroke-width="0.1" text-anchor="end" font-family="Liberation Sans">1.26 s/s</text><line x1="599" y1="585.1" x2="1037" y2="585.1" stroke="#c9c9c9" stroke-width="1"/><text x="589" y="588.67" font-size="9.98" textLength="30.40" lengthAdjust="spacingAndGlyphs" fill="#333" stroke="#333" stroke-width="0.1" text-anchor="end" font-family="Liberation Sans">0.84 s/s</text><line x1="599" y1="602.0" x2="1037" y2="602.0" stroke="#c9c9c9" stroke-width="1"/><text x="589" y="605.62" font-size="9.98" textLength="30.40" lengthAdjust="spacingAndGlyphs" fill="#333" stroke="#333" stroke-width="0.1" text-anchor="end" font-family="Liberation Sans">0.42 s/s</text><line x1="599" y1="619.0" x2="1037" y2="619.0" stroke="#c9c9c9" stroke-width="1"/><text x="589" y="622.57" font-size="9.98" textLength="30.40" lengthAdjust="spacingAndGlyphs" fill="#333" stroke="#333" stroke-width="0.1" text-anchor="end" font-family="Liberation Sans">0.00 s/s</text><path d="M599 618.5 L599 618.3 L600 617.8 L600.4 617.6 L601 617.4 L602 616.1 L603 615.6 L604 614.6 L605 613.5 L606 613 L606.8 612.2 L607 610.6 L608 604.3 L609 597.7 L610 591.1 L611 584.5 L612 577.9 L613 571.2 L614 564.6 L614.7 560 L615 562.3 L616 569.7 L617 577.2 L618 584.7 L619 592.2 L620 599.7 L621 607 L621.4 610.2 L622 610 L623 609.6 L624 609.3 L625 609.1 L626 608.3 L627 608.4 L628 607.6 L629 607.4 L629.5 607.5 L630 608.7 L631 610.2 L632 611.8 L633 613.3 L634 615.4 L635 616.9 L635.4 617.6 L636 617.6 L637 617.2 L638 616.9 L639 616.9 L640 617.1 L641 616.6 L642 616.6 L643 616.2 L643.8 616.3 L644 616.3 L645 616.1 L646 616.2 L647 616.4 L648 616.5 L649 616.6 L650 616.8 L651 617.2 L652 616.8 L653 617.2 L654 617.6 L655 617.5 L656 617.6 L657 617.8 L657.3 617.6 L658 611.8 L659 604.1 L660 596.2 L661 588.2 L662 580.3 L663 572.3 L664 564.4 L665 556.4 L665.4 553.2 L666 557.6 L667 565 L668 572.4 L669 579.7 L670 587.1 L671 594.4 L672 601.8 L672.5 605.4 L673 606.6 L674 607.9 L675 610 L676 612 L677 613.7 L678 615.5 L679 617.5 L679.2 617.6 L680 617.4 L681 617.5 L682 617.2 L683 617.3 L684 617.2 L685 617 L686 617 L687 617.2 L688 617.2 L689 617.2 L690 616.9 L691 616.8 L692 616.8 L693 616.8 L694 617.3 L694.4 617 L695 617 L696 617.2 L697 616.9 L698 616.9 L699 616.9 L700 616.7 L701 617.2 L702 616.8 L703 616.9 L704 617.2 L705 616.6 L706 617.3 L707 617 L708 616.9 L709 616.9 L710 616.6 L711 616.9 L711.2 617 L712 615.7 L713 615 L714 613.6 L715 612.7 L716 611.1 L716.3 610.9 L717 606.2 L718 599.3 L719 592.6 L720 585.8 L721 579 L722 572.2 L723 565.4 L723.8 560 L724 561.5 L725 569.2 L726 576.9 L727 584.6 L728 592.3 L729 599.9 L730 607.4 L730.6 612.2 L731 612.3 L732 611.7 L733 610.9 L734 611.2 L735 610.3 L736 609.9 L737 609.5 L737.3 609.5 L738 610.3 L739 611.6 L740 612.5 L741 614.1 L742 615.1 L743 616.3 L744 617.6 L744 617.5 L745 617.6 L746 617.9 L747 617.3 L748 617.6 L749 617.2 L750 617 L751 617.1 L752 617.3 L753 616.9 L754 617.2 L755 617.2 L756 617 L756.7 617 L757 616.9 L758 616.9 L759 617.1 L760 617.2 L761 617.1 L762 617.4 L763 617.3 L764 617.8 L765 617.7 L766 617.3 L767 617.8 L767.6 617.6 L768 615.4 L769 610 L770 604 L771 598.4 L772 592.7 L773 587.1 L774 581.4 L774.9 576.3 L775 576.7 L776 580.8 L777 584.9 L778 589.1 L779 593.2 L780 597.3 L781 601.4 L782 605.4 L782.8 608.8 L783 609.2 L784 610.5 L785 611.5 L786 612.2 L787 613.5 L788 615.2 L789 615.7 L790 617.5 L790.4 617.6 L791 617.6 L792 617.5 L793 617.3 L794 617.7 L795 617.2 L796 617.5 L797 617.1 L798 617 L799 617.1 L800 617.5 L801 617 L802 617.1 L803 616.9 L803.8 617 L804 616.8 L805 617.3 L806 617 L807 617 L808 616.9 L809 617.1 L810 617.2 L811 617.1 L812 617.6 L813 617.1 L814 617.4 L815 617.4 L816 617.8 L817 617.6 L818 617.7 L818.4 617.6 L819 614.4 L820 608.1 L821 602.6 L822 596.8 L823 591 L824 585.2 L825 579.4 L826 573.6 L826 573.6 L827 572.6 L828 571.7 L829 570.7 L830 569.8 L831 568.9 L832 567.9 L833 567 L833.2 566.8 L834 572.9 L835 580.5 L836 588 L837 595.6 L838 603.2 L839 610.6 L839.9 617.6 L840 617.6 L841 617.2 L842 615.9 L843 615.8 L844 614.8 L845 614.1 L846 613.2 L847 612.7 L847.8 612.2 L848 612.3 L849 613.2 L850 613.7 L851 614.6 L852 615.7 L853 616.2 L854 616.9 L854.6 617.6 L855 617.5 L856 617.3 L857 616.9 L858 615.8 L859 615.9 L860 615 L861 615 L862 614.5 L862.2 614.3 L863 614.7 L864 614.5 L865 615.2 L866 615.2 L867 615.3 L868 615.7 L869 616.3 L870 616.6 L871 616.3 L872 616.9 L873 617.3 L874 617.2 L875 617.3 L875.6 617.6 L876 615.8 L877 611 L878 606 L879 600.9 L880 596 L881 591.1 L882 586.1 L883 581.2 L884 576.3 L884 576.3 L885 580.1 L886 584 L887 587.8 L888 591.6 L889 595.5 L890 599.3 L891 603.1 L891.6 605.4 L892 606.2 L893 607.8 L894 610 L895 611.4 L896 613.2 L897 615.1 L898 617 L898.4 617.6 L899 617.9 L900 617.6 L901 617.6 L902 617.4 L903 617.7 L904 617.6 L905 617.7 L906 617.3 L907 617.5 L908 617.2 L909 617.2 L910 617.2 L911 617.3 L912 616.7 L912.7 617 L913 617 L914 617.3 L915 617 L916 616.9 L917 617.1 L918 616.9 L919 617 L920 617.1 L921 617.6 L922 617.4 L923 617.4 L924 617.6 L925 617.5 L926 617.4 L927 617.4 L928 617.4 L929 617.5 L929.5 617.6 L930 617.3 L931 616.2 L932 615.3 L933 614.3 L934 613.8 L935 612.8 L935.4 612.2 L936 608.2 L937 601.8 L938 595.3 L939 588.8 L940 582.3 L941 575.9 L942 569.4 L942.5 566.1 L943 569.7 L944 576.9 L945 584 L946 591.2 L947 598.3 L948 605.3 L949 612.8 L949.7 617.6 L950 617.2 L951 616.4 L952 615.7 L953 615 L954 614.5 L955 613.6 L956 612.4 L956.5 612.2 L957 612.3 L958 613.7 L959 614.6 L960 615.2 L961 615.6 L962 616.9 L963 617.2 L963.2 617.6 L964 616.9 L965 616.1 L966 615.3 L967 614.8 L968 614.4 L969 613.5 L970 612.8 L971 611.9 L971.6 611.5 L972 611.6 L973 611.4 L974 611.9 L975 611.7 L976 611.7 L977 611.8 L978 611.4 L979 611.3 L979.2 611.5 L980 612.5 L981 613.2 L982 614.4 L983 615.2 L984 616.2 L985 616.7 L985.9 617.6 L986 616.5 L987 607.4 L988 598.5 L989 589.4 L990 580.3 L991 571.2 L992 562.1 L993 553 L993.2 551.2 L994 557 L995 564.3 L996 571.6 L997 578.9 L998 586.2 L999 593.5 L1000 600.8 L1001 608.3 L1001.1 608.8 L1002 610.1 L1003 611.5 L1004 612.5 L1005 614.1 L1006 615.1 L1007 616.6 L1007.8 617.6 L1008 617.6 L1009 617.3 L1010 617.1 L1011 617.5 L1012 617.1 L1013 617.3 L1014 617.4 L1015 616.7 L1016 617.1 L1017 616.9 L1018 616.5 L1019 616.3 L1020 616.6 L1021 616.2 L1022 616.4 L1022.1 616.3 L1023 616.7 L1024 616.4 L1025 616.8 L1026 616.9 L1027 616.8 L1028 616.8 L1029 617.2 L1030 617.3 L1031 617.1 L1032 617.4 L1033 617.3 L1034 617.4 L1035 617.7 L1035.6 617.6 L1036 617.4 L1037 617.6 L1037 617.3 L1037.0 619 L599 619 Z" fill="#fac49a" fill-opacity="0.75" stroke="none"/><path d="M599 618.3 L599 618.1 L600 618.1 L601 617.5 L602 617.2 L603 616.7 L604 616.5 L605 615.9 L606 615.9 L607 615.2 L608 615 L609 614.7 L610 614.3 L611 613.8 L611.8 613.6 L612 613.9 L613 614.2 L614 614.8 L615 615.3 L616 615.7 L617 616.2 L618 616.6 L619 616.9 L620 617.5 L620.3 617.6 L621 617.5 L622 617.5 L623 617.5 L624 617.5 L625 617.7 L626 617.7 L627 617.6 L628 617.8 L629 618 L630 617.8 L631 617.8 L632 618 L633 618 L634 618 L635 617.8 L636 617.8 L637 617.9 L638 618 L639 618.2 L640 618.2 L641 618 L642 618 L643 618.1 L644 618.2 L645 618.3 L646 618.2 L647 618.3 L648 618.1 L649 618.3 L650 618.2 L651 618.2 L652 618.2 L653 618.1 L654 618.2 L655 618.4 L656 618.1 L657 618.3 L657 618.2 L658 617.9 L659 617.8 L660 617.4 L661 617.2 L662 617.1 L663 616.7 L664 616.4 L664.9 616.3 L665 616.2 L666 616.4 L667 616.9 L668 617.1 L669 617.6 L670 617.7 L671 618.2 L672 618.3 L672 618.2 L673 618.2 L674 618.4 L675 618.5 L676 618.5 L677 618.3 L678 618.5 L679 618.2 L680 618.3 L681 618.3 L682 618.3 L683 618.5 L684 618.3 L685 618.5 L686 618.3 L687 618.2 L688 618.5 L689 618.2 L690 618.1 L691 618.4 L692 618.4 L693 618.4 L694 618.2 L695 618.5 L696 618.2 L697 618.4 L698 618.2 L699 618.2 L700 618.2 L701 618.4 L702 618.3 L703 618.4 L704 618.2 L705 618.4 L706 618.5 L706 618.3 L707 618 L708 617.7 L709 617.2 L710 616.7 L711 616.4 L712 616.1 L713 615.4 L714 615.3 L715 614.6 L716 614.3 L716.3 614.3 L717 614.5 L718 614.7 L719 615.1 L720 615.3 L721 615.7 L722 616.2 L723 616.4 L724 616.7 L724.7 617 L725 616.8 L726 617.3 L727 617.4 L728 617.3 L729 617.8 L730 617.7 L731 617.8 L732 618.1 L733 618.5 L733 618.3 L734 618.2 L735 618.4 L736 618.3 L737 618.2 L738 618.4 L739 618.4 L740 618.5 L741 618.4 L742 618.5 L743 618.2 L744 618.2 L745 618.5 L746 618.3 L747 618.2 L748 618.2 L749 618.4 L750 618.3 L751 618.2 L752 618.3 L753 618.1 L754 618.2 L755 618.1 L756 618.5 L757 618.5 L758 618.3 L759 618.3 L760 618.4 L761 618.4 L762 618.2 L763 618.2 L764 618.5 L765 618.5 L765 618.3 L766 618.1 L767 618.1 L768 618.1 L769 617.6 L770 617.7 L771 617.7 L772 617.4 L773 617.3 L774 617.1 L775 616.9 L775.2 617 L776 617.2 L777 617.2 L778 617.2 L779 617.5 L780 617.5 L781 617.6 L782 617.8 L783 618 L784 618.3 L785 618.3 L785 618.1 L786 618.4 L787 618.4 L788 618.3 L789 618.3 L790 618.2 L791 618.3 L792 618.2 L793 618.2 L794 618.3 L795 618.4 L796 618.3 L797 618.3 L798 618.2 L799 618.4 L800 618.2 L801 618.2 L802 618.5 L803 618.1 L804 618.3 L805 618.3 L806 618.4 L807 618.4 L808 618.2 L809 618.2 L810 618.3 L811 618.3 L812 618.3 L813 618.5 L814 618.2 L815 618.4 L816 618.5 L817 618.4 L818 618.4 L818 618.3 L819 617.6 L820 617.3 L821 616.7 L822 615.8 L823 615.4 L824 614.6 L825 614.4 L826 613.7 L826 613.6 L827 614.1 L828 614.4 L829 614.7 L830 615.1 L831 615.3 L832 615.6 L833 616.2 L834 616.4 L835 616.8 L836 617.1 L836.9 617.6 L837 617.6 L838 617.8 L839 617.7 L840 617.9 L841 617.8 L842 617.5 L843 617.8 L844 617.7 L845 617.6 L846 617.7 L847 617.9 L848 617.8 L849 618 L850 617.8 L851 617.8 L852 618 L853 618 L854 617.8 L855 618.1 L856 618.1 L857 617.9 L858 617.9 L859 618 L860 618 L861 618.3 L862 618.1 L863 618.1 L864 618.3 L865 618.1 L866 618.3 L867 618.2 L868 618.1 L869 618.1 L870 618.4 L871 618.4 L872 618.2 L873 618.1 L874 618.3 L875 618.4 L875 618.3 L876 618.1 L877 617.9 L878 618 L879 617.9 L880 617.6 L881 617.3 L882 617.3 L883 617.1 L884 617.1 L884 617 L885 617.3 L886 617.5 L887 617.5 L888 617.7 L889 617.8 L890 618 L891 618.2 L892 618.3 L892 618.2 L893 618.4 L894 618.3 L895 618.3 L896 618.2 L897 618.1 L898 618.2 L899 618.5 L900 618.2 L901 618.3 L902 618.3 L903 618.5 L904 618.5 L905 618.5 L906 618.5 L907 618.5 L908 618.2 L909 618.2 L910 618.4 L911 618.4 L912 618.3 L913 618.5 L914 618.4 L915 618.3 L916 618.2 L917 618.2 L918 618.5 L919 618.2 L920 618.1 L921 618.2 L922 618.5 L923 618.3 L924 618.1 L925 618.4 L926 618.3 L927 618.3 L928 618.1 L929 618.2 L930 618.3 L930 618.3 L931 618.1 L932 618.1 L933 617.7 L934 617.7 L935 617.4 L936 617.4 L937 617 L938 616.8 L939 616.9 L940 616.6 L941 616.5 L941.3 616.3 L942 616.4 L943 616.8 L944 616.7 L945 617 L946 617.6 L947 617.7 L948 617.9 L949 618.2 L950 618.3 L950 618.3 L951 618.2 L952 618.3 L953 618.3 L954 618.5 L955 618.3 L956 618.2 L957 618.5 L958 618.4 L959 618.3 L960 618.3 L961 618.4 L962 618.2 L963 618.1 L964 618.3 L965 618.3 L965 618.1 L966 618 L967 617.9 L968 618 L969 617.8 L970 617.5 L971 617.4 L972 617.4 L973 617.3 L974 617.2 L975 617 L975 617 L976 617 L977 617.2 L978 617.3 L979 617.6 L980 617.6 L981 617.8 L982 618 L983 618.1 L984 618.1 L985 618.1 L986 618.3 L986 618.2 L987 617.9 L988 617.3 L989 616.8 L990 616.7 L991 616 L992 615.7 L993 615 L993.5 614.9 L994 615.3 L995 615.6 L996 616 L997 616.2 L998 616.7 L999 617.3 L1000 617.5 L1001 618 L1002 618.5 L1002 618.3 L1003 618.5 L1004 618.3 L1005 618.2 L1006 618.1 L1007 618.4 L1008 618.4 L1009 618.3 L1010 618.3 L1011 618.4 L1012 618.5 L1013 618.2 L1014 618.4 L1015 618.4 L1016 618.3 L1017 618.5 L1018 618.3 L1019 618.5 L1020 618.4 L1021 618.3 L1022 618.2 L1023 618.1 L1024 618.2 L1025 618.5 L1026 618.3 L1027 618.4 L1028 618.4 L1029 618.3 L1030 618.4 L1031 618.2 L1032 618.3 L1033 618.5 L1034 618.5 L1035 618.5 L1036 618.1 L1037 618.3 L1037 618.1 L1037.0 619 L599 619 Z" fill="#f1ab78" fill-opacity="0.8" stroke="none"/><line x1="599" y1="551.2" x2="1037" y2="551.2" stroke="#000" stroke-opacity="0.10" stroke-width="1"/><line x1="599" y1="568.2" x2="1037" y2="568.2" stroke="#000" stroke-opacity="0.10" stroke-width="1"/><line x1="599" y1="585.1" x2="1037" y2="585.1" stroke="#000" stroke-opacity="0.10" stroke-width="1"/><line x1="599" y1="602.0" x2="1037" y2="602.0" stroke="#000" stroke-opacity="0.10" stroke-width="1"/><path d="M599 618.5 L599 618.3 L600 617.8 L600.4 617.6 L601 617.4 L602 616.1 L603 615.6 L604 614.6 L605 613.5 L606 613 L606.8 612.2 L607 610.6 L608 604.3 L609 597.7 L610 591.1 L611 584.5 L612 577.9 L613 571.2 L614 564.6 L614.7 560 L615 562.3 L616 569.7 L617 577.2 L618 584.7 L619 592.2 L620 599.7 L621 607 L621.4 610.2 L622 610 L623 609.6 L624 609.3 L625 609.1 L626 608.3 L627 608.4 L628 607.6 L629 607.4 L629.5 607.5 L630 608.7 L631 610.2 L632 611.8 L633 613.3 L634 615.4 L635 616.9 L635.4 617.6 L636 617.6 L637 617.2 L638 616.9 L639 616.9 L640 617.1 L641 616.6 L642 616.6 L643 616.2 L643.8 616.3 L644 616.3 L645 616.1 L646 616.2 L647 616.4 L648 616.5 L649 616.6 L650 616.8 L651 617.2 L652 616.8 L653 617.2 L654 617.6 L655 617.5 L656 617.6 L657 617.8 L657.3 617.6 L658 611.8 L659 604.1 L660 596.2 L661 588.2 L662 580.3 L663 572.3 L664 564.4 L665 556.4 L665.4 553.2 L666 557.6 L667 565 L668 572.4 L669 579.7 L670 587.1 L671 594.4 L672 601.8 L672.5 605.4 L673 606.6 L674 607.9 L675 610 L676 612 L677 613.7 L678 615.5 L679 617.5 L679.2 617.6 L680 617.4 L681 617.5 L682 617.2 L683 617.3 L684 617.2 L685 617 L686 617 L687 617.2 L688 617.2 L689 617.2 L690 616.9 L691 616.8 L692 616.8 L693 616.8 L694 617.3 L694.4 617 L695 617 L696 617.2 L697 616.9 L698 616.9 L699 616.9 L700 616.7 L701 617.2 L702 616.8 L703 616.9 L704 617.2 L705 616.6 L706 617.3 L707 617 L708 616.9 L709 616.9 L710 616.6 L711 616.9 L711.2 617 L712 615.7 L713 615 L714 613.6 L715 612.7 L716 611.1 L716.3 610.9 L717 606.2 L718 599.3 L719 592.6 L720 585.8 L721 579 L722 572.2 L723 565.4 L723.8 560 L724 561.5 L725 569.2 L726 576.9 L727 584.6 L728 592.3 L729 599.9 L730 607.4 L730.6 612.2 L731 612.3 L732 611.7 L733 610.9 L734 611.2 L735 610.3 L736 609.9 L737 609.5 L737.3 609.5 L738 610.3 L739 611.6 L740 612.5 L741 614.1 L742 615.1 L743 616.3 L744 617.6 L744 617.5 L745 617.6 L746 617.9 L747 617.3 L748 617.6 L749 617.2 L750 617 L751 617.1 L752 617.3 L753 616.9 L754 617.2 L755 617.2 L756 617 L756.7 617 L757 616.9 L758 616.9 L759 617.1 L760 617.2 L761 617.1 L762 617.4 L763 617.3 L764 617.8 L765 617.7 L766 617.3 L767 617.8 L767.6 617.6 L768 615.4 L769 610 L770 604 L771 598.4 L772 592.7 L773 587.1 L774 581.4 L774.9 576.3 L775 576.7 L776 580.8 L777 584.9 L778 589.1 L779 593.2 L780 597.3 L781 601.4 L782 605.4 L782.8 608.8 L783 609.2 L784 610.5 L785 611.5 L786 612.2 L787 613.5 L788 615.2 L789 615.7 L790 617.5 L790.4 617.6 L791 617.6 L792 617.5 L793 617.3 L794 617.7 L795 617.2 L796 617.5 L797 617.1 L798 617 L799 617.1 L800 617.5 L801 617 L802 617.1 L803 616.9 L803.8 617 L804 616.8 L805 617.3 L806 617 L807 617 L808 616.9 L809 617.1 L810 617.2 L811 617.1 L812 617.6 L813 617.1 L814 617.4 L815 617.4 L816 617.8 L817 617.6 L818 617.7 L818.4 617.6 L819 614.4 L820 608.1 L821 602.6 L822 596.8 L823 591 L824 585.2 L825 579.4 L826 573.6 L826 573.6 L827 572.6 L828 571.7 L829 570.7 L830 569.8 L831 568.9 L832 567.9 L833 567 L833.2 566.8 L834 572.9 L835 580.5 L836 588 L837 595.6 L838 603.2 L839 610.6 L839.9 617.6 L840 617.6 L841 617.2 L842 615.9 L843 615.8 L844 614.8 L845 614.1 L846 613.2 L847 612.7 L847.8 612.2 L848 612.3 L849 613.2 L850 613.7 L851 614.6 L852 615.7 L853 616.2 L854 616.9 L854.6 617.6 L855 617.5 L856 617.3 L857 616.9 L858 615.8 L859 615.9 L860 615 L861 615 L862 614.5 L862.2 614.3 L863 614.7 L864 614.5 L865 615.2 L866 615.2 L867 615.3 L868 615.7 L869 616.3 L870 616.6 L871 616.3 L872 616.9 L873 617.3 L874 617.2 L875 617.3 L875.6 617.6 L876 615.8 L877 611 L878 606 L879 600.9 L880 596 L881 591.1 L882 586.1 L883 581.2 L884 576.3 L884 576.3 L885 580.1 L886 584 L887 587.8 L888 591.6 L889 595.5 L890 599.3 L891 603.1 L891.6 605.4 L892 606.2 L893 607.8 L894 610 L895 611.4 L896 613.2 L897 615.1 L898 617 L898.4 617.6 L899 617.9 L900 617.6 L901 617.6 L902 617.4 L903 617.7 L904 617.6 L905 617.7 L906 617.3 L907 617.5 L908 617.2 L909 617.2 L910 617.2 L911 617.3 L912 616.7 L912.7 617 L913 617 L914 617.3 L915 617 L916 616.9 L917 617.1 L918 616.9 L919 617 L920 617.1 L921 617.6 L922 617.4 L923 617.4 L924 617.6 L925 617.5 L926 617.4 L927 617.4 L928 617.4 L929 617.5 L929.5 617.6 L930 617.3 L931 616.2 L932 615.3 L933 614.3 L934 613.8 L935 612.8 L935.4 612.2 L936 608.2 L937 601.8 L938 595.3 L939 588.8 L940 582.3 L941 575.9 L942 569.4 L942.5 566.1 L943 569.7 L944 576.9 L945 584 L946 591.2 L947 598.3 L948 605.3 L949 612.8 L949.7 617.6 L950 617.2 L951 616.4 L952 615.7 L953 615 L954 614.5 L955 613.6 L956 612.4 L956.5 612.2 L957 612.3 L958 613.7 L959 614.6 L960 615.2 L961 615.6 L962 616.9 L963 617.2 L963.2 617.6 L964 616.9 L965 616.1 L966 615.3 L967 614.8 L968 614.4 L969 613.5 L970 612.8 L971 611.9 L971.6 611.5 L972 611.6 L973 611.4 L974 611.9 L975 611.7 L976 611.7 L977 611.8 L978 611.4 L979 611.3 L979.2 611.5 L980 612.5 L981 613.2 L982 614.4 L983 615.2 L984 616.2 L985 616.7 L985.9 617.6 L986 616.5 L987 607.4 L988 598.5 L989 589.4 L990 580.3 L991 571.2 L992 562.1 L993 553 L993.2 551.2 L994 557 L995 564.3 L996 571.6 L997 578.9 L998 586.2 L999 593.5 L1000 600.8 L1001 608.3 L1001.1 608.8 L1002 610.1 L1003 611.5 L1004 612.5 L1005 614.1 L1006 615.1 L1007 616.6 L1007.8 617.6 L1008 617.6 L1009 617.3 L1010 617.1 L1011 617.5 L1012 617.1 L1013 617.3 L1014 617.4 L1015 616.7 L1016 617.1 L1017 616.9 L1018 616.5 L1019 616.3 L1020 616.6 L1021 616.2 L1022 616.4 L1022.1 616.3 L1023 616.7 L1024 616.4 L1025 616.8 L1026 616.9 L1027 616.8 L1028 616.8 L1029 617.2 L1030 617.3 L1031 617.1 L1032 617.4 L1033 617.3 L1034 617.4 L1035 617.7 L1035.6 617.6 L1036 617.4 L1037 617.6 L1037 617.3" fill="none" stroke="#f0a36c" stroke-width="1.1" stroke-linejoin="round"/><path d="M599 618.3 L599 618.1 L600 618.1 L601 617.5 L602 617.2 L603 616.7 L604 616.5 L605 615.9 L606 615.9 L607 615.2 L608 615 L609 614.7 L610 614.3 L611 613.8 L611.8 613.6 L612 613.9 L613 614.2 L614 614.8 L615 615.3 L616 615.7 L617 616.2 L618 616.6 L619 616.9 L620 617.5 L620.3 617.6 L621 617.5 L622 617.5 L623 617.5 L624 617.5 L625 617.7 L626 617.7 L627 617.6 L628 617.8 L629 618 L630 617.8 L631 617.8 L632 618 L633 618 L634 618 L635 617.8 L636 617.8 L637 617.9 L638 618 L639 618.2 L640 618.2 L641 618 L642 618 L643 618.1 L644 618.2 L645 618.3 L646 618.2 L647 618.3 L648 618.1 L649 618.3 L650 618.2 L651 618.2 L652 618.2 L653 618.1 L654 618.2 L655 618.4 L656 618.1 L657 618.3 L657 618.2 L658 617.9 L659 617.8 L660 617.4 L661 617.2 L662 617.1 L663 616.7 L664 616.4 L664.9 616.3 L665 616.2 L666 616.4 L667 616.9 L668 617.1 L669 617.6 L670 617.7 L671 618.2 L672 618.3 L672 618.2 L673 618.2 L674 618.4 L675 618.5 L676 618.5 L677 618.3 L678 618.5 L679 618.2 L680 618.3 L681 618.3 L682 618.3 L683 618.5 L684 618.3 L685 618.5 L686 618.3 L687 618.2 L688 618.5 L689 618.2 L690 618.1 L691 618.4 L692 618.4 L693 618.4 L694 618.2 L695 618.5 L696 618.2 L697 618.4 L698 618.2 L699 618.2 L700 618.2 L701 618.4 L702 618.3 L703 618.4 L704 618.2 L705 618.4 L706 618.5 L706 618.3 L707 618 L708 617.7 L709 617.2 L710 616.7 L711 616.4 L712 616.1 L713 615.4 L714 615.3 L715 614.6 L716 614.3 L716.3 614.3 L717 614.5 L718 614.7 L719 615.1 L720 615.3 L721 615.7 L722 616.2 L723 616.4 L724 616.7 L724.7 617 L725 616.8 L726 617.3 L727 617.4 L728 617.3 L729 617.8 L730 617.7 L731 617.8 L732 618.1 L733 618.5 L733 618.3 L734 618.2 L735 618.4 L736 618.3 L737 618.2 L738 618.4 L739 618.4 L740 618.5 L741 618.4 L742 618.5 L743 618.2 L744 618.2 L745 618.5 L746 618.3 L747 618.2 L748 618.2 L749 618.4 L750 618.3 L751 618.2 L752 618.3 L753 618.1 L754 618.2 L755 618.1 L756 618.5 L757 618.5 L758 618.3 L759 618.3 L760 618.4 L761 618.4 L762 618.2 L763 618.2 L764 618.5 L765 618.5 L765 618.3 L766 618.1 L767 618.1 L768 618.1 L769 617.6 L770 617.7 L771 617.7 L772 617.4 L773 617.3 L774 617.1 L775 616.9 L775.2 617 L776 617.2 L777 617.2 L778 617.2 L779 617.5 L780 617.5 L781 617.6 L782 617.8 L783 618 L784 618.3 L785 618.3 L785 618.1 L786 618.4 L787 618.4 L788 618.3 L789 618.3 L790 618.2 L791 618.3 L792 618.2 L793 618.2 L794 618.3 L795 618.4 L796 618.3 L797 618.3 L798 618.2 L799 618.4 L800 618.2 L801 618.2 L802 618.5 L803 618.1 L804 618.3 L805 618.3 L806 618.4 L807 618.4 L808 618.2 L809 618.2 L810 618.3 L811 618.3 L812 618.3 L813 618.5 L814 618.2 L815 618.4 L816 618.5 L817 618.4 L818 618.4 L818 618.3 L819 617.6 L820 617.3 L821 616.7 L822 615.8 L823 615.4 L824 614.6 L825 614.4 L826 613.7 L826 613.6 L827 614.1 L828 614.4 L829 614.7 L830 615.1 L831 615.3 L832 615.6 L833 616.2 L834 616.4 L835 616.8 L836 617.1 L836.9 617.6 L837 617.6 L838 617.8 L839 617.7 L840 617.9 L841 617.8 L842 617.5 L843 617.8 L844 617.7 L845 617.6 L846 617.7 L847 617.9 L848 617.8 L849 618 L850 617.8 L851 617.8 L852 618 L853 618 L854 617.8 L855 618.1 L856 618.1 L857 617.9 L858 617.9 L859 618 L860 618 L861 618.3 L862 618.1 L863 618.1 L864 618.3 L865 618.1 L866 618.3 L867 618.2 L868 618.1 L869 618.1 L870 618.4 L871 618.4 L872 618.2 L873 618.1 L874 618.3 L875 618.4 L875 618.3 L876 618.1 L877 617.9 L878 618 L879 617.9 L880 617.6 L881 617.3 L882 617.3 L883 617.1 L884 617.1 L884 617 L885 617.3 L886 617.5 L887 617.5 L888 617.7 L889 617.8 L890 618 L891 618.2 L892 618.3 L892 618.2 L893 618.4 L894 618.3 L895 618.3 L896 618.2 L897 618.1 L898 618.2 L899 618.5 L900 618.2 L901 618.3 L902 618.3 L903 618.5 L904 618.5 L905 618.5 L906 618.5 L907 618.5 L908 618.2 L909 618.2 L910 618.4 L911 618.4 L912 618.3 L913 618.5 L914 618.4 L915 618.3 L916 618.2 L917 618.2 L918 618.5 L919 618.2 L920 618.1 L921 618.2 L922 618.5 L923 618.3 L924 618.1 L925 618.4 L926 618.3 L927 618.3 L928 618.1 L929 618.2 L930 618.3 L930 618.3 L931 618.1 L932 618.1 L933 617.7 L934 617.7 L935 617.4 L936 617.4 L937 617 L938 616.8 L939 616.9 L940 616.6 L941 616.5 L941.3 616.3 L942 616.4 L943 616.8 L944 616.7 L945 617 L946 617.6 L947 617.7 L948 617.9 L949 618.2 L950 618.3 L950 618.3 L951 618.2 L952 618.3 L953 618.3 L954 618.5 L955 618.3 L956 618.2 L957 618.5 L958 618.4 L959 618.3 L960 618.3 L961 618.4 L962 618.2 L963 618.1 L964 618.3 L965 618.3 L965 618.1 L966 618 L967 617.9 L968 618 L969 617.8 L970 617.5 L971 617.4 L972 617.4 L973 617.3 L974 617.2 L975 617 L975 617 L976 617 L977 617.2 L978 617.3 L979 617.6 L980 617.6 L981 617.8 L982 618 L983 618.1 L984 618.1 L985 618.1 L986 618.3 L986 618.2 L987 617.9 L988 617.3 L989 616.8 L990 616.7 L991 616 L992 615.7 L993 615 L993.5 614.9 L994 615.3 L995 615.6 L996 616 L997 616.2 L998 616.7 L999 617.3 L1000 617.5 L1001 618 L1002 618.5 L1002 618.3 L1003 618.5 L1004 618.3 L1005 618.2 L1006 618.1 L1007 618.4 L1008 618.4 L1009 618.3 L1010 618.3 L1011 618.4 L1012 618.5 L1013 618.2 L1014 618.4 L1015 618.4 L1016 618.3 L1017 618.5 L1018 618.3 L1019 618.5 L1020 618.4 L1021 618.3 L1022 618.2 L1023 618.1 L1024 618.2 L1025 618.5 L1026 618.3 L1027 618.4 L1028 618.4 L1029 618.3 L1030 618.4 L1031 618.2 L1032 618.3 L1033 618.5 L1034 618.5 L1035 618.5 L1036 618.1 L1037 618.3 L1037 618.1" fill="none" stroke="#d9814a" stroke-width="1.1" stroke-linejoin="round"/><line x1="603.3" y1="619" x2="603.3" y2="622" stroke="#777" stroke-width="1"/><text x="603.3" y="633.62" font-size="9.28" textLength="20.20" lengthAdjust="spacingAndGlyphs" fill="#333" stroke="#333" stroke-width="0.1" text-anchor="middle" font-family="Liberation Sans">16:15</text><line x1="658" y1="619" x2="658" y2="622" stroke="#777" stroke-width="1"/><text x="658" y="633.62" font-size="9.28" textLength="20.20" lengthAdjust="spacingAndGlyphs" fill="#333" stroke="#333" stroke-width="0.1" text-anchor="middle" font-family="Liberation Sans">16:30</text><line x1="712.7" y1="619" x2="712.7" y2="622" stroke="#777" stroke-width="1"/><text x="712.7" y="633.62" font-size="9.28" textLength="20.20" lengthAdjust="spacingAndGlyphs" fill="#333" stroke="#333" stroke-width="0.1" text-anchor="middle" font-family="Liberation Sans">16:45</text><line x1="767.4" y1="619" x2="767.4" y2="622" stroke="#777" stroke-width="1"/><text x="767.4" y="633.62" font-size="9.28" textLength="20.20" lengthAdjust="spacingAndGlyphs" fill="#333" stroke="#333" stroke-width="0.1" text-anchor="middle" font-family="Liberation Sans">17:00</text><line x1="822" y1="619" x2="822" y2="622" stroke="#777" stroke-width="1"/><text x="822" y="633.62" font-size="9.28" textLength="20.20" lengthAdjust="spacingAndGlyphs" fill="#333" stroke="#333" stroke-width="0.1" text-anchor="middle" font-family="Liberation Sans">17:15</text><line x1="876.7" y1="619" x2="876.7" y2="622" stroke="#777" stroke-width="1"/><text x="876.7" y="633.62" font-size="9.28" textLength="20.20" lengthAdjust="spacingAndGlyphs" fill="#333" stroke="#333" stroke-width="0.1" text-anchor="middle" font-family="Liberation Sans">17:30</text><line x1="931.4" y1="619" x2="931.4" y2="622" stroke="#777" stroke-width="1"/><text x="931.4" y="633.62" font-size="9.28" textLength="20.20" lengthAdjust="spacingAndGlyphs" fill="#333" stroke="#333" stroke-width="0.1" text-anchor="middle" font-family="Liberation Sans">17:45</text><line x1="985.2" y1="619" x2="985.2" y2="622" stroke="#777" stroke-width="1"/><text x="985.2" y="633.62" font-size="9.28" textLength="20.20" lengthAdjust="spacingAndGlyphs" fill="#333" stroke="#333" stroke-width="0.1" text-anchor="middle" font-family="Liberation Sans">18:00</text><rect x="928" y="535.5" width="12" height="3.2" fill="#f0a36c" fill-opacity="0.6"/><text x="944" y="540.27" font-size="9.14" textLength="34.00" lengthAdjust="spacingAndGlyphs" fill="#333" stroke="#333" stroke-width="0.1" text-anchor="start" font-family="Liberation Sans">Resource</text><rect x="994" y="535.5" width="12" height="3.2" fill="#d9814a" fill-opacity="0.6"/><text x="1010" y="540.26" font-size="9.10" textLength="22.00" lengthAdjust="spacingAndGlyphs" fill="#333" stroke="#333" stroke-width="0.1" text-anchor="start" font-family="Liberation Sans">Signal</text></svg>

<!-- bottom tabs -->
<div class="t fitls" style="left:69px;font-size:10.4px;color:#333;letter-spacing:0px;-webkit-text-stroke:0.6px #333;top:717px;letter-spacing:-0.111px">Top queries</div>
<div class="t fitls" style="left:146px;font-size:10.4px;color:#6e6e6e;letter-spacing:0px;-webkit-text-stroke:0.35px #6e6e6e;top:717px;letter-spacing:-0.122px">Tracked queries</div>
<div class="t fitls" style="left:243px;font-size:10.4px;color:#6e6e6e;letter-spacing:0px;-webkit-text-stroke:0.35px #6e6e6e;top:717px;letter-spacing:-0.013px">Top waits</div>
<div class="t fitls" style="left:311px;font-size:10.4px;color:#6e6e6e;letter-spacing:0px;-webkit-text-stroke:0.35px #6e6e6e;top:717px;letter-spacing:-0.109px">Top procedures</div>
<div class="a" style="left:57px;top:740px;width:989px;height:1px;background:#dedede"></div>
<div class="a" style="left:57px;top:738px;width:77px;height:2px;background:#1f5c98"></div>
<div class="a" style="left:57px;top:746px;width:384px;height:28px;border:1px solid #c8c8c8;border-radius:2px"></div>
<svg class="a" style="left:63px;top:754px" width="11" height="11" viewBox="0 0 11 11"><circle cx="4.3" cy="4.3" r="3.2" fill="none" stroke="#222" stroke-width="1.6"/><path d="M6.8 6.8 L10 10" stroke="#222" stroke-width="1.9"/></svg>
<div class="t" style="left:77px;font-size:10px;color:#444;top:755px;font-size:9.44px">Enter a search term</div>
<div class="a" style="left:446px;top:749px;width:48px;height:22px;background:#6d6d6d;border-radius:2px;box-shadow:0 1px 2px rgba(0,0,0,.3)"></div>
<div class="t" style="left:456px;font-size:9.5px;font-weight:bold;color:#fff;top:755px;font-size:8.42px">Search</div>
<div class="a qh" style="left:502px;top:753px">?</div>
<div class="t" style="left:694px;font-size:10.5px;color:#222;top:755px;font-size:9.71px">Maximum results</div>
<div class="a" style="left:773px;top:746px;width:38px;height:28px;border:1px solid #c8c8c8;border-radius:2px"></div>
<div class="t" style="left:778px;font-size:10.5px;color:#222;top:755px;font-size:9.70px">10</div>
<svg class="a" style="left:798px;top:758px" width="6" height="4"><path d="M0 0 H6 L3 4Z" fill="#222"/></svg>
<div class="t" style="left:821px;font-size:10.5px;color:#222;top:756px;font-size:9.16px">Show as:</div>
<div class="a" style="left:864px;top:747px;width:182px;height:26px;border:1px solid #666;border-radius:2px"></div>
<div class="a" style="left:864px;top:747px;width:95px;height:26px;background:#1160b8;border-radius:2px 0 0 2px"></div>
<div class="a" style="left:1000px;top:747px;width:1px;height:26px;background:#666"></div>
<div class="t" style="left:872px;font-size:10.5px;color:#fff;top:755px;font-size:9.41px">Avg. per execution</div>
<div class="t" style="left:966px;font-size:10.5px;color:#222;top:755px;font-size:9.87px">Totals</div>
<div class="t" style="left:1007px;font-size:10.5px;color:#222;top:755px;font-size:9.66px">Impact</div>

<!-- table -->
<div class="a" style="left:57px;top:784px;width:989px;height:33px;background:#e9e9e9;border-top:1px solid #dedede;border-right:1px solid #dcdcdc"></div><div class="a" style="left:1045px;top:817px;width:1px;height:21px;background:#dcdcdc"></div><div class="a" style="left:57px;top:784px;width:1px;height:54px;background:#dcdcdc"></div>
<div class="a" style="left:313px;top:814px;width:84px;height:2px;background:#1a5fae"></div>
<div class="t th" style="left:81px;top:796px;font-size:8.89px">Query text</div>
<div class="t th" style="left:238px;top:796px;font-size:8.86px">Execution count</div>
<div class="t th" style="left:319px;color:#1a66b8;top:796px;font-size:9.05px">Duration (ms)</div>
<svg class="a" style="left:382px;top:797px" width="8" height="6"><path d="M1 1 L4 4.5 L7 1" fill="none" stroke="#1a66b8" stroke-width="1.6"/></svg>
<div class="t th" style="left:405px;top:796px;font-size:9.11px">CPU time (ms)</div>
<div class="t th" style="left:480px;top:796px;font-size:8.88px">Physical reads</div>
<div class="a qh" style="left:548px;top:794px">?</div>
<div class="t th" style="left:577px;top:796px;font-size:8.98px">Logical reads</div>
<div class="a qh" style="left:640px;top:794px">?</div>
<div class="t th" style="left:668px;top:796px;font-size:9.00px">Logical writes</div>
<div class="a qh" style="left:734px;top:794px">?</div>
<div class="t th" style="left:762px;top:796px;font-size:9.08px">Memory grant (KB)</div>
<div class="a qh" style="left:850px;top:794px">?</div>
<div class="t th" style="left:878px;top:796px;font-size:9.09px">Database</div>
<svg class="a" style="left:64px;top:828px" width="7" height="9"><path d="M1 0.8 L5.2 4.5 L1 8.2" fill="none" stroke="#555" stroke-width="1.7"/></svg>
<div class="t td fitls" style="left:81px;font-family:'Liberation Mono',monospace;color:#1f5aa6;font-size:10.5px;top:828px;letter-spacing:-0.863px">SELECT TOP <span style="color:#333">(12000000) *</span> I…</div>
<div class="t td" style="left:238px;top:828px;font-size:9.4px">8</div>
<div class="t td" style="left:319px;top:828px;font-size:9.41px">82,005</div>
<div class="t td" style="left:405px;top:829px;font-size:9.15px">123,698</div>
<div class="t td" style="left:480px;top:829px;font-size:9.15px">774,362</div>
<div class="t td" style="left:577px;top:829px;font-size:9.32px">519,513</div>
<div class="t td" style="left:668px;top:829px;font-size:9.38px">55,033</div>
<div class="t td" style="left:762px;top:828px;font-size:9.43px">394,211</div>
<div class="t td" style="left:878px;top:828px;font-size:9.56px">StackOverflow2013</div>
<svg class="a" style="left:1003px;top:828px" width="9" height="11" viewBox="0 0 9 11"><circle cx="4.5" cy="4.2" r="4.2" fill="#1a73d0"/><path d="M2.2 7 H6.8 L6 9 H3Z" fill="#1a73d0"/><rect x="3" y="9.6" width="3" height="1.4" fill="#1a73d0"/></svg>
<svg class="a" style="left:1026px;top:829px" width="4" height="9"><rect x="1" y="0" width="2" height="2" fill="#222"/><rect x="1" y="3.5" width="2" height="2" fill="#222"/><rect x="1" y="7" width="2" height="2" fill="#222"/></svg>

<!-- right panel -->
<svg class="a" style="left:1085px;top:61px" width="7" height="10"><path d="M1 1 L5 5 L1 9" fill="none" stroke="#fff" stroke-width="1.4"/></svg>
<div class="t" style="left:1102px;font-size:14px;font-weight:bold;color:#fff;top:61px;font-size:12.46px">About</div>
<svg class="a" style="left:1080px;top:98px" width="15" height="14" viewBox="0 0 15 14"><path d="M0 1 Q0 0 1 0 H7 L14.5 7.5 L8 14 L0 7Z" fill="#fff"/><circle cx="3.5" cy="3.5" r="1.4" fill="#2f2f2f"/></svg>
<div class="a" style="left:1100px;top:90px;width:223px;height:29px;border:2px solid #6e6e6e;border-radius:2px"></div>
<div class="a" style="left:1107px;top:96px;width:74px;height:18px;border-radius:9px;background:#d4e5f7"></div>
<div class="t" style="left:1117px;font-size:8.5px;color:#333;top:101px;font-size:7.58px">SQL Server</div>
<svg class="a" style="left:1164px;top:101px" width="8" height="8"><path d="M1 1 L7 7 M7 1 L1 7" stroke="#222" stroke-width="1.8"/></svg>
<svg class="a" style="left:1082px;top:138px" width="12" height="14" viewBox="0 0 12 14"><path d="M6 0.5 C9 0.5 10 3 10 5.5 V9 L11.5 11 H0.5 L2 9 V5.5 C2 3 3 0.5 6 0.5Z" fill="#fff"/><path d="M4.5 12 H7.5 A1.5 1.5 0 0 1 4.5 12Z" fill="#fff"/></svg>
<div class="t" style="left:1102px;font-size:13.5px;font-weight:bold;color:#fff;top:140px;font-size:12.80px">Latest alerts</div>
<div class="t" style="left:1074px;font-size:9.5px;color:#f0f0f0;top:161px;font-size:9.58px">Alerts raised or updated in the selected period</div>
<div class="a" style="left:1074px;top:181px;width:15px;height:15px;border:1px solid #9a9a9a"></div>
<div class="t" style="left:1093px;font-size:10.5px;color:#f0f0f0;top:184px;font-size:9.99px">Cleared</div>
<div class="a" style="left:1133px;top:181px;width:15px;height:15px;background:#6b6b6b"></div>
<svg class="a" style="left:1133px;top:181px" width="15" height="15"><path d="M3.5 8 L6.3 10.8 L11.5 4.5" fill="none" stroke="#fff" stroke-width="2"/></svg>
<div class="t fitls" style="left:1152px;font-size:10px;color:#f0f0f0;top:184px;letter-spacing:-0.084px">Ended</div>
<div class="a" style="left:1074px;top:211px;width:249px;height:30px;background:#474747"></div>
<div class="t" style="left:1081px;font-size:10.5px;color:#fff;top:221px;font-size:10.42px">From 16:14 to 18:14</div>


<div class="a card" style="top:253px"></div><div class="a bar" style="top:253px;background:#2f86d6"></div><svg class="a" style="left:1086px;top:269px" width="13" height="9"><path d="M0 5 H3.5 L5 2 L7 8 L8.5 4 H13" fill="none" stroke="#9a9a9a" stroke-width="1.2"/></svg><div class="t ti dim" style="left:1108px;top:262px;font-size:9.44px">Long-running query</div><div class="t su dim" style="left:1108px;top:276px;font-size:8.12px">Ended at 16:25</div>
<div class="a card" style="top:301px"></div><div class="a bar" style="top:301px;background:#f5a030"></div><svg class="a" style="left:1086px;top:314px" width="15" height="13" viewBox="0 0 15 13"><path d="M7.5 0.3 L14.7 12.7 H0.3Z" fill="#fff"/><rect x="6.7" y="4.2" width="1.6" height="4.5" fill="#3b3b3b"/><rect x="6.7" y="9.7" width="1.6" height="1.6" fill="#3b3b3b"/></svg><div class="t ti wht" style="left:1108px;top:310px;font-size:9.41px">Error log entry</div><div class="t su wht" style="left:1108px;top:325px;font-size:8.22px">Raised at 16:40</div>
<div class="a card" style="top:348px"></div><div class="a bar" style="top:348px;background:#f5a030"></div><svg class="a" style="left:1086px;top:361px" width="15" height="13" viewBox="0 0 15 13"><path d="M7.5 0.3 L14.7 12.7 H0.3Z" fill="#fff"/><rect x="6.7" y="4.2" width="1.6" height="4.5" fill="#3b3b3b"/><rect x="6.7" y="9.7" width="1.6" height="1.6" fill="#3b3b3b"/></svg><div class="t ti wht" style="left:1108px;top:357px;font-size:9.41px">Error log entry</div><div class="t su wht" style="left:1108px;top:372px;font-size:8.22px">Raised at 17:10</div>
<div class="a card" style="top:395px"></div><div class="a bar" style="top:395px;background:#2f86d6"></div><svg class="a" style="left:1086px;top:411px" width="13" height="9"><path d="M0 5 H3.5 L5 2 L7 8 L8.5 4 H13" fill="none" stroke="#9a9a9a" stroke-width="1.2"/></svg><div class="t ti dim" style="left:1108px;top:404px;font-size:9.44px">Long-running query</div><div class="t su dim" style="left:1108px;top:418px;font-size:8.12px">Ended at 17:25</div>
<div class="a card" style="top:442px"></div><div class="a bar" style="top:442px;background:#f5a030"></div><svg class="a" style="left:1086px;top:455px" width="15" height="13" viewBox="0 0 15 13"><path d="M7.5 0.3 L14.7 12.7 H0.3Z" fill="#fff"/><rect x="6.7" y="4.2" width="1.6" height="4.5" fill="#3b3b3b"/><rect x="6.7" y="9.7" width="1.6" height="1.6" fill="#3b3b3b"/></svg><div class="t ti wht" style="left:1108px;top:451px;font-size:9.41px">Error log entry</div><div class="t su wht" style="left:1108px;top:466px;font-size:8.22px">Raised at 17:40</div>
<div class="a card" style="top:489.5px"></div><div class="a bar" style="top:489.5px;background:#f5a030"></div><svg class="a" style="left:1086px;top:502.5px" width="15" height="13" viewBox="0 0 15 13"><path d="M7.5 0.3 L14.7 12.7 H0.3Z" fill="#fff"/><rect x="6.7" y="4.2" width="1.6" height="4.5" fill="#3b3b3b"/><rect x="6.7" y="9.7" width="1.6" height="1.6" fill="#3b3b3b"/></svg><div class="t ti wht" style="left:1108px;top:498px;font-size:9.41px">Error log entry</div><div class="t su wht" style="left:1108px;top:514px;font-size:8.22px">Raised at 18:10</div>
<div class="a" style="left:1074px;top:544px;width:249px;height:30px;background:#474747"></div>
<div class="t" style="left:1081px;font-size:10.5px;color:#fff;top:554px;font-size:10.46px">Last 24 hours</div>
<svg class="a" style="left:1303px;top:555px" width="10" height="7"><path d="M1 1 L5 5 L9 1" fill="none" stroke="#fff" stroke-width="2"/></svg>
</body></html>
